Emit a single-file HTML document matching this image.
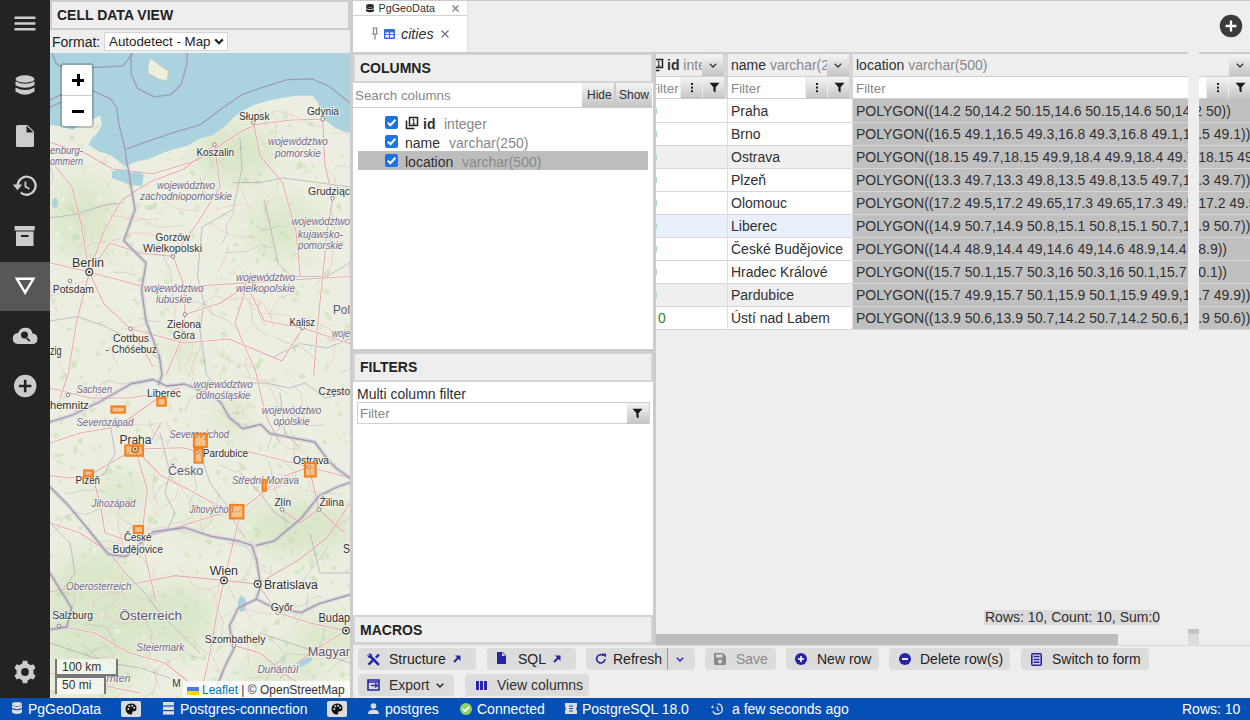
<!DOCTYPE html>
<html><head><meta charset="utf-8">
<style>
*{box-sizing:border-box;margin:0;padding:0}
html,body{width:1250px;height:720px;overflow:hidden;background:#cccccc;font-family:"Liberation Sans",sans-serif;font-size:14px;color:#303030}
.a{position:absolute}
.hdr{background:#eeeeee;font-weight:bold;font-size:14px;color:#222}
.btn{position:absolute;background:#dcdcdc;border-radius:4px;height:22px}
.gb{position:absolute;background:linear-gradient(#f4f4f4,#c4c4c4)}
.t{position:absolute;white-space:nowrap;line-height:16px}
.ic{position:absolute;fill:#2a2aa0}
.row{position:absolute;left:656px;width:594px;height:23px;border-bottom:1px solid #dddddd}
svg{position:absolute;overflow:visible}
</style></head><body>

<div class="a" style="left:0;top:0;width:50px;height:698px;background:#232323"></div>
<div class="a" style="left:0;top:262px;width:50px;height:49px;background:#575757"></div>
<svg style="left:0;top:0" width="50" height="698">
 <g fill="#cccccc">
  <rect x="14.5" y="16.5" width="21" height="2.6" rx="0.5"/>
  <rect x="14.5" y="22.2" width="21" height="2.6" rx="0.5"/>
  <rect x="14.5" y="28" width="21" height="2.6" rx="0.5"/>
  <!-- db -->
  <ellipse cx="25" cy="79" rx="9.5" ry="3.7"/>
  <path d="M15.5 81.2 Q25 86.5 34.5 81.2 L34.5 85.2 Q25 90.5 15.5 85.2 Z"/>
  <path d="M15.5 87.4 Q25 92.7 34.5 87.4 L34.5 91.6 Q25 98 15.5 91.6 Z"/>
  <!-- file -->
  <path d="M17.5 125 L27.5 125 L34 131.5 L34 145.5 Q34 147 32.5 147 L17.5 147 Q16 147 16 145.5 L16 126.5 Q16 125 17.5 125 Z M26.5 125.5 L26.5 132.5 L33.5 132.5 Z" fill-rule="evenodd"/>
  <!-- history -->
 </g>
 <path d="M17.6 185.5 A9 9 0 1 1 20.8 192.6" fill="none" stroke="#cccccc" stroke-width="2.3"/>
 <path d="M25.4 181.5 V186.6 L29.4 189" fill="none" stroke="#cccccc" stroke-width="1.8"/>
 <g fill="#cccccc">
  <path d="M12.8 184.6 L22.2 184.6 L17.5 190.2 Z"/>
  <!-- archive -->
  <rect x="14.6" y="226" width="20.1" height="4.5"/>
  <path d="M16 231.5 L33.5 231.5 L33.5 246 L16 246 Z M21 235 L21 237 L28.5 237 L28.5 235 Z" fill-rule="evenodd"/>
  <!-- cloud search -->
  <path d="M19 344 Q12.8 344 12.8 338.5 Q12.8 333.5 18 333 Q20 327.8 25.5 327.8 Q31.5 327.8 32.5 333.5 Q37.5 334 37.5 338.8 Q37.5 344 32 344 Z M24.5 331.5 A3.5 3.5 0 1 0 24.5 338.5 A3.5 3.5 0 1 0 24.5 331.5 Z M27 337 L30.5 340.5 L29.2 341.8 L25.7 338.3 Z" fill-rule="evenodd"/>
  <circle cx="24.5" cy="335" r="2.2" fill="#232323"/>
  <!-- plus circle -->
  <circle cx="25.2" cy="386" r="11.2"/>
  <!-- gear -->
  <path d="M22.8 660.8 L27.2 660.8 L27.8 663.6 Q29.4 664.2 30.6 665.2 L33.4 664.2 L35.6 668 L33.4 670 Q33.6 672 33.4 673.8 L35.6 675.8 L33.4 679.6 L30.6 678.6 Q29.4 679.6 27.8 680.2 L27.2 683.2 L22.8 683.2 L22.2 680.2 Q20.6 679.6 19.4 678.6 L16.6 679.6 L14.4 675.8 L16.6 673.8 Q16.4 672 16.6 670 L14.4 668 L16.6 664.2 L19.4 665.2 Q20.6 664.2 22.2 663.6 Z"/>
 </g>
 <path d="M19 386 L31.4 386 M25.2 379.8 L25.2 392.2" stroke="#232323" stroke-width="2.6"/>
 <circle cx="25" cy="672" r="3.9" fill="#232323"/>
 <path d="M16.8 278.8 L33.4 278.8 L25.1 292.6 Z" fill="none" stroke="#ffffff" stroke-width="2.4" stroke-linejoin="miter"/>
</svg>

<!-- cell data view panel -->
<div class="a" style="left:50px;top:0;width:300px;height:30px;background:#cccccc"></div>
<div class="a hdr" style="left:52px;top:2px;width:296px;height:26px"></div>
<div class="t hdr" style="left:57px;top:7px">CELL DATA VIEW</div>
<div class="a" style="left:50px;top:30px;width:300px;height:23px;background:#eeeeee"></div>
<div class="t" style="left:52px;top:34px;color:#222">Format:</div>
<div class="a" style="left:104px;top:32px;width:124px;height:19px;background:#fff;border:1px solid #d4d4d4;border-radius:0"></div>
<div class="t" style="left:109px;top:34px;color:#222;font-size:13.333px">Autodetect - Map</div>
<svg style="left:214px;top:38px" width="10" height="7" viewBox="0 0 10 7"><path d="M1.2 1.4 L5 5.2 L8.8 1.4" fill="none" stroke="#222" stroke-width="2.2"/></svg>
<div class="a" style="left:50px;top:53px;width:300px;height:645px;background:#ebeee0;overflow:hidden">
<svg style="left:0;top:0" width="300" height="645" viewBox="0 0 300 645">
<defs><filter id="bl" x="-50%" y="-50%" width="200%" height="200%"><feGaussianBlur stdDeviation="10"/></filter></defs>
<ellipse cx="185" cy="100" rx="40" ry="30" fill="#c9e0b3" opacity="0.50" filter="url(#bl)"/>
<ellipse cx="33" cy="165" rx="35" ry="38" fill="#c9e0b3" opacity="0.45" filter="url(#bl)"/>
<ellipse cx="232" cy="175" rx="36" ry="28" fill="#c9e0b3" opacity="0.45" filter="url(#bl)"/>
<ellipse cx="134" cy="300" rx="20" ry="14" fill="#c9e0b3" opacity="0.35" filter="url(#bl)"/>
<ellipse cx="45" cy="570" rx="50" ry="75" fill="#c9e0b3" opacity="0.50" filter="url(#bl)"/>
<ellipse cx="250" cy="475" rx="55" ry="28" fill="#c9e0b3" opacity="0.50" filter="url(#bl)"/>
<ellipse cx="125" cy="565" rx="40" ry="35" fill="#c9e0b3" opacity="0.50" filter="url(#bl)"/>
<ellipse cx="275" cy="585" rx="28" ry="25" fill="#c9e0b3" opacity="0.45" filter="url(#bl)"/>
<ellipse cx="180" cy="365" rx="15" ry="25" fill="#c9e0b3" opacity="0.35" filter="url(#bl)"/>
<ellipse cx="70" cy="440" rx="30" ry="20" fill="#c9e0b3" opacity="0.35" filter="url(#bl)"/>
<ellipse cx="150" cy="470" rx="20" ry="15" fill="#c9e0b3" opacity="0.30" filter="url(#bl)"/>
<ellipse cx="230" cy="620" rx="40" ry="25" fill="#c9e0b3" opacity="0.35" filter="url(#bl)"/>
<ellipse cx="97.1" cy="131.3" rx="3.0" ry="1.1" transform="rotate(96 97.1 131.3)" fill="#c3ddb0" opacity="0.6"/>
<ellipse cx="174.8" cy="590.4" rx="1.6" ry="1.2" transform="rotate(75 174.8 590.4)" fill="#d6e8c4" opacity="0.6"/>
<ellipse cx="27.2" cy="296.8" rx="3.5" ry="1.2" transform="rotate(40 27.2 296.8)" fill="#cfe3ba" opacity="0.6"/>
<ellipse cx="173.1" cy="280.0" rx="3.9" ry="1.1" transform="rotate(155 173.1 280.0)" fill="#c3ddb0" opacity="0.6"/>
<ellipse cx="125.7" cy="367.1" rx="2.7" ry="2.1" transform="rotate(123 125.7 367.1)" fill="#cfe3ba" opacity="0.6"/>
<ellipse cx="174.5" cy="426.5" rx="2.1" ry="2.1" transform="rotate(11 174.5 426.5)" fill="#cfe3ba" opacity="0.6"/>
<ellipse cx="185.7" cy="340.3" rx="2.6" ry="2.6" transform="rotate(84 185.7 340.3)" fill="#f4f1ea" opacity="0.6"/>
<ellipse cx="108.5" cy="190.3" rx="1.5" ry="2.6" transform="rotate(15 108.5 190.3)" fill="#c3ddb0" opacity="0.6"/>
<ellipse cx="157.6" cy="569.5" rx="3.2" ry="1.6" transform="rotate(176 157.6 569.5)" fill="#cfe3ba" opacity="0.6"/>
<ellipse cx="153.6" cy="139.8" rx="2.0" ry="2.9" transform="rotate(76 153.6 139.8)" fill="#cfe3ba" opacity="0.6"/>
<ellipse cx="229.4" cy="386.7" rx="3.6" ry="1.6" transform="rotate(125 229.4 386.7)" fill="#f4f1ea" opacity="0.6"/>
<ellipse cx="174.0" cy="316.0" rx="3.5" ry="2.9" transform="rotate(85 174.0 316.0)" fill="#cfe3ba" opacity="0.6"/>
<ellipse cx="18.2" cy="464.4" rx="2.9" ry="3.0" transform="rotate(148 18.2 464.4)" fill="#c3ddb0" opacity="0.6"/>
<ellipse cx="215.0" cy="576.7" rx="2.0" ry="2.9" transform="rotate(64 215.0 576.7)" fill="#cfe3ba" opacity="0.6"/>
<ellipse cx="148.1" cy="172.0" rx="1.9" ry="2.5" transform="rotate(72 148.1 172.0)" fill="#f4f1ea" opacity="0.6"/>
<ellipse cx="24.2" cy="311.8" rx="2.6" ry="2.8" transform="rotate(147 24.2 311.8)" fill="#c3ddb0" opacity="0.6"/>
<ellipse cx="211.9" cy="636.8" rx="3.0" ry="1.8" transform="rotate(42 211.9 636.8)" fill="#cfe3ba" opacity="0.6"/>
<ellipse cx="52.9" cy="180.3" rx="1.7" ry="2.0" transform="rotate(106 52.9 180.3)" fill="#c3ddb0" opacity="0.6"/>
<ellipse cx="84.6" cy="128.1" rx="2.6" ry="2.2" transform="rotate(57 84.6 128.1)" fill="#d6e8c4" opacity="0.6"/>
<ellipse cx="207.1" cy="351.9" rx="2.9" ry="2.4" transform="rotate(10 207.1 351.9)" fill="#f4f1ea" opacity="0.6"/>
<ellipse cx="119.4" cy="278.4" rx="2.4" ry="1.8" transform="rotate(34 119.4 278.4)" fill="#d6e8c4" opacity="0.6"/>
<ellipse cx="132.2" cy="106.5" rx="2.8" ry="1.2" transform="rotate(102 132.2 106.5)" fill="#cfe3ba" opacity="0.6"/>
<ellipse cx="284.7" cy="411.3" rx="1.2" ry="1.4" transform="rotate(68 284.7 411.3)" fill="#c3ddb0" opacity="0.6"/>
<ellipse cx="286.6" cy="404.4" rx="2.4" ry="1.2" transform="rotate(88 286.6 404.4)" fill="#f4f1ea" opacity="0.6"/>
<ellipse cx="144.1" cy="228.7" rx="1.4" ry="2.5" transform="rotate(133 144.1 228.7)" fill="#f4f1ea" opacity="0.6"/>
<ellipse cx="248.7" cy="137.7" rx="1.1" ry="2.9" transform="rotate(95 248.7 137.7)" fill="#d6e8c4" opacity="0.6"/>
<ellipse cx="207.0" cy="593.1" rx="3.3" ry="1.6" transform="rotate(116 207.0 593.1)" fill="#cfe3ba" opacity="0.6"/>
<ellipse cx="208.9" cy="198.0" rx="2.1" ry="1.3" transform="rotate(139 208.9 198.0)" fill="#c3ddb0" opacity="0.6"/>
<ellipse cx="190.9" cy="411.0" rx="3.4" ry="2.5" transform="rotate(35 190.9 411.0)" fill="#d6e8c4" opacity="0.6"/>
<ellipse cx="245.5" cy="487.6" rx="1.7" ry="2.0" transform="rotate(64 245.5 487.6)" fill="#cfe3ba" opacity="0.6"/>
<ellipse cx="296.9" cy="518.0" rx="2.4" ry="1.4" transform="rotate(109 296.9 518.0)" fill="#c3ddb0" opacity="0.6"/>
<ellipse cx="134.2" cy="606.9" rx="4.0" ry="2.9" transform="rotate(66 134.2 606.9)" fill="#d6e8c4" opacity="0.6"/>
<ellipse cx="30.6" cy="324.4" rx="2.0" ry="2.0" transform="rotate(177 30.6 324.4)" fill="#cfe3ba" opacity="0.6"/>
<ellipse cx="143.8" cy="435.1" rx="3.4" ry="1.2" transform="rotate(119 143.8 435.1)" fill="#f4f1ea" opacity="0.6"/>
<ellipse cx="234.7" cy="493.8" rx="2.4" ry="1.4" transform="rotate(142 234.7 493.8)" fill="#c3ddb0" opacity="0.6"/>
<ellipse cx="26.0" cy="612.4" rx="3.2" ry="1.9" transform="rotate(134 26.0 612.4)" fill="#cfe3ba" opacity="0.6"/>
<ellipse cx="217.4" cy="142.9" rx="1.4" ry="1.3" transform="rotate(163 217.4 142.9)" fill="#d6e8c4" opacity="0.6"/>
<ellipse cx="183.5" cy="400.5" rx="2.4" ry="2.9" transform="rotate(28 183.5 400.5)" fill="#d6e8c4" opacity="0.6"/>
<ellipse cx="6.4" cy="523.6" rx="3.2" ry="1.2" transform="rotate(135 6.4 523.6)" fill="#d6e8c4" opacity="0.6"/>
<ellipse cx="130.1" cy="567.4" rx="3.5" ry="1.4" transform="rotate(45 130.1 567.4)" fill="#c3ddb0" opacity="0.6"/>
<ellipse cx="150.3" cy="502.0" rx="2.0" ry="2.1" transform="rotate(150 150.3 502.0)" fill="#cfe3ba" opacity="0.6"/>
<ellipse cx="273.0" cy="254.0" rx="2.4" ry="2.2" transform="rotate(163 273.0 254.0)" fill="#f4f1ea" opacity="0.6"/>
<ellipse cx="248.1" cy="571.3" rx="1.4" ry="1.3" transform="rotate(92 248.1 571.3)" fill="#f4f1ea" opacity="0.6"/>
<ellipse cx="233.0" cy="408.2" rx="3.3" ry="1.3" transform="rotate(25 233.0 408.2)" fill="#cfe3ba" opacity="0.6"/>
<ellipse cx="166.9" cy="237.2" rx="2.6" ry="2.1" transform="rotate(141 166.9 237.2)" fill="#cfe3ba" opacity="0.6"/>
<ellipse cx="265.0" cy="74.4" rx="1.6" ry="1.1" transform="rotate(18 265.0 74.4)" fill="#f4f1ea" opacity="0.6"/>
<ellipse cx="168.5" cy="499.8" rx="3.7" ry="1.9" transform="rotate(110 168.5 499.8)" fill="#d6e8c4" opacity="0.6"/>
<ellipse cx="207.8" cy="313.7" rx="2.6" ry="2.0" transform="rotate(169 207.8 313.7)" fill="#c3ddb0" opacity="0.6"/>
<ellipse cx="276.8" cy="580.1" rx="1.6" ry="1.9" transform="rotate(75 276.8 580.1)" fill="#f4f1ea" opacity="0.6"/>
<ellipse cx="132.6" cy="83.9" rx="1.7" ry="1.1" transform="rotate(121 132.6 83.9)" fill="#cfe3ba" opacity="0.6"/>
<ellipse cx="269.1" cy="133.4" rx="3.1" ry="2.3" transform="rotate(26 269.1 133.4)" fill="#d6e8c4" opacity="0.6"/>
<ellipse cx="290.3" cy="172.9" rx="3.9" ry="1.8" transform="rotate(88 290.3 172.9)" fill="#d6e8c4" opacity="0.6"/>
<ellipse cx="48.4" cy="301.1" rx="2.5" ry="1.7" transform="rotate(35 48.4 301.1)" fill="#c3ddb0" opacity="0.6"/>
<ellipse cx="27.7" cy="261.4" rx="2.0" ry="1.9" transform="rotate(127 27.7 261.4)" fill="#f4f1ea" opacity="0.6"/>
<ellipse cx="99.4" cy="417.5" rx="2.5" ry="1.1" transform="rotate(177 99.4 417.5)" fill="#d6e8c4" opacity="0.6"/>
<ellipse cx="291.5" cy="103.4" rx="1.8" ry="1.1" transform="rotate(140 291.5 103.4)" fill="#c3ddb0" opacity="0.6"/>
<ellipse cx="226.7" cy="536.0" rx="3.5" ry="2.4" transform="rotate(170 226.7 536.0)" fill="#f4f1ea" opacity="0.6"/>
<ellipse cx="44.8" cy="596.1" rx="2.7" ry="2.4" transform="rotate(16 44.8 596.1)" fill="#cfe3ba" opacity="0.6"/>
<ellipse cx="239.9" cy="150.9" rx="3.7" ry="1.5" transform="rotate(3 239.9 150.9)" fill="#cfe3ba" opacity="0.6"/>
<ellipse cx="240.5" cy="90.7" rx="3.6" ry="1.1" transform="rotate(155 240.5 90.7)" fill="#f4f1ea" opacity="0.6"/>
<ellipse cx="3.5" cy="641.6" rx="2.3" ry="2.8" transform="rotate(112 3.5 641.6)" fill="#cfe3ba" opacity="0.6"/>
<ellipse cx="158.1" cy="184.3" rx="1.3" ry="1.3" transform="rotate(9 158.1 184.3)" fill="#d6e8c4" opacity="0.6"/>
<ellipse cx="279.7" cy="420.3" rx="2.6" ry="1.4" transform="rotate(80 279.7 420.3)" fill="#d6e8c4" opacity="0.6"/>
<ellipse cx="81.2" cy="526.2" rx="4.0" ry="1.1" transform="rotate(3 81.2 526.2)" fill="#d6e8c4" opacity="0.6"/>
<ellipse cx="154.3" cy="188.6" rx="2.3" ry="2.3" transform="rotate(117 154.3 188.6)" fill="#f4f1ea" opacity="0.6"/>
<ellipse cx="163.8" cy="577.7" rx="3.9" ry="1.6" transform="rotate(39 163.8 577.7)" fill="#d6e8c4" opacity="0.6"/>
<ellipse cx="102.8" cy="543.5" rx="3.1" ry="2.3" transform="rotate(73 102.8 543.5)" fill="#c3ddb0" opacity="0.6"/>
<ellipse cx="294.6" cy="546.4" rx="1.0" ry="2.3" transform="rotate(158 294.6 546.4)" fill="#f4f1ea" opacity="0.6"/>
<ellipse cx="49.0" cy="91.1" rx="3.5" ry="2.7" transform="rotate(121 49.0 91.1)" fill="#c3ddb0" opacity="0.6"/>
<ellipse cx="179.6" cy="459.1" rx="1.1" ry="1.4" transform="rotate(48 179.6 459.1)" fill="#cfe3ba" opacity="0.6"/>
<ellipse cx="79.0" cy="621.9" rx="3.9" ry="2.1" transform="rotate(44 79.0 621.9)" fill="#c3ddb0" opacity="0.6"/>
<ellipse cx="65.4" cy="150.7" rx="2.0" ry="1.2" transform="rotate(50 65.4 150.7)" fill="#d6e8c4" opacity="0.6"/>
<ellipse cx="74.5" cy="509.6" rx="1.3" ry="2.6" transform="rotate(26 74.5 509.6)" fill="#cfe3ba" opacity="0.6"/>
<ellipse cx="118.2" cy="221.3" rx="2.9" ry="1.2" transform="rotate(172 118.2 221.3)" fill="#d6e8c4" opacity="0.6"/>
<ellipse cx="197.3" cy="473.2" rx="3.6" ry="1.8" transform="rotate(59 197.3 473.2)" fill="#f4f1ea" opacity="0.6"/>
<ellipse cx="44.8" cy="478.1" rx="2.9" ry="1.1" transform="rotate(150 44.8 478.1)" fill="#f4f1ea" opacity="0.6"/>
<ellipse cx="220.2" cy="531.4" rx="1.4" ry="2.0" transform="rotate(91 220.2 531.4)" fill="#cfe3ba" opacity="0.6"/>
<ellipse cx="247.9" cy="393.4" rx="3.7" ry="2.4" transform="rotate(125 247.9 393.4)" fill="#d6e8c4" opacity="0.6"/>
<ellipse cx="25.5" cy="65.3" rx="2.9" ry="2.9" transform="rotate(68 25.5 65.3)" fill="#f4f1ea" opacity="0.6"/>
<ellipse cx="167.6" cy="419.8" rx="2.9" ry="2.4" transform="rotate(88 167.6 419.8)" fill="#cfe3ba" opacity="0.6"/>
<ellipse cx="137.1" cy="82.4" rx="3.8" ry="2.8" transform="rotate(17 137.1 82.4)" fill="#cfe3ba" opacity="0.6"/>
<ellipse cx="223.7" cy="326.7" rx="3.4" ry="2.7" transform="rotate(42 223.7 326.7)" fill="#d6e8c4" opacity="0.6"/>
<ellipse cx="69.2" cy="433.2" rx="2.4" ry="2.7" transform="rotate(14 69.2 433.2)" fill="#c3ddb0" opacity="0.6"/>
<ellipse cx="230.1" cy="413.3" rx="2.9" ry="1.2" transform="rotate(27 230.1 413.3)" fill="#c3ddb0" opacity="0.6"/>
<ellipse cx="195.5" cy="459.2" rx="2.9" ry="1.3" transform="rotate(87 195.5 459.2)" fill="#f4f1ea" opacity="0.6"/>
<ellipse cx="80.6" cy="446.6" rx="3.1" ry="2.4" transform="rotate(52 80.6 446.6)" fill="#c3ddb0" opacity="0.6"/>
<ellipse cx="139.4" cy="322.1" rx="1.4" ry="2.8" transform="rotate(36 139.4 322.1)" fill="#cfe3ba" opacity="0.6"/>
<ellipse cx="280.9" cy="50.6" rx="2.4" ry="2.6" transform="rotate(174 280.9 50.6)" fill="#f4f1ea" opacity="0.6"/>
<ellipse cx="298.2" cy="274.0" rx="3.7" ry="2.9" transform="rotate(13 298.2 274.0)" fill="#cfe3ba" opacity="0.6"/>
<ellipse cx="42.5" cy="357.1" rx="3.9" ry="1.3" transform="rotate(148 42.5 357.1)" fill="#c3ddb0" opacity="0.6"/>
<ellipse cx="266.1" cy="465.5" rx="1.7" ry="2.8" transform="rotate(88 266.1 465.5)" fill="#cfe3ba" opacity="0.6"/>
<ellipse cx="47.7" cy="614.7" rx="3.0" ry="1.8" transform="rotate(131 47.7 614.7)" fill="#f4f1ea" opacity="0.6"/>
<ellipse cx="103.2" cy="231.2" rx="3.5" ry="1.0" transform="rotate(135 103.2 231.2)" fill="#f4f1ea" opacity="0.6"/>
<ellipse cx="36.0" cy="600.5" rx="3.1" ry="2.8" transform="rotate(52 36.0 600.5)" fill="#c3ddb0" opacity="0.6"/>
<ellipse cx="19.5" cy="276.0" rx="3.6" ry="1.2" transform="rotate(167 19.5 276.0)" fill="#c3ddb0" opacity="0.6"/>
<ellipse cx="256.3" cy="209.8" rx="1.2" ry="2.3" transform="rotate(114 256.3 209.8)" fill="#d6e8c4" opacity="0.6"/>
<ellipse cx="74.8" cy="200.8" rx="2.5" ry="1.4" transform="rotate(67 74.8 200.8)" fill="#f4f1ea" opacity="0.6"/>
<ellipse cx="265.3" cy="531.2" rx="2.9" ry="2.8" transform="rotate(169 265.3 531.2)" fill="#d6e8c4" opacity="0.6"/>
<ellipse cx="215.9" cy="69.9" rx="3.2" ry="1.9" transform="rotate(135 215.9 69.9)" fill="#c3ddb0" opacity="0.6"/>
<ellipse cx="145.7" cy="591.7" rx="2.7" ry="1.3" transform="rotate(75 145.7 591.7)" fill="#c3ddb0" opacity="0.6"/>
<ellipse cx="89.3" cy="487.1" rx="3.9" ry="1.5" transform="rotate(118 89.3 487.1)" fill="#c3ddb0" opacity="0.6"/>
<ellipse cx="145.0" cy="444.7" rx="1.4" ry="2.3" transform="rotate(14 145.0 444.7)" fill="#f4f1ea" opacity="0.6"/>
<ellipse cx="165.1" cy="314.1" rx="2.0" ry="2.5" transform="rotate(77 165.1 314.1)" fill="#d6e8c4" opacity="0.6"/>
<ellipse cx="73.2" cy="145.7" rx="2.7" ry="1.6" transform="rotate(66 73.2 145.7)" fill="#d6e8c4" opacity="0.6"/>
<ellipse cx="266.2" cy="493.5" rx="2.2" ry="1.8" transform="rotate(94 266.2 493.5)" fill="#f4f1ea" opacity="0.6"/>
<ellipse cx="81.1" cy="495.0" rx="2.5" ry="2.1" transform="rotate(65 81.1 495.0)" fill="#d6e8c4" opacity="0.6"/>
<ellipse cx="27.8" cy="582.6" rx="2.2" ry="2.3" transform="rotate(78 27.8 582.6)" fill="#c3ddb0" opacity="0.6"/>
<ellipse cx="254.6" cy="568.1" rx="1.1" ry="1.1" transform="rotate(128 254.6 568.1)" fill="#f4f1ea" opacity="0.6"/>
<ellipse cx="290.5" cy="336.3" rx="1.2" ry="2.9" transform="rotate(167 290.5 336.3)" fill="#f4f1ea" opacity="0.6"/>
<ellipse cx="291.7" cy="190.3" rx="1.3" ry="1.3" transform="rotate(94 291.7 190.3)" fill="#cfe3ba" opacity="0.6"/>
<ellipse cx="282.4" cy="476.6" rx="2.9" ry="2.5" transform="rotate(82 282.4 476.6)" fill="#cfe3ba" opacity="0.6"/>
<ellipse cx="0.4" cy="116.0" rx="2.7" ry="1.1" transform="rotate(129 0.4 116.0)" fill="#d6e8c4" opacity="0.6"/>
<ellipse cx="187.9" cy="359.6" rx="2.3" ry="2.5" transform="rotate(18 187.9 359.6)" fill="#c3ddb0" opacity="0.6"/>
<ellipse cx="157.3" cy="392.6" rx="2.2" ry="1.4" transform="rotate(108 157.3 392.6)" fill="#cfe3ba" opacity="0.6"/>
<ellipse cx="161.2" cy="642.8" rx="1.8" ry="1.6" transform="rotate(151 161.2 642.8)" fill="#d6e8c4" opacity="0.6"/>
<ellipse cx="142.6" cy="182.0" rx="1.7" ry="2.9" transform="rotate(127 142.6 182.0)" fill="#c3ddb0" opacity="0.6"/>
<ellipse cx="16.6" cy="157.4" rx="3.7" ry="2.3" transform="rotate(15 16.6 157.4)" fill="#d6e8c4" opacity="0.6"/>
<ellipse cx="200.2" cy="599.7" rx="1.7" ry="1.1" transform="rotate(61 200.2 599.7)" fill="#f4f1ea" opacity="0.6"/>
<ellipse cx="108.7" cy="279.8" rx="1.0" ry="1.6" transform="rotate(152 108.7 279.8)" fill="#cfe3ba" opacity="0.6"/>
<ellipse cx="61.6" cy="626.8" rx="1.9" ry="2.6" transform="rotate(42 61.6 626.8)" fill="#d6e8c4" opacity="0.6"/>
<ellipse cx="79.5" cy="578.0" rx="1.3" ry="2.2" transform="rotate(110 79.5 578.0)" fill="#d6e8c4" opacity="0.6"/>
<ellipse cx="145.5" cy="590.8" rx="1.2" ry="2.2" transform="rotate(166 145.5 590.8)" fill="#cfe3ba" opacity="0.6"/>
<ellipse cx="63.9" cy="629.3" rx="1.4" ry="1.1" transform="rotate(11 63.9 629.3)" fill="#f4f1ea" opacity="0.6"/>
<ellipse cx="134.9" cy="470.8" rx="1.9" ry="1.2" transform="rotate(14 134.9 470.8)" fill="#d6e8c4" opacity="0.6"/>
<ellipse cx="98.8" cy="152.2" rx="3.8" ry="2.5" transform="rotate(6 98.8 152.2)" fill="#f4f1ea" opacity="0.6"/>
<ellipse cx="251.7" cy="635.9" rx="2.3" ry="1.2" transform="rotate(14 251.7 635.9)" fill="#cfe3ba" opacity="0.6"/>
<ellipse cx="105.4" cy="618.1" rx="1.4" ry="2.9" transform="rotate(37 105.4 618.1)" fill="#c3ddb0" opacity="0.6"/>
<ellipse cx="230.6" cy="226.8" rx="3.4" ry="1.2" transform="rotate(127 230.6 226.8)" fill="#d6e8c4" opacity="0.6"/>
<ellipse cx="111.8" cy="596.3" rx="1.6" ry="1.7" transform="rotate(161 111.8 596.3)" fill="#cfe3ba" opacity="0.6"/>
<ellipse cx="189.5" cy="190.0" rx="2.9" ry="1.8" transform="rotate(68 189.5 190.0)" fill="#f4f1ea" opacity="0.6"/>
<ellipse cx="18.8" cy="596.6" rx="1.8" ry="2.5" transform="rotate(162 18.8 596.6)" fill="#c3ddb0" opacity="0.6"/>
<ellipse cx="108.9" cy="242.7" rx="3.9" ry="1.1" transform="rotate(134 108.9 242.7)" fill="#c3ddb0" opacity="0.6"/>
<ellipse cx="277.3" cy="219.9" rx="3.2" ry="2.2" transform="rotate(145 277.3 219.9)" fill="#cfe3ba" opacity="0.6"/>
<ellipse cx="7.3" cy="181.5" rx="2.4" ry="2.9" transform="rotate(172 7.3 181.5)" fill="#f4f1ea" opacity="0.6"/>
<ellipse cx="236.9" cy="592.7" rx="3.4" ry="1.3" transform="rotate(89 236.9 592.7)" fill="#cfe3ba" opacity="0.6"/>
<ellipse cx="240.8" cy="486.8" rx="3.5" ry="2.5" transform="rotate(109 240.8 486.8)" fill="#c3ddb0" opacity="0.6"/>
<ellipse cx="258.4" cy="318.8" rx="3.4" ry="2.2" transform="rotate(92 258.4 318.8)" fill="#f4f1ea" opacity="0.6"/>
<ellipse cx="225.9" cy="189.6" rx="1.2" ry="1.1" transform="rotate(99 225.9 189.6)" fill="#c3ddb0" opacity="0.6"/>
<ellipse cx="48.2" cy="298.1" rx="1.3" ry="1.1" transform="rotate(112 48.2 298.1)" fill="#d6e8c4" opacity="0.6"/>
<ellipse cx="28.9" cy="341.6" rx="3.1" ry="1.9" transform="rotate(42 28.9 341.6)" fill="#f4f1ea" opacity="0.6"/>
<ellipse cx="138.3" cy="579.2" rx="1.7" ry="2.1" transform="rotate(139 138.3 579.2)" fill="#cfe3ba" opacity="0.6"/>
<ellipse cx="233.9" cy="217.8" rx="1.8" ry="1.5" transform="rotate(46 233.9 217.8)" fill="#c3ddb0" opacity="0.6"/>
<ellipse cx="59.8" cy="189.7" rx="1.7" ry="1.3" transform="rotate(159 59.8 189.7)" fill="#d6e8c4" opacity="0.6"/>
<ellipse cx="97.9" cy="279.6" rx="4.0" ry="2.0" transform="rotate(42 97.9 279.6)" fill="#cfe3ba" opacity="0.6"/>
<ellipse cx="196.0" cy="639.5" rx="1.3" ry="1.9" transform="rotate(147 196.0 639.5)" fill="#f4f1ea" opacity="0.6"/>
<ellipse cx="274.3" cy="64.4" rx="1.9" ry="1.2" transform="rotate(34 274.3 64.4)" fill="#d6e8c4" opacity="0.6"/>
<ellipse cx="279.1" cy="265.2" rx="3.6" ry="1.9" transform="rotate(47 279.1 265.2)" fill="#cfe3ba" opacity="0.6"/>
<ellipse cx="31.7" cy="400.7" rx="2.9" ry="1.4" transform="rotate(66 31.7 400.7)" fill="#d6e8c4" opacity="0.6"/>
<ellipse cx="13.2" cy="644.9" rx="1.1" ry="2.5" transform="rotate(165 13.2 644.9)" fill="#cfe3ba" opacity="0.6"/>
<ellipse cx="245.6" cy="287.4" rx="2.1" ry="2.2" transform="rotate(14 245.6 287.4)" fill="#cfe3ba" opacity="0.6"/>
<ellipse cx="238.6" cy="371.6" rx="1.2" ry="1.2" transform="rotate(71 238.6 371.6)" fill="#d6e8c4" opacity="0.6"/>
<ellipse cx="191.8" cy="95.1" rx="1.5" ry="2.4" transform="rotate(74 191.8 95.1)" fill="#c3ddb0" opacity="0.6"/>
<ellipse cx="200.3" cy="292.8" rx="1.2" ry="2.5" transform="rotate(159 200.3 292.8)" fill="#f4f1ea" opacity="0.6"/>
<ellipse cx="124.9" cy="562.9" rx="4.0" ry="1.7" transform="rotate(35 124.9 562.9)" fill="#f4f1ea" opacity="0.6"/>
<ellipse cx="61.1" cy="43.6" rx="3.7" ry="1.8" transform="rotate(148 61.1 43.6)" fill="#f4f1ea" opacity="0.6"/>
<ellipse cx="173.3" cy="260.7" rx="3.3" ry="1.3" transform="rotate(9 173.3 260.7)" fill="#d6e8c4" opacity="0.6"/>
<ellipse cx="192.2" cy="590.4" rx="1.3" ry="2.2" transform="rotate(67 192.2 590.4)" fill="#d6e8c4" opacity="0.6"/>
<ellipse cx="43.8" cy="211.4" rx="2.6" ry="2.9" transform="rotate(20 43.8 211.4)" fill="#f4f1ea" opacity="0.6"/>
<ellipse cx="226.1" cy="519.2" rx="3.4" ry="1.6" transform="rotate(151 226.1 519.2)" fill="#cfe3ba" opacity="0.6"/>
<ellipse cx="292.7" cy="332.1" rx="1.2" ry="2.9" transform="rotate(70 292.7 332.1)" fill="#d6e8c4" opacity="0.6"/>
<ellipse cx="192.1" cy="558.2" rx="2.9" ry="2.2" transform="rotate(35 192.1 558.2)" fill="#f4f1ea" opacity="0.6"/>
<ellipse cx="54.9" cy="172.0" rx="2.2" ry="2.0" transform="rotate(69 54.9 172.0)" fill="#cfe3ba" opacity="0.6"/>
<ellipse cx="44.8" cy="627.3" rx="3.4" ry="1.4" transform="rotate(159 44.8 627.3)" fill="#cfe3ba" opacity="0.6"/>
<ellipse cx="200.4" cy="236.1" rx="2.2" ry="1.9" transform="rotate(153 200.4 236.1)" fill="#c3ddb0" opacity="0.6"/>
<ellipse cx="194.7" cy="226.5" rx="1.7" ry="1.8" transform="rotate(66 194.7 226.5)" fill="#f4f1ea" opacity="0.6"/>
<ellipse cx="53.6" cy="42.1" rx="4.0" ry="1.9" transform="rotate(80 53.6 42.1)" fill="#f4f1ea" opacity="0.6"/>
<ellipse cx="251.0" cy="530.4" rx="2.2" ry="1.1" transform="rotate(65 251.0 530.4)" fill="#c3ddb0" opacity="0.6"/>
<ellipse cx="27.5" cy="307.4" rx="2.5" ry="1.1" transform="rotate(115 27.5 307.4)" fill="#cfe3ba" opacity="0.6"/>
<ellipse cx="276.6" cy="229.8" rx="3.2" ry="1.2" transform="rotate(135 276.6 229.8)" fill="#f4f1ea" opacity="0.6"/>
<ellipse cx="195.8" cy="514.5" rx="1.1" ry="1.1" transform="rotate(111 195.8 514.5)" fill="#cfe3ba" opacity="0.6"/>
<ellipse cx="58.1" cy="633.9" rx="2.5" ry="2.9" transform="rotate(165 58.1 633.9)" fill="#d6e8c4" opacity="0.6"/>
<ellipse cx="205.8" cy="476.3" rx="1.7" ry="2.7" transform="rotate(110 205.8 476.3)" fill="#c3ddb0" opacity="0.6"/>
<ellipse cx="47.6" cy="582.4" rx="1.8" ry="2.6" transform="rotate(26 47.6 582.4)" fill="#f4f1ea" opacity="0.6"/>
<ellipse cx="62.5" cy="199.0" rx="2.5" ry="1.6" transform="rotate(7 62.5 199.0)" fill="#d6e8c4" opacity="0.6"/>
<ellipse cx="121.0" cy="425.1" rx="1.8" ry="1.7" transform="rotate(68 121.0 425.1)" fill="#c3ddb0" opacity="0.6"/>
<ellipse cx="34.5" cy="361.1" rx="2.9" ry="1.7" transform="rotate(157 34.5 361.1)" fill="#cfe3ba" opacity="0.6"/>
<ellipse cx="75.6" cy="364.1" rx="3.6" ry="2.5" transform="rotate(67 75.6 364.1)" fill="#f4f1ea" opacity="0.6"/>
<ellipse cx="297.1" cy="389.3" rx="2.1" ry="2.5" transform="rotate(80 297.1 389.3)" fill="#d6e8c4" opacity="0.6"/>
<ellipse cx="184.6" cy="619.6" rx="1.9" ry="2.0" transform="rotate(56 184.6 619.6)" fill="#c3ddb0" opacity="0.6"/>
<ellipse cx="219.9" cy="492.0" rx="1.7" ry="1.6" transform="rotate(113 219.9 492.0)" fill="#f4f1ea" opacity="0.6"/>
<ellipse cx="153.8" cy="581.8" rx="1.4" ry="1.5" transform="rotate(118 153.8 581.8)" fill="#cfe3ba" opacity="0.6"/>
<ellipse cx="16.3" cy="383.1" rx="1.9" ry="2.0" transform="rotate(96 16.3 383.1)" fill="#f4f1ea" opacity="0.6"/>
<ellipse cx="175.1" cy="396.4" rx="1.6" ry="2.2" transform="rotate(85 175.1 396.4)" fill="#d6e8c4" opacity="0.6"/>
<ellipse cx="4.2" cy="524.9" rx="3.1" ry="1.9" transform="rotate(11 4.2 524.9)" fill="#d6e8c4" opacity="0.6"/>
<ellipse cx="261.4" cy="513.2" rx="2.2" ry="1.5" transform="rotate(2 261.4 513.2)" fill="#c3ddb0" opacity="0.6"/>
<ellipse cx="178.4" cy="390.0" rx="2.8" ry="2.0" transform="rotate(89 178.4 390.0)" fill="#d6e8c4" opacity="0.6"/>
<ellipse cx="271.1" cy="66.6" rx="2.6" ry="1.8" transform="rotate(43 271.1 66.6)" fill="#cfe3ba" opacity="0.6"/>
<ellipse cx="273.5" cy="103.5" rx="2.8" ry="2.3" transform="rotate(36 273.5 103.5)" fill="#f4f1ea" opacity="0.6"/>
<ellipse cx="59.9" cy="407.9" rx="2.5" ry="2.3" transform="rotate(146 59.9 407.9)" fill="#d6e8c4" opacity="0.6"/>
<ellipse cx="152.6" cy="78.6" rx="2.9" ry="3.0" transform="rotate(130 152.6 78.6)" fill="#f4f1ea" opacity="0.6"/>
<ellipse cx="214.6" cy="43.8" rx="3.5" ry="2.5" transform="rotate(84 214.6 43.8)" fill="#f4f1ea" opacity="0.6"/>
<ellipse cx="52.6" cy="642.9" rx="1.8" ry="2.3" transform="rotate(22 52.6 642.9)" fill="#c3ddb0" opacity="0.6"/>
<ellipse cx="213.5" cy="200.9" rx="2.7" ry="1.9" transform="rotate(142 213.5 200.9)" fill="#c3ddb0" opacity="0.6"/>
<ellipse cx="88.7" cy="601.8" rx="3.7" ry="1.2" transform="rotate(91 88.7 601.8)" fill="#d6e8c4" opacity="0.6"/>
<ellipse cx="78.1" cy="182.8" rx="3.2" ry="2.9" transform="rotate(134 78.1 182.8)" fill="#c3ddb0" opacity="0.6"/>
<ellipse cx="57.6" cy="275.2" rx="2.8" ry="1.8" transform="rotate(153 57.6 275.2)" fill="#f4f1ea" opacity="0.6"/>
<ellipse cx="141.6" cy="361.0" rx="1.0" ry="1.1" transform="rotate(172 141.6 361.0)" fill="#d6e8c4" opacity="0.6"/>
<ellipse cx="171.1" cy="226.2" rx="1.6" ry="2.2" transform="rotate(14 171.1 226.2)" fill="#d6e8c4" opacity="0.6"/>
<ellipse cx="43.4" cy="56.3" rx="1.3" ry="2.9" transform="rotate(62 43.4 56.3)" fill="#d6e8c4" opacity="0.6"/>
<ellipse cx="210.2" cy="58.7" rx="1.4" ry="2.3" transform="rotate(8 210.2 58.7)" fill="#cfe3ba" opacity="0.6"/>
<ellipse cx="221.0" cy="79.8" rx="2.8" ry="1.7" transform="rotate(147 221.0 79.8)" fill="#cfe3ba" opacity="0.6"/>
<ellipse cx="263.9" cy="497.2" rx="3.1" ry="1.8" transform="rotate(44 263.9 497.2)" fill="#d6e8c4" opacity="0.6"/>
<ellipse cx="33.6" cy="60.8" rx="3.5" ry="2.6" transform="rotate(114 33.6 60.8)" fill="#c3ddb0" opacity="0.6"/>
<ellipse cx="143.1" cy="120.3" rx="3.4" ry="2.3" transform="rotate(53 143.1 120.3)" fill="#c3ddb0" opacity="0.6"/>
<ellipse cx="127.1" cy="52.7" rx="1.8" ry="1.6" transform="rotate(129 127.1 52.7)" fill="#c3ddb0" opacity="0.6"/>
<ellipse cx="273.1" cy="505.4" rx="2.8" ry="2.0" transform="rotate(52 273.1 505.4)" fill="#cfe3ba" opacity="0.6"/>
<ellipse cx="236.7" cy="58.9" rx="2.6" ry="1.2" transform="rotate(84 236.7 58.9)" fill="#cfe3ba" opacity="0.6"/>
<ellipse cx="161.4" cy="171.0" rx="3.6" ry="1.2" transform="rotate(148 161.4 171.0)" fill="#d6e8c4" opacity="0.6"/>
<ellipse cx="130.8" cy="356.8" rx="1.9" ry="2.5" transform="rotate(10 130.8 356.8)" fill="#c3ddb0" opacity="0.6"/>
<ellipse cx="147.2" cy="337.3" rx="3.4" ry="1.4" transform="rotate(89 147.2 337.3)" fill="#c3ddb0" opacity="0.6"/>
<ellipse cx="287.2" cy="351.7" rx="2.7" ry="1.3" transform="rotate(147 287.2 351.7)" fill="#d6e8c4" opacity="0.6"/>
<ellipse cx="149.5" cy="106.5" rx="2.9" ry="1.2" transform="rotate(142 149.5 106.5)" fill="#cfe3ba" opacity="0.6"/>
<ellipse cx="188.4" cy="255.1" rx="2.2" ry="1.8" transform="rotate(160 188.4 255.1)" fill="#cfe3ba" opacity="0.6"/>
<ellipse cx="126.6" cy="430.7" rx="2.1" ry="1.6" transform="rotate(77 126.6 430.7)" fill="#d6e8c4" opacity="0.6"/>
<ellipse cx="113.8" cy="574.8" rx="1.7" ry="1.9" transform="rotate(96 113.8 574.8)" fill="#cfe3ba" opacity="0.6"/>
<ellipse cx="104.5" cy="237.6" rx="1.5" ry="2.7" transform="rotate(119 104.5 237.6)" fill="#c3ddb0" opacity="0.6"/>
<ellipse cx="50.9" cy="305.5" rx="3.3" ry="2.2" transform="rotate(23 50.9 305.5)" fill="#f4f1ea" opacity="0.6"/>
<ellipse cx="192.8" cy="461.4" rx="2.5" ry="1.5" transform="rotate(136 192.8 461.4)" fill="#d6e8c4" opacity="0.6"/>
<ellipse cx="217.0" cy="629.7" rx="3.2" ry="2.2" transform="rotate(63 217.0 629.7)" fill="#d6e8c4" opacity="0.6"/>
<ellipse cx="98.4" cy="154.5" rx="3.9" ry="2.5" transform="rotate(18 98.4 154.5)" fill="#cfe3ba" opacity="0.6"/>
<ellipse cx="58.6" cy="131.3" rx="1.4" ry="1.6" transform="rotate(54 58.6 131.3)" fill="#c3ddb0" opacity="0.6"/>
<ellipse cx="58.9" cy="426.0" rx="1.3" ry="1.4" transform="rotate(70 58.9 426.0)" fill="#cfe3ba" opacity="0.6"/>
<ellipse cx="3.8" cy="556.9" rx="2.3" ry="1.4" transform="rotate(177 3.8 556.9)" fill="#c3ddb0" opacity="0.6"/>
<ellipse cx="139.0" cy="125.8" rx="2.8" ry="1.8" transform="rotate(133 139.0 125.8)" fill="#f4f1ea" opacity="0.6"/>
<ellipse cx="210.3" cy="395.4" rx="2.9" ry="2.7" transform="rotate(120 210.3 395.4)" fill="#d6e8c4" opacity="0.6"/>
<ellipse cx="203.9" cy="428.1" rx="2.4" ry="1.6" transform="rotate(113 203.9 428.1)" fill="#cfe3ba" opacity="0.6"/>
<ellipse cx="268.4" cy="186.6" rx="2.2" ry="2.4" transform="rotate(28 268.4 186.6)" fill="#f4f1ea" opacity="0.6"/>
<ellipse cx="144.8" cy="51.9" rx="3.6" ry="2.0" transform="rotate(119 144.8 51.9)" fill="#d6e8c4" opacity="0.6"/>
<ellipse cx="268.3" cy="238.5" rx="1.0" ry="2.7" transform="rotate(163 268.3 238.5)" fill="#cfe3ba" opacity="0.6"/>
<ellipse cx="11.4" cy="368.7" rx="1.5" ry="2.6" transform="rotate(169 11.4 368.7)" fill="#c3ddb0" opacity="0.6"/>
<ellipse cx="30.3" cy="387.6" rx="2.6" ry="2.4" transform="rotate(92 30.3 387.6)" fill="#c3ddb0" opacity="0.6"/>
<ellipse cx="156.5" cy="288.3" rx="3.8" ry="1.4" transform="rotate(123 156.5 288.3)" fill="#f4f1ea" opacity="0.6"/>
<ellipse cx="154.1" cy="604.3" rx="3.2" ry="2.2" transform="rotate(115 154.1 604.3)" fill="#c3ddb0" opacity="0.6"/>
<ellipse cx="82.3" cy="281.8" rx="1.0" ry="1.8" transform="rotate(76 82.3 281.8)" fill="#c3ddb0" opacity="0.6"/>
<ellipse cx="174.1" cy="106.1" rx="1.9" ry="1.8" transform="rotate(172 174.1 106.1)" fill="#d6e8c4" opacity="0.6"/>
<ellipse cx="298.3" cy="621.3" rx="2.4" ry="1.3" transform="rotate(167 298.3 621.3)" fill="#cfe3ba" opacity="0.6"/>
<ellipse cx="242.9" cy="423.8" rx="2.4" ry="2.1" transform="rotate(41 242.9 423.8)" fill="#d6e8c4" opacity="0.6"/>
<ellipse cx="105.9" cy="426.5" rx="3.5" ry="2.6" transform="rotate(84 105.9 426.5)" fill="#c3ddb0" opacity="0.6"/>
<ellipse cx="228.0" cy="433.0" rx="3.3" ry="1.9" transform="rotate(141 228.0 433.0)" fill="#d6e8c4" opacity="0.6"/>
<ellipse cx="80.2" cy="267.6" rx="1.8" ry="1.9" transform="rotate(33 80.2 267.6)" fill="#cfe3ba" opacity="0.6"/>
<ellipse cx="241.6" cy="523.3" rx="2.1" ry="2.3" transform="rotate(58 241.6 523.3)" fill="#f4f1ea" opacity="0.6"/>
<ellipse cx="128.5" cy="425.6" rx="3.0" ry="1.7" transform="rotate(167 128.5 425.6)" fill="#f4f1ea" opacity="0.6"/>
<ellipse cx="17.1" cy="540.9" rx="3.7" ry="2.6" transform="rotate(25 17.1 540.9)" fill="#c3ddb0" opacity="0.6"/>
<ellipse cx="189.9" cy="49.1" rx="1.0" ry="2.9" transform="rotate(118 189.9 49.1)" fill="#c3ddb0" opacity="0.6"/>
<ellipse cx="182.5" cy="390.0" rx="3.6" ry="1.4" transform="rotate(81 182.5 390.0)" fill="#d6e8c4" opacity="0.6"/>
<ellipse cx="62.6" cy="283.5" rx="2.6" ry="2.2" transform="rotate(124 62.6 283.5)" fill="#cfe3ba" opacity="0.6"/>
<ellipse cx="200.5" cy="580.8" rx="3.4" ry="2.7" transform="rotate(36 200.5 580.8)" fill="#d6e8c4" opacity="0.6"/>
<ellipse cx="159.2" cy="488.9" rx="2.3" ry="2.8" transform="rotate(100 159.2 488.9)" fill="#c3ddb0" opacity="0.6"/>
<ellipse cx="125.7" cy="540.4" rx="2.4" ry="2.1" transform="rotate(87 125.7 540.4)" fill="#d6e8c4" opacity="0.6"/>
<ellipse cx="210.1" cy="189.2" rx="1.5" ry="2.2" transform="rotate(132 210.1 189.2)" fill="#d6e8c4" opacity="0.6"/>
<ellipse cx="252.2" cy="323.1" rx="2.7" ry="2.3" transform="rotate(151 252.2 323.1)" fill="#c3ddb0" opacity="0.6"/>
<ellipse cx="127.7" cy="645.0" rx="3.0" ry="1.4" transform="rotate(65 127.7 645.0)" fill="#cfe3ba" opacity="0.6"/>
<ellipse cx="6.2" cy="67.8" rx="3.2" ry="3.0" transform="rotate(146 6.2 67.8)" fill="#cfe3ba" opacity="0.6"/>
<ellipse cx="153.2" cy="333.2" rx="3.7" ry="1.1" transform="rotate(129 153.2 333.2)" fill="#d6e8c4" opacity="0.6"/>
<ellipse cx="101.6" cy="561.3" rx="2.1" ry="1.9" transform="rotate(95 101.6 561.3)" fill="#d6e8c4" opacity="0.6"/>
<ellipse cx="85.2" cy="246.9" rx="1.8" ry="1.1" transform="rotate(52 85.2 246.9)" fill="#c3ddb0" opacity="0.6"/>
<ellipse cx="248.3" cy="284.3" rx="2.5" ry="1.5" transform="rotate(91 248.3 284.3)" fill="#d6e8c4" opacity="0.6"/>
<ellipse cx="196.4" cy="519.1" rx="2.0" ry="1.6" transform="rotate(54 196.4 519.1)" fill="#cfe3ba" opacity="0.6"/>
<ellipse cx="235.3" cy="64.2" rx="3.2" ry="2.8" transform="rotate(98 235.3 64.2)" fill="#cfe3ba" opacity="0.6"/>
<ellipse cx="119.5" cy="105.6" rx="1.1" ry="2.6" transform="rotate(86 119.5 105.6)" fill="#cfe3ba" opacity="0.6"/>
<ellipse cx="236.7" cy="590.4" rx="2.8" ry="2.2" transform="rotate(113 236.7 590.4)" fill="#cfe3ba" opacity="0.6"/>
<ellipse cx="63.8" cy="443.5" rx="2.4" ry="2.5" transform="rotate(18 63.8 443.5)" fill="#d6e8c4" opacity="0.6"/>
<ellipse cx="260.8" cy="295.1" rx="1.3" ry="2.9" transform="rotate(2 260.8 295.1)" fill="#d6e8c4" opacity="0.6"/>
<ellipse cx="236.0" cy="380.1" rx="1.8" ry="1.6" transform="rotate(76 236.0 380.1)" fill="#c3ddb0" opacity="0.6"/>
<ellipse cx="6.1" cy="382.6" rx="2.7" ry="2.8" transform="rotate(90 6.1 382.6)" fill="#cfe3ba" opacity="0.6"/>
<ellipse cx="247.4" cy="508.1" rx="2.3" ry="2.4" transform="rotate(73 247.4 508.1)" fill="#cfe3ba" opacity="0.6"/>
<ellipse cx="4.2" cy="274.2" rx="2.8" ry="2.9" transform="rotate(177 4.2 274.2)" fill="#f4f1ea" opacity="0.6"/>
<ellipse cx="231.0" cy="372.0" rx="1.2" ry="1.9" transform="rotate(161 231.0 372.0)" fill="#cfe3ba" opacity="0.6"/>
<ellipse cx="128.1" cy="45.6" rx="3.0" ry="3.0" transform="rotate(155 128.1 45.6)" fill="#d6e8c4" opacity="0.6"/>
<ellipse cx="260.9" cy="118.0" rx="1.1" ry="2.4" transform="rotate(44 260.9 118.0)" fill="#d6e8c4" opacity="0.6"/>
<ellipse cx="276.8" cy="261.4" rx="3.2" ry="2.4" transform="rotate(26 276.8 261.4)" fill="#cfe3ba" opacity="0.6"/>
<ellipse cx="87.9" cy="377.3" rx="2.5" ry="2.3" transform="rotate(160 87.9 377.3)" fill="#cfe3ba" opacity="0.6"/>
<ellipse cx="215.2" cy="46.9" rx="1.0" ry="2.3" transform="rotate(147 215.2 46.9)" fill="#cfe3ba" opacity="0.6"/>
<ellipse cx="116.7" cy="229.1" rx="2.8" ry="2.9" transform="rotate(150 116.7 229.1)" fill="#cfe3ba" opacity="0.6"/>
<ellipse cx="94.9" cy="614.0" rx="3.2" ry="1.9" transform="rotate(30 94.9 614.0)" fill="#cfe3ba" opacity="0.6"/>
<ellipse cx="109.0" cy="430.2" rx="2.9" ry="1.8" transform="rotate(69 109.0 430.2)" fill="#f4f1ea" opacity="0.6"/>
<ellipse cx="283.5" cy="514.7" rx="2.7" ry="1.6" transform="rotate(11 283.5 514.7)" fill="#c3ddb0" opacity="0.6"/>
<ellipse cx="260.9" cy="479.1" rx="1.0" ry="1.3" transform="rotate(150 260.9 479.1)" fill="#f4f1ea" opacity="0.6"/>
<ellipse cx="292.9" cy="188.9" rx="2.2" ry="1.8" transform="rotate(139 292.9 188.9)" fill="#d6e8c4" opacity="0.6"/>
<ellipse cx="242.2" cy="211.4" rx="1.0" ry="1.5" transform="rotate(76 242.2 211.4)" fill="#cfe3ba" opacity="0.6"/>
<ellipse cx="86.6" cy="125.1" rx="3.7" ry="3.0" transform="rotate(26 86.6 125.1)" fill="#f4f1ea" opacity="0.6"/>
<ellipse cx="104.1" cy="91.5" rx="2.7" ry="2.6" transform="rotate(36 104.1 91.5)" fill="#d6e8c4" opacity="0.6"/>
<ellipse cx="92.8" cy="74.8" rx="2.2" ry="2.4" transform="rotate(167 92.8 74.8)" fill="#cfe3ba" opacity="0.6"/>
<ellipse cx="237.5" cy="318.1" rx="1.3" ry="2.6" transform="rotate(139 237.5 318.1)" fill="#d6e8c4" opacity="0.6"/>
<ellipse cx="119.5" cy="355.2" rx="1.8" ry="2.7" transform="rotate(58 119.5 355.2)" fill="#d6e8c4" opacity="0.6"/>
<ellipse cx="56.7" cy="156.3" rx="1.5" ry="2.4" transform="rotate(65 56.7 156.3)" fill="#c3ddb0" opacity="0.6"/>
<ellipse cx="120.7" cy="352.9" rx="1.4" ry="1.1" transform="rotate(179 120.7 352.9)" fill="#c3ddb0" opacity="0.6"/>
<ellipse cx="259.9" cy="264.9" rx="2.4" ry="1.2" transform="rotate(57 259.9 264.9)" fill="#cfe3ba" opacity="0.6"/>
<ellipse cx="103.5" cy="354.3" rx="1.1" ry="1.1" transform="rotate(178 103.5 354.3)" fill="#f4f1ea" opacity="0.6"/>
<ellipse cx="176.0" cy="169.2" rx="3.8" ry="1.6" transform="rotate(17 176.0 169.2)" fill="#f4f1ea" opacity="0.6"/>
<ellipse cx="230.2" cy="535.4" rx="3.9" ry="1.5" transform="rotate(7 230.2 535.4)" fill="#d6e8c4" opacity="0.6"/>
<ellipse cx="298.4" cy="268.8" rx="1.1" ry="1.1" transform="rotate(67 298.4 268.8)" fill="#f4f1ea" opacity="0.6"/>
<ellipse cx="146.1" cy="551.6" rx="3.7" ry="2.7" transform="rotate(115 146.1 551.6)" fill="#cfe3ba" opacity="0.6"/>
<ellipse cx="211.9" cy="94.4" rx="2.0" ry="1.5" transform="rotate(16 211.9 94.4)" fill="#f4f1ea" opacity="0.6"/>
<ellipse cx="54.8" cy="554.1" rx="2.1" ry="1.5" transform="rotate(130 54.8 554.1)" fill="#d6e8c4" opacity="0.6"/>
<ellipse cx="11.6" cy="194.8" rx="2.1" ry="2.8" transform="rotate(163 11.6 194.8)" fill="#cfe3ba" opacity="0.6"/>
<ellipse cx="77.4" cy="350.6" rx="3.2" ry="2.5" transform="rotate(87 77.4 350.6)" fill="#cfe3ba" opacity="0.6"/>
<ellipse cx="43.4" cy="496.7" rx="3.8" ry="2.4" transform="rotate(54 43.4 496.7)" fill="#f4f1ea" opacity="0.6"/>
<ellipse cx="227.4" cy="103.8" rx="2.0" ry="1.5" transform="rotate(22 227.4 103.8)" fill="#f4f1ea" opacity="0.6"/>
<ellipse cx="113.9" cy="307.0" rx="3.4" ry="2.8" transform="rotate(161 113.9 307.0)" fill="#f4f1ea" opacity="0.6"/>
<ellipse cx="215.2" cy="158.0" rx="1.1" ry="2.9" transform="rotate(40 215.2 158.0)" fill="#c3ddb0" opacity="0.6"/>
<ellipse cx="266.6" cy="124.6" rx="2.3" ry="1.2" transform="rotate(167 266.6 124.6)" fill="#cfe3ba" opacity="0.6"/>
<ellipse cx="188.5" cy="313.7" rx="2.0" ry="2.6" transform="rotate(86 188.5 313.7)" fill="#c3ddb0" opacity="0.6"/>
<ellipse cx="42.8" cy="174.1" rx="1.2" ry="2.4" transform="rotate(100 42.8 174.1)" fill="#d6e8c4" opacity="0.6"/>
<ellipse cx="131.7" cy="130.4" rx="2.3" ry="1.5" transform="rotate(5 131.7 130.4)" fill="#c3ddb0" opacity="0.6"/>
<ellipse cx="100.4" cy="141.5" rx="2.5" ry="1.6" transform="rotate(163 100.4 141.5)" fill="#cfe3ba" opacity="0.6"/>
<ellipse cx="46.0" cy="350.6" rx="2.9" ry="2.6" transform="rotate(167 46.0 350.6)" fill="#f4f1ea" opacity="0.6"/>
<ellipse cx="250.6" cy="112.1" rx="3.3" ry="2.9" transform="rotate(78 250.6 112.1)" fill="#c3ddb0" opacity="0.6"/>
<ellipse cx="299.4" cy="599.7" rx="1.3" ry="1.6" transform="rotate(161 299.4 599.7)" fill="#cfe3ba" opacity="0.6"/>
<ellipse cx="249.7" cy="632.0" rx="1.4" ry="2.3" transform="rotate(80 249.7 632.0)" fill="#c3ddb0" opacity="0.6"/>
<ellipse cx="153.2" cy="308.0" rx="3.4" ry="2.9" transform="rotate(52 153.2 308.0)" fill="#c3ddb0" opacity="0.6"/>
<ellipse cx="130.6" cy="591.7" rx="1.7" ry="2.1" transform="rotate(25 130.6 591.7)" fill="#d6e8c4" opacity="0.6"/>
<ellipse cx="156.5" cy="179.4" rx="1.5" ry="2.2" transform="rotate(149 156.5 179.4)" fill="#f4f1ea" opacity="0.6"/>
<ellipse cx="228.4" cy="146.1" rx="1.4" ry="2.3" transform="rotate(113 228.4 146.1)" fill="#d6e8c4" opacity="0.6"/>
<ellipse cx="174.9" cy="162.4" rx="1.2" ry="2.5" transform="rotate(73 174.9 162.4)" fill="#cfe3ba" opacity="0.6"/>
<ellipse cx="155.5" cy="250.3" rx="1.8" ry="2.3" transform="rotate(170 155.5 250.3)" fill="#cfe3ba" opacity="0.6"/>
<ellipse cx="4.6" cy="590.7" rx="2.4" ry="2.7" transform="rotate(48 4.6 590.7)" fill="#d6e8c4" opacity="0.6"/>
<ellipse cx="168.9" cy="636.4" rx="1.1" ry="2.4" transform="rotate(103 168.9 636.4)" fill="#cfe3ba" opacity="0.6"/>
<ellipse cx="106.8" cy="603.9" rx="3.9" ry="1.1" transform="rotate(64 106.8 603.9)" fill="#d6e8c4" opacity="0.6"/>
<ellipse cx="245.0" cy="563.6" rx="2.0" ry="2.4" transform="rotate(69 245.0 563.6)" fill="#cfe3ba" opacity="0.6"/>
<ellipse cx="87.5" cy="105.2" rx="3.2" ry="1.9" transform="rotate(5 87.5 105.2)" fill="#d6e8c4" opacity="0.6"/>
<ellipse cx="6.2" cy="625.3" rx="1.7" ry="1.4" transform="rotate(18 6.2 625.3)" fill="#c3ddb0" opacity="0.6"/>
<ellipse cx="166.6" cy="618.0" rx="1.1" ry="2.9" transform="rotate(133 166.6 618.0)" fill="#c3ddb0" opacity="0.6"/>
<ellipse cx="5.3" cy="402.6" rx="2.7" ry="2.0" transform="rotate(126 5.3 402.6)" fill="#cfe3ba" opacity="0.6"/>
<ellipse cx="105.2" cy="96.8" rx="1.5" ry="1.5" transform="rotate(84 105.2 96.8)" fill="#c3ddb0" opacity="0.6"/>
<ellipse cx="33.0" cy="113.5" rx="3.7" ry="2.1" transform="rotate(41 33.0 113.5)" fill="#d6e8c4" opacity="0.6"/>
<ellipse cx="44.2" cy="386.6" rx="3.2" ry="1.3" transform="rotate(149 44.2 386.6)" fill="#f4f1ea" opacity="0.6"/>
<ellipse cx="208.2" cy="401.2" rx="2.8" ry="1.1" transform="rotate(175 208.2 401.2)" fill="#cfe3ba" opacity="0.6"/>
<ellipse cx="233.1" cy="244.8" rx="1.7" ry="1.7" transform="rotate(78 233.1 244.8)" fill="#c3ddb0" opacity="0.6"/>
<ellipse cx="244.5" cy="552.8" rx="1.2" ry="2.0" transform="rotate(172 244.5 552.8)" fill="#c3ddb0" opacity="0.6"/>
<ellipse cx="74.8" cy="295.4" rx="2.9" ry="1.7" transform="rotate(96 74.8 295.4)" fill="#cfe3ba" opacity="0.6"/>
<ellipse cx="97.3" cy="161.5" rx="3.0" ry="1.5" transform="rotate(76 97.3 161.5)" fill="#f4f1ea" opacity="0.6"/>
<ellipse cx="233.0" cy="606.8" rx="2.9" ry="2.6" transform="rotate(159 233.0 606.8)" fill="#cfe3ba" opacity="0.6"/>
<ellipse cx="10.3" cy="428.2" rx="1.8" ry="2.4" transform="rotate(49 10.3 428.2)" fill="#cfe3ba" opacity="0.6"/>
<ellipse cx="186.4" cy="191.6" rx="2.6" ry="1.9" transform="rotate(171 186.4 191.6)" fill="#c3ddb0" opacity="0.6"/>
<ellipse cx="33.9" cy="250.3" rx="1.5" ry="1.1" transform="rotate(173 33.9 250.3)" fill="#c3ddb0" opacity="0.6"/>
<ellipse cx="25.3" cy="397.1" rx="3.8" ry="1.9" transform="rotate(92 25.3 397.1)" fill="#c3ddb0" opacity="0.6"/>
<ellipse cx="274.7" cy="389.3" rx="1.8" ry="2.5" transform="rotate(133 274.7 389.3)" fill="#c3ddb0" opacity="0.6"/>
<ellipse cx="251.9" cy="409.0" rx="2.7" ry="2.3" transform="rotate(36 251.9 409.0)" fill="#c3ddb0" opacity="0.6"/>
<ellipse cx="138.3" cy="371.6" rx="2.8" ry="1.9" transform="rotate(56 138.3 371.6)" fill="#d6e8c4" opacity="0.6"/>
<ellipse cx="100.1" cy="154.2" rx="2.6" ry="2.9" transform="rotate(71 100.1 154.2)" fill="#c3ddb0" opacity="0.6"/>
<ellipse cx="48.7" cy="616.0" rx="2.0" ry="1.7" transform="rotate(49 48.7 616.0)" fill="#d6e8c4" opacity="0.6"/>
<ellipse cx="88.7" cy="507.1" rx="1.5" ry="1.1" transform="rotate(157 88.7 507.1)" fill="#f4f1ea" opacity="0.6"/>
<ellipse cx="197.3" cy="352.8" rx="3.5" ry="1.7" transform="rotate(137 197.3 352.8)" fill="#d6e8c4" opacity="0.6"/>
<ellipse cx="296.8" cy="450.0" rx="3.8" ry="1.8" transform="rotate(120 296.8 450.0)" fill="#d6e8c4" opacity="0.6"/>
<ellipse cx="202.6" cy="412.9" rx="3.5" ry="2.6" transform="rotate(93 202.6 412.9)" fill="#f4f1ea" opacity="0.6"/>
<ellipse cx="80.6" cy="421.6" rx="2.9" ry="2.4" transform="rotate(74 80.6 421.6)" fill="#cfe3ba" opacity="0.6"/>
<ellipse cx="1.3" cy="503.2" rx="2.8" ry="2.0" transform="rotate(173 1.3 503.2)" fill="#d6e8c4" opacity="0.6"/>
<ellipse cx="125.4" cy="514.1" rx="3.6" ry="2.2" transform="rotate(68 125.4 514.1)" fill="#f4f1ea" opacity="0.6"/>
<ellipse cx="207.8" cy="214.3" rx="2.1" ry="1.7" transform="rotate(95 207.8 214.3)" fill="#f4f1ea" opacity="0.6"/>
<ellipse cx="194.5" cy="44.1" rx="3.2" ry="3.0" transform="rotate(69 194.5 44.1)" fill="#c3ddb0" opacity="0.6"/>
<ellipse cx="55.3" cy="223.9" rx="1.4" ry="2.2" transform="rotate(105 55.3 223.9)" fill="#cfe3ba" opacity="0.6"/>
<ellipse cx="246.5" cy="239.7" rx="3.9" ry="2.2" transform="rotate(44 246.5 239.7)" fill="#c3ddb0" opacity="0.6"/>
<ellipse cx="61.3" cy="298.0" rx="3.7" ry="1.0" transform="rotate(9 61.3 298.0)" fill="#f4f1ea" opacity="0.6"/>
<ellipse cx="89.9" cy="364.5" rx="1.9" ry="2.2" transform="rotate(79 89.9 364.5)" fill="#f4f1ea" opacity="0.6"/>
<ellipse cx="116.9" cy="256.4" rx="2.8" ry="1.7" transform="rotate(171 116.9 256.4)" fill="#cfe3ba" opacity="0.6"/>
<ellipse cx="157.6" cy="99.9" rx="2.1" ry="1.8" transform="rotate(101 157.6 99.9)" fill="#d6e8c4" opacity="0.6"/>
<ellipse cx="264.0" cy="623.5" rx="2.5" ry="1.9" transform="rotate(112 264.0 623.5)" fill="#c3ddb0" opacity="0.6"/>
<ellipse cx="207.5" cy="491.6" rx="1.3" ry="1.7" transform="rotate(66 207.5 491.6)" fill="#cfe3ba" opacity="0.6"/>
<ellipse cx="247.8" cy="350.1" rx="1.3" ry="2.8" transform="rotate(124 247.8 350.1)" fill="#f4f1ea" opacity="0.6"/>
<ellipse cx="189.3" cy="357.1" rx="3.4" ry="1.4" transform="rotate(161 189.3 357.1)" fill="#f4f1ea" opacity="0.6"/>
<ellipse cx="54.7" cy="421.2" rx="2.8" ry="1.7" transform="rotate(179 54.7 421.2)" fill="#cfe3ba" opacity="0.6"/>
<ellipse cx="207.5" cy="46.5" rx="1.0" ry="2.4" transform="rotate(100 207.5 46.5)" fill="#c3ddb0" opacity="0.6"/>
<ellipse cx="119.3" cy="99.6" rx="1.0" ry="1.1" transform="rotate(32 119.3 99.6)" fill="#c3ddb0" opacity="0.6"/>
<ellipse cx="261.3" cy="581.8" rx="2.5" ry="1.3" transform="rotate(36 261.3 581.8)" fill="#cfe3ba" opacity="0.6"/>
<ellipse cx="43.6" cy="353.6" rx="2.5" ry="1.1" transform="rotate(14 43.6 353.6)" fill="#f4f1ea" opacity="0.6"/>
<ellipse cx="246.9" cy="410.9" rx="3.4" ry="1.1" transform="rotate(2 246.9 410.9)" fill="#c3ddb0" opacity="0.6"/>
<ellipse cx="43.2" cy="184.1" rx="1.8" ry="1.1" transform="rotate(113 43.2 184.1)" fill="#cfe3ba" opacity="0.6"/>
<ellipse cx="104.7" cy="312.2" rx="2.2" ry="1.1" transform="rotate(160 104.7 312.2)" fill="#cfe3ba" opacity="0.6"/>
<ellipse cx="131.9" cy="415.2" rx="1.7" ry="1.1" transform="rotate(168 131.9 415.2)" fill="#d6e8c4" opacity="0.6"/>
<ellipse cx="94.4" cy="583.8" rx="3.4" ry="1.6" transform="rotate(108 94.4 583.8)" fill="#f4f1ea" opacity="0.6"/>
<ellipse cx="293.9" cy="80.9" rx="3.0" ry="2.3" transform="rotate(105 293.9 80.9)" fill="#f4f1ea" opacity="0.6"/>
<ellipse cx="92.7" cy="569.6" rx="2.5" ry="2.6" transform="rotate(44 92.7 569.6)" fill="#d6e8c4" opacity="0.6"/>
<ellipse cx="51.0" cy="269.3" rx="1.0" ry="2.8" transform="rotate(71 51.0 269.3)" fill="#c3ddb0" opacity="0.6"/>
<ellipse cx="34.5" cy="362.9" rx="2.2" ry="1.8" transform="rotate(12 34.5 362.9)" fill="#cfe3ba" opacity="0.6"/>
<ellipse cx="126.7" cy="592.4" rx="2.7" ry="1.8" transform="rotate(84 126.7 592.4)" fill="#c3ddb0" opacity="0.6"/>
<ellipse cx="71.2" cy="61.1" rx="3.0" ry="1.7" transform="rotate(28 71.2 61.1)" fill="#d6e8c4" opacity="0.6"/>
<ellipse cx="27.8" cy="203.1" rx="3.5" ry="1.3" transform="rotate(80 27.8 203.1)" fill="#d6e8c4" opacity="0.6"/>
<ellipse cx="47.8" cy="253.5" rx="3.2" ry="1.8" transform="rotate(173 47.8 253.5)" fill="#d6e8c4" opacity="0.6"/>
<ellipse cx="89.2" cy="328.0" rx="1.6" ry="2.7" transform="rotate(122 89.2 328.0)" fill="#c3ddb0" opacity="0.6"/>
<ellipse cx="178.8" cy="306.4" rx="4.0" ry="2.1" transform="rotate(73 178.8 306.4)" fill="#d6e8c4" opacity="0.6"/>
<ellipse cx="37.7" cy="494.2" rx="3.0" ry="1.2" transform="rotate(153 37.7 494.2)" fill="#f4f1ea" opacity="0.6"/>
<ellipse cx="8.6" cy="474.5" rx="1.4" ry="1.0" transform="rotate(128 8.6 474.5)" fill="#d6e8c4" opacity="0.6"/>
<ellipse cx="232.8" cy="180.1" rx="1.6" ry="2.8" transform="rotate(12 232.8 180.1)" fill="#c3ddb0" opacity="0.6"/>
<ellipse cx="241.6" cy="498.9" rx="1.6" ry="2.4" transform="rotate(16 241.6 498.9)" fill="#c3ddb0" opacity="0.6"/>
<ellipse cx="37.8" cy="473.6" rx="1.8" ry="1.8" transform="rotate(164 37.8 473.6)" fill="#d6e8c4" opacity="0.6"/>
<ellipse cx="281.0" cy="146.7" rx="2.1" ry="2.6" transform="rotate(124 281.0 146.7)" fill="#f4f1ea" opacity="0.6"/>
<ellipse cx="7.6" cy="465.8" rx="2.4" ry="3.0" transform="rotate(72 7.6 465.8)" fill="#cfe3ba" opacity="0.6"/>
<ellipse cx="54.5" cy="109.7" rx="3.7" ry="2.5" transform="rotate(128 54.5 109.7)" fill="#cfe3ba" opacity="0.6"/>
<ellipse cx="121.4" cy="408.2" rx="2.3" ry="2.5" transform="rotate(28 121.4 408.2)" fill="#cfe3ba" opacity="0.6"/>
<ellipse cx="165.7" cy="420.8" rx="3.8" ry="2.1" transform="rotate(41 165.7 420.8)" fill="#f4f1ea" opacity="0.6"/>
<ellipse cx="215.0" cy="194.1" rx="2.3" ry="2.4" transform="rotate(63 215.0 194.1)" fill="#cfe3ba" opacity="0.6"/>
<ellipse cx="33.6" cy="502.0" rx="3.0" ry="2.8" transform="rotate(158 33.6 502.0)" fill="#cfe3ba" opacity="0.6"/>
<ellipse cx="292.2" cy="452.0" rx="1.1" ry="1.6" transform="rotate(140 292.2 452.0)" fill="#c3ddb0" opacity="0.6"/>
<ellipse cx="224.9" cy="92.1" rx="3.1" ry="1.8" transform="rotate(135 224.9 92.1)" fill="#d6e8c4" opacity="0.6"/>
<ellipse cx="84.3" cy="94.4" rx="3.8" ry="1.8" transform="rotate(167 84.3 94.4)" fill="#f4f1ea" opacity="0.6"/>
<ellipse cx="152.6" cy="449.3" rx="1.6" ry="2.3" transform="rotate(152 152.6 449.3)" fill="#d6e8c4" opacity="0.6"/>
<ellipse cx="146.9" cy="154.5" rx="3.9" ry="2.7" transform="rotate(101 146.9 154.5)" fill="#d6e8c4" opacity="0.6"/>
<ellipse cx="163.9" cy="626.5" rx="2.9" ry="2.1" transform="rotate(45 163.9 626.5)" fill="#cfe3ba" opacity="0.6"/>
<ellipse cx="50.4" cy="250.1" rx="1.3" ry="2.3" transform="rotate(25 50.4 250.1)" fill="#f4f1ea" opacity="0.6"/>
<ellipse cx="201.1" cy="183.9" rx="1.7" ry="2.0" transform="rotate(80 201.1 183.9)" fill="#c3ddb0" opacity="0.6"/>
<ellipse cx="209.4" cy="120.7" rx="3.1" ry="2.2" transform="rotate(43 209.4 120.7)" fill="#cfe3ba" opacity="0.6"/>
<ellipse cx="164.5" cy="500.1" rx="1.5" ry="2.3" transform="rotate(108 164.5 500.1)" fill="#f4f1ea" opacity="0.6"/>
<ellipse cx="251.8" cy="285.7" rx="1.6" ry="2.4" transform="rotate(2 251.8 285.7)" fill="#f4f1ea" opacity="0.6"/>
<ellipse cx="61.9" cy="76.5" rx="1.8" ry="1.4" transform="rotate(126 61.9 76.5)" fill="#f4f1ea" opacity="0.6"/>
<ellipse cx="288.9" cy="137.6" rx="2.3" ry="2.1" transform="rotate(52 288.9 137.6)" fill="#cfe3ba" opacity="0.6"/>
<ellipse cx="13.7" cy="323.4" rx="3.9" ry="2.0" transform="rotate(135 13.7 323.4)" fill="#c3ddb0" opacity="0.6"/>
<ellipse cx="294.1" cy="381.0" rx="1.3" ry="2.0" transform="rotate(78 294.1 381.0)" fill="#d6e8c4" opacity="0.6"/>
<ellipse cx="235.2" cy="234.7" rx="2.1" ry="1.2" transform="rotate(51 235.2 234.7)" fill="#c3ddb0" opacity="0.6"/>
<ellipse cx="195.9" cy="87.3" rx="3.2" ry="1.1" transform="rotate(71 195.9 87.3)" fill="#d6e8c4" opacity="0.6"/>
<ellipse cx="88.9" cy="152.4" rx="2.9" ry="2.7" transform="rotate(167 88.9 152.4)" fill="#d6e8c4" opacity="0.6"/>
<ellipse cx="30.7" cy="474.9" rx="1.9" ry="2.2" transform="rotate(68 30.7 474.9)" fill="#c3ddb0" opacity="0.6"/>
<ellipse cx="96.0" cy="263.0" rx="2.7" ry="1.7" transform="rotate(150 96.0 263.0)" fill="#d6e8c4" opacity="0.6"/>
<ellipse cx="17.3" cy="104.9" rx="3.4" ry="2.8" transform="rotate(180 17.3 104.9)" fill="#f4f1ea" opacity="0.6"/>
<ellipse cx="271.6" cy="611.7" rx="2.5" ry="2.0" transform="rotate(28 271.6 611.7)" fill="#c3ddb0" opacity="0.6"/>
<ellipse cx="180.8" cy="419.0" rx="1.4" ry="1.5" transform="rotate(25 180.8 419.0)" fill="#f4f1ea" opacity="0.6"/>
<ellipse cx="26.9" cy="64.2" rx="2.3" ry="1.4" transform="rotate(130 26.9 64.2)" fill="#cfe3ba" opacity="0.6"/>
<ellipse cx="9.6" cy="409.5" rx="3.5" ry="2.0" transform="rotate(26 9.6 409.5)" fill="#cfe3ba" opacity="0.6"/>
<ellipse cx="198.5" cy="351.3" rx="2.3" ry="1.7" transform="rotate(79 198.5 351.3)" fill="#d6e8c4" opacity="0.6"/>
<ellipse cx="271.2" cy="139.5" rx="1.9" ry="1.9" transform="rotate(101 271.2 139.5)" fill="#c3ddb0" opacity="0.6"/>
<ellipse cx="170.3" cy="323.6" rx="2.6" ry="2.0" transform="rotate(77 170.3 323.6)" fill="#d6e8c4" opacity="0.6"/>
<ellipse cx="292.3" cy="621.9" rx="2.9" ry="2.6" transform="rotate(11 292.3 621.9)" fill="#c3ddb0" opacity="0.6"/>
<ellipse cx="182.7" cy="219.7" rx="2.7" ry="2.9" transform="rotate(87 182.7 219.7)" fill="#d6e8c4" opacity="0.6"/>
<ellipse cx="89.8" cy="247.8" rx="3.7" ry="1.1" transform="rotate(34 89.8 247.8)" fill="#f4f1ea" opacity="0.6"/>
<ellipse cx="207.4" cy="128.9" rx="2.7" ry="2.1" transform="rotate(170 207.4 128.9)" fill="#c3ddb0" opacity="0.6"/>
<ellipse cx="159.0" cy="381.7" rx="2.2" ry="1.2" transform="rotate(32 159.0 381.7)" fill="#d6e8c4" opacity="0.6"/>
<ellipse cx="164.4" cy="107.9" rx="3.6" ry="1.5" transform="rotate(17 164.4 107.9)" fill="#c3ddb0" opacity="0.6"/>
<ellipse cx="212.7" cy="177.3" rx="2.4" ry="2.1" transform="rotate(125 212.7 177.3)" fill="#cfe3ba" opacity="0.6"/>
<ellipse cx="255.5" cy="451.1" rx="3.4" ry="1.3" transform="rotate(91 255.5 451.1)" fill="#cfe3ba" opacity="0.6"/>
<ellipse cx="188.0" cy="621.0" rx="2.5" ry="1.9" transform="rotate(123 188.0 621.0)" fill="#d6e8c4" opacity="0.6"/>
<ellipse cx="290.4" cy="155.9" rx="2.4" ry="1.2" transform="rotate(67 290.4 155.9)" fill="#cfe3ba" opacity="0.6"/>
<ellipse cx="121.3" cy="68.6" rx="1.1" ry="2.4" transform="rotate(172 121.3 68.6)" fill="#f4f1ea" opacity="0.6"/>
<ellipse cx="90.0" cy="468.0" rx="2.3" ry="2.8" transform="rotate(112 90.0 468.0)" fill="#d6e8c4" opacity="0.6"/>
<ellipse cx="168.9" cy="595.1" rx="3.6" ry="1.3" transform="rotate(134 168.9 595.1)" fill="#c3ddb0" opacity="0.6"/>
<ellipse cx="241.2" cy="485.3" rx="1.0" ry="1.5" transform="rotate(43 241.2 485.3)" fill="#c3ddb0" opacity="0.6"/>
<ellipse cx="216.5" cy="66.3" rx="2.8" ry="1.2" transform="rotate(99 216.5 66.3)" fill="#cfe3ba" opacity="0.6"/>
<ellipse cx="10.2" cy="590.7" rx="1.7" ry="1.7" transform="rotate(125 10.2 590.7)" fill="#cfe3ba" opacity="0.6"/>
<ellipse cx="251.4" cy="391.7" rx="1.3" ry="1.0" transform="rotate(20 251.4 391.7)" fill="#c3ddb0" opacity="0.6"/>
<ellipse cx="55.6" cy="375.3" rx="1.9" ry="2.4" transform="rotate(69 55.6 375.3)" fill="#d6e8c4" opacity="0.6"/>
<ellipse cx="176.5" cy="191.4" rx="4.0" ry="2.5" transform="rotate(48 176.5 191.4)" fill="#f4f1ea" opacity="0.6"/>
<ellipse cx="4.1" cy="247.1" rx="1.5" ry="2.0" transform="rotate(157 4.1 247.1)" fill="#cfe3ba" opacity="0.6"/>
<ellipse cx="22.4" cy="415.4" rx="2.9" ry="2.2" transform="rotate(152 22.4 415.4)" fill="#d6e8c4" opacity="0.6"/>
<ellipse cx="207.9" cy="311.4" rx="1.7" ry="2.9" transform="rotate(93 207.9 311.4)" fill="#c3ddb0" opacity="0.6"/>
<ellipse cx="98.8" cy="170.9" rx="3.7" ry="2.2" transform="rotate(8 98.8 170.9)" fill="#d6e8c4" opacity="0.6"/>
<ellipse cx="245.8" cy="480.0" rx="2.0" ry="1.9" transform="rotate(169 245.8 480.0)" fill="#c3ddb0" opacity="0.6"/>
<ellipse cx="1.8" cy="390.4" rx="2.0" ry="1.0" transform="rotate(83 1.8 390.4)" fill="#cfe3ba" opacity="0.6"/>
<ellipse cx="189.3" cy="479.8" rx="1.4" ry="1.8" transform="rotate(11 189.3 479.8)" fill="#c3ddb0" opacity="0.6"/>
<ellipse cx="107.1" cy="387.0" rx="2.8" ry="1.3" transform="rotate(126 107.1 387.0)" fill="#cfe3ba" opacity="0.6"/>
<ellipse cx="261.7" cy="508.5" rx="2.9" ry="2.3" transform="rotate(65 261.7 508.5)" fill="#c3ddb0" opacity="0.6"/>
<ellipse cx="237.9" cy="184.0" rx="3.4" ry="1.3" transform="rotate(13 237.9 184.0)" fill="#c3ddb0" opacity="0.6"/>
<ellipse cx="221.9" cy="347.9" rx="2.9" ry="1.7" transform="rotate(99 221.9 347.9)" fill="#f4f1ea" opacity="0.6"/>
<ellipse cx="100.3" cy="466.1" rx="3.0" ry="2.8" transform="rotate(141 100.3 466.1)" fill="#c3ddb0" opacity="0.6"/>
<ellipse cx="268.3" cy="529.6" rx="4.0" ry="1.3" transform="rotate(37 268.3 529.6)" fill="#f4f1ea" opacity="0.6"/>
<ellipse cx="121.5" cy="279.6" rx="3.3" ry="2.9" transform="rotate(106 121.5 279.6)" fill="#d6e8c4" opacity="0.6"/>
<ellipse cx="90.4" cy="226.6" rx="3.2" ry="2.1" transform="rotate(169 90.4 226.6)" fill="#c3ddb0" opacity="0.6"/>
<ellipse cx="22.1" cy="155.1" rx="3.8" ry="2.2" transform="rotate(55 22.1 155.1)" fill="#c3ddb0" opacity="0.6"/>
<ellipse cx="296.2" cy="256.0" rx="3.3" ry="1.9" transform="rotate(156 296.2 256.0)" fill="#cfe3ba" opacity="0.6"/>
<ellipse cx="251.6" cy="233.2" rx="1.5" ry="2.8" transform="rotate(98 251.6 233.2)" fill="#d6e8c4" opacity="0.6"/>
<ellipse cx="187.9" cy="183.3" rx="1.1" ry="1.1" transform="rotate(81 187.9 183.3)" fill="#c3ddb0" opacity="0.6"/>
<ellipse cx="259.2" cy="432.1" rx="1.6" ry="2.5" transform="rotate(173 259.2 432.1)" fill="#cfe3ba" opacity="0.6"/>
<ellipse cx="23.8" cy="529.7" rx="3.6" ry="1.7" transform="rotate(25 23.8 529.7)" fill="#d6e8c4" opacity="0.6"/>
<ellipse cx="81.2" cy="428.7" rx="1.0" ry="1.6" transform="rotate(5 81.2 428.7)" fill="#c3ddb0" opacity="0.6"/>
<ellipse cx="98.0" cy="493.3" rx="2.9" ry="1.8" transform="rotate(122 98.0 493.3)" fill="#c3ddb0" opacity="0.6"/>
<ellipse cx="52.4" cy="562.3" rx="3.4" ry="1.2" transform="rotate(110 52.4 562.3)" fill="#f4f1ea" opacity="0.6"/>
<ellipse cx="296.3" cy="281.7" rx="3.8" ry="2.7" transform="rotate(5 296.3 281.7)" fill="#c3ddb0" opacity="0.6"/>
<ellipse cx="169.2" cy="637.5" rx="1.2" ry="2.2" transform="rotate(130 169.2 637.5)" fill="#c3ddb0" opacity="0.6"/>
<ellipse cx="47.0" cy="51.3" rx="1.6" ry="2.1" transform="rotate(151 47.0 51.3)" fill="#c3ddb0" opacity="0.6"/>
<ellipse cx="244.2" cy="296.1" rx="2.6" ry="2.2" transform="rotate(100 244.2 296.1)" fill="#c3ddb0" opacity="0.6"/>
<ellipse cx="69.0" cy="414.3" rx="3.4" ry="2.0" transform="rotate(6 69.0 414.3)" fill="#c3ddb0" opacity="0.6"/>
<ellipse cx="195.5" cy="372.4" rx="3.1" ry="2.1" transform="rotate(65 195.5 372.4)" fill="#c3ddb0" opacity="0.6"/>
<ellipse cx="39.6" cy="45.5" rx="2.4" ry="2.3" transform="rotate(139 39.6 45.5)" fill="#c3ddb0" opacity="0.6"/>
<ellipse cx="45.2" cy="420.5" rx="2.2" ry="3.0" transform="rotate(169 45.2 420.5)" fill="#d6e8c4" opacity="0.6"/>
<ellipse cx="36.7" cy="368.7" rx="1.6" ry="2.6" transform="rotate(47 36.7 368.7)" fill="#c3ddb0" opacity="0.6"/>
<ellipse cx="221.3" cy="586.2" rx="3.6" ry="2.7" transform="rotate(140 221.3 586.2)" fill="#cfe3ba" opacity="0.6"/>
<ellipse cx="105.2" cy="469.3" rx="2.3" ry="2.7" transform="rotate(38 105.2 469.3)" fill="#c3ddb0" opacity="0.6"/>
<ellipse cx="270.3" cy="275.4" rx="1.6" ry="2.6" transform="rotate(5 270.3 275.4)" fill="#cfe3ba" opacity="0.6"/>
<ellipse cx="19.6" cy="430.5" rx="2.2" ry="2.7" transform="rotate(11 19.6 430.5)" fill="#f4f1ea" opacity="0.6"/>
<ellipse cx="123.0" cy="596.1" rx="3.8" ry="2.3" transform="rotate(40 123.0 596.1)" fill="#c3ddb0" opacity="0.6"/>
<ellipse cx="6.2" cy="469.1" rx="1.7" ry="1.7" transform="rotate(59 6.2 469.1)" fill="#f4f1ea" opacity="0.6"/>
<ellipse cx="192.8" cy="220.6" rx="4.0" ry="1.4" transform="rotate(103 192.8 220.6)" fill="#d6e8c4" opacity="0.6"/>
<ellipse cx="143.2" cy="605.0" rx="3.3" ry="2.9" transform="rotate(25 143.2 605.0)" fill="#c3ddb0" opacity="0.6"/>
<ellipse cx="84.8" cy="240.6" rx="2.5" ry="2.8" transform="rotate(29 84.8 240.6)" fill="#f4f1ea" opacity="0.6"/>
<ellipse cx="63.6" cy="71.5" rx="3.3" ry="2.7" transform="rotate(132 63.6 71.5)" fill="#cfe3ba" opacity="0.6"/>
<ellipse cx="233.9" cy="562.3" rx="1.5" ry="2.7" transform="rotate(179 233.9 562.3)" fill="#c3ddb0" opacity="0.6"/>
<ellipse cx="205.5" cy="527.0" rx="1.5" ry="2.8" transform="rotate(24 205.5 527.0)" fill="#c3ddb0" opacity="0.6"/>
<ellipse cx="45.2" cy="485.3" rx="1.3" ry="1.3" transform="rotate(123 45.2 485.3)" fill="#cfe3ba" opacity="0.6"/>
<ellipse cx="124.3" cy="428.5" rx="3.0" ry="1.8" transform="rotate(60 124.3 428.5)" fill="#cfe3ba" opacity="0.6"/>
<ellipse cx="175.6" cy="161.8" rx="2.9" ry="1.0" transform="rotate(24 175.6 161.8)" fill="#d6e8c4" opacity="0.6"/>
<ellipse cx="172.5" cy="462.5" rx="3.2" ry="1.1" transform="rotate(161 172.5 462.5)" fill="#cfe3ba" opacity="0.6"/>
<ellipse cx="263.6" cy="112.9" rx="2.5" ry="1.3" transform="rotate(77 263.6 112.9)" fill="#d6e8c4" opacity="0.6"/>
<ellipse cx="67.2" cy="367.0" rx="2.9" ry="2.1" transform="rotate(179 67.2 367.0)" fill="#c3ddb0" opacity="0.6"/>
<ellipse cx="251.9" cy="619.1" rx="1.2" ry="2.9" transform="rotate(154 251.9 619.1)" fill="#d6e8c4" opacity="0.6"/>
<ellipse cx="219.4" cy="205.1" rx="1.5" ry="1.5" transform="rotate(12 219.4 205.1)" fill="#cfe3ba" opacity="0.6"/>
<ellipse cx="58.9" cy="69.0" rx="3.4" ry="2.9" transform="rotate(48 58.9 69.0)" fill="#c3ddb0" opacity="0.6"/>
<ellipse cx="206.4" cy="435.1" rx="2.6" ry="2.1" transform="rotate(124 206.4 435.1)" fill="#c3ddb0" opacity="0.6"/>
<ellipse cx="119.8" cy="232.6" rx="2.3" ry="2.9" transform="rotate(70 119.8 232.6)" fill="#f4f1ea" opacity="0.6"/>
<ellipse cx="264.5" cy="526.3" rx="3.7" ry="2.3" transform="rotate(43 264.5 526.3)" fill="#c3ddb0" opacity="0.6"/>
<ellipse cx="208.1" cy="481.6" rx="4.0" ry="2.7" transform="rotate(119 208.1 481.6)" fill="#cfe3ba" opacity="0.6"/>
<ellipse cx="252.9" cy="514.3" rx="3.7" ry="1.1" transform="rotate(125 252.9 514.3)" fill="#c3ddb0" opacity="0.6"/>
<ellipse cx="205.5" cy="307.7" rx="3.0" ry="1.9" transform="rotate(104 205.5 307.7)" fill="#f4f1ea" opacity="0.6"/>
<ellipse cx="223.9" cy="556.4" rx="2.5" ry="2.2" transform="rotate(179 223.9 556.4)" fill="#d6e8c4" opacity="0.6"/>
<ellipse cx="247.5" cy="518.8" rx="3.6" ry="1.7" transform="rotate(12 247.5 518.8)" fill="#c3ddb0" opacity="0.6"/>
<ellipse cx="183.8" cy="449.7" rx="2.0" ry="2.3" transform="rotate(98 183.8 449.7)" fill="#d6e8c4" opacity="0.6"/>
<ellipse cx="277.2" cy="503.1" rx="1.8" ry="2.7" transform="rotate(154 277.2 503.1)" fill="#c3ddb0" opacity="0.6"/>
<ellipse cx="156.6" cy="328.4" rx="1.7" ry="1.3" transform="rotate(167 156.6 328.4)" fill="#c3ddb0" opacity="0.6"/>
<ellipse cx="157.2" cy="359.1" rx="3.4" ry="1.5" transform="rotate(31 157.2 359.1)" fill="#f4f1ea" opacity="0.6"/>
<ellipse cx="53.3" cy="613.2" rx="3.6" ry="2.3" transform="rotate(164 53.3 613.2)" fill="#c3ddb0" opacity="0.6"/>
<ellipse cx="114.4" cy="543.4" rx="3.5" ry="1.2" transform="rotate(28 114.4 543.4)" fill="#c3ddb0" opacity="0.6"/>
<ellipse cx="112.5" cy="260.7" rx="3.0" ry="2.0" transform="rotate(54 112.5 260.7)" fill="#cfe3ba" opacity="0.6"/>
<ellipse cx="82.5" cy="215.8" rx="2.3" ry="1.2" transform="rotate(114 82.5 215.8)" fill="#d6e8c4" opacity="0.6"/>
<ellipse cx="227.6" cy="130.7" rx="3.0" ry="1.7" transform="rotate(94 227.6 130.7)" fill="#d6e8c4" opacity="0.6"/>
<ellipse cx="186.8" cy="356.6" rx="3.4" ry="1.5" transform="rotate(100 186.8 356.6)" fill="#cfe3ba" opacity="0.6"/>
<ellipse cx="171.2" cy="74.9" rx="1.5" ry="2.4" transform="rotate(49 171.2 74.9)" fill="#c3ddb0" opacity="0.6"/>
<ellipse cx="76.7" cy="200.6" rx="2.3" ry="2.1" transform="rotate(89 76.7 200.6)" fill="#cfe3ba" opacity="0.6"/>
<ellipse cx="60.5" cy="296.0" rx="3.4" ry="2.2" transform="rotate(67 60.5 296.0)" fill="#cfe3ba" opacity="0.6"/>
<ellipse cx="215.2" cy="267.3" rx="1.1" ry="2.5" transform="rotate(175 215.2 267.3)" fill="#f4f1ea" opacity="0.6"/>
<ellipse cx="194.5" cy="530.5" rx="2.1" ry="1.8" transform="rotate(104 194.5 530.5)" fill="#d6e8c4" opacity="0.6"/>
<ellipse cx="293.3" cy="555.3" rx="2.7" ry="1.1" transform="rotate(37 293.3 555.3)" fill="#cfe3ba" opacity="0.6"/>
<ellipse cx="24.0" cy="309.5" rx="2.2" ry="1.8" transform="rotate(168 24.0 309.5)" fill="#cfe3ba" opacity="0.6"/>
<ellipse cx="32.3" cy="380.9" rx="3.8" ry="2.4" transform="rotate(79 32.3 380.9)" fill="#f4f1ea" opacity="0.6"/>
<ellipse cx="52.9" cy="79.4" rx="2.2" ry="1.3" transform="rotate(136 52.9 79.4)" fill="#cfe3ba" opacity="0.6"/>
<ellipse cx="201.1" cy="488.0" rx="2.2" ry="1.1" transform="rotate(122 201.1 488.0)" fill="#c3ddb0" opacity="0.6"/>
<ellipse cx="230.8" cy="505.8" rx="1.4" ry="1.4" transform="rotate(14 230.8 505.8)" fill="#cfe3ba" opacity="0.6"/>
<ellipse cx="30.5" cy="93.4" rx="3.3" ry="2.1" transform="rotate(10 30.5 93.4)" fill="#d6e8c4" opacity="0.6"/>
<ellipse cx="213.3" cy="332.1" rx="1.2" ry="2.4" transform="rotate(75 213.3 332.1)" fill="#d6e8c4" opacity="0.6"/>
<ellipse cx="299.4" cy="534.2" rx="3.6" ry="1.3" transform="rotate(60 299.4 534.2)" fill="#cfe3ba" opacity="0.6"/>
<ellipse cx="55.8" cy="366.0" rx="2.6" ry="1.2" transform="rotate(69 55.8 366.0)" fill="#c3ddb0" opacity="0.6"/>
<ellipse cx="166.7" cy="349.1" rx="2.3" ry="1.1" transform="rotate(55 166.7 349.1)" fill="#f4f1ea" opacity="0.6"/>
<ellipse cx="240.6" cy="558.3" rx="1.8" ry="1.4" transform="rotate(9 240.6 558.3)" fill="#c3ddb0" opacity="0.6"/>
<ellipse cx="279.7" cy="437.1" rx="3.1" ry="1.3" transform="rotate(167 279.7 437.1)" fill="#c3ddb0" opacity="0.6"/>
<ellipse cx="60.1" cy="596.2" rx="2.7" ry="1.1" transform="rotate(57 60.1 596.2)" fill="#cfe3ba" opacity="0.6"/>
<ellipse cx="122.7" cy="381.8" rx="2.0" ry="1.5" transform="rotate(143 122.7 381.8)" fill="#c3ddb0" opacity="0.6"/>
<ellipse cx="60.2" cy="166.7" rx="3.9" ry="2.2" transform="rotate(73 60.2 166.7)" fill="#f4f1ea" opacity="0.6"/>
<ellipse cx="61.2" cy="162.9" rx="1.5" ry="2.7" transform="rotate(22 61.2 162.9)" fill="#d6e8c4" opacity="0.6"/>
<ellipse cx="258.8" cy="83.5" rx="2.8" ry="1.4" transform="rotate(166 258.8 83.5)" fill="#d6e8c4" opacity="0.6"/>
<ellipse cx="149.5" cy="447.7" rx="3.0" ry="1.6" transform="rotate(38 149.5 447.7)" fill="#d6e8c4" opacity="0.6"/>
<ellipse cx="43.7" cy="595.3" rx="1.6" ry="1.2" transform="rotate(17 43.7 595.3)" fill="#cfe3ba" opacity="0.6"/>
<ellipse cx="285.3" cy="290.9" rx="3.0" ry="1.5" transform="rotate(163 285.3 290.9)" fill="#f4f1ea" opacity="0.6"/>
<ellipse cx="46.5" cy="74.3" rx="3.1" ry="1.1" transform="rotate(151 46.5 74.3)" fill="#c3ddb0" opacity="0.6"/>
<ellipse cx="227.5" cy="569.2" rx="3.4" ry="2.4" transform="rotate(129 227.5 569.2)" fill="#c3ddb0" opacity="0.6"/>
<ellipse cx="273.6" cy="236.3" rx="3.5" ry="1.3" transform="rotate(144 273.6 236.3)" fill="#d6e8c4" opacity="0.6"/>
<ellipse cx="117.5" cy="59.9" rx="2.1" ry="2.3" transform="rotate(40 117.5 59.9)" fill="#cfe3ba" opacity="0.6"/>
<ellipse cx="59.4" cy="130.1" rx="1.6" ry="1.7" transform="rotate(72 59.4 130.1)" fill="#cfe3ba" opacity="0.6"/>
<ellipse cx="248.5" cy="113.9" rx="3.8" ry="3.0" transform="rotate(169 248.5 113.9)" fill="#cfe3ba" opacity="0.6"/>
<ellipse cx="87.2" cy="250.5" rx="3.3" ry="2.0" transform="rotate(167 87.2 250.5)" fill="#cfe3ba" opacity="0.6"/>
<ellipse cx="60.2" cy="209.4" rx="1.9" ry="2.2" transform="rotate(136 60.2 209.4)" fill="#d6e8c4" opacity="0.6"/>
<ellipse cx="41.9" cy="204.1" rx="3.7" ry="2.7" transform="rotate(41 41.9 204.1)" fill="#c3ddb0" opacity="0.6"/>
<ellipse cx="9.7" cy="402.3" rx="3.9" ry="1.7" transform="rotate(170 9.7 402.3)" fill="#c3ddb0" opacity="0.6"/>
<ellipse cx="15.0" cy="241.5" rx="2.3" ry="1.5" transform="rotate(134 15.0 241.5)" fill="#d6e8c4" opacity="0.6"/>
<ellipse cx="32.9" cy="543.4" rx="3.4" ry="2.4" transform="rotate(82 32.9 543.4)" fill="#cfe3ba" opacity="0.6"/>
<ellipse cx="236.4" cy="400.3" rx="2.4" ry="1.1" transform="rotate(92 236.4 400.3)" fill="#cfe3ba" opacity="0.6"/>
<ellipse cx="123.9" cy="461.4" rx="2.2" ry="2.7" transform="rotate(14 123.9 461.4)" fill="#d6e8c4" opacity="0.6"/>
<ellipse cx="107.8" cy="441.0" rx="1.3" ry="1.0" transform="rotate(116 107.8 441.0)" fill="#f4f1ea" opacity="0.6"/>
<ellipse cx="91.0" cy="198.1" rx="1.3" ry="1.5" transform="rotate(28 91.0 198.1)" fill="#c3ddb0" opacity="0.6"/>
<ellipse cx="160.8" cy="111.1" rx="2.4" ry="1.3" transform="rotate(96 160.8 111.1)" fill="#c3ddb0" opacity="0.6"/>
<ellipse cx="110.1" cy="159.6" rx="2.2" ry="1.4" transform="rotate(23 110.1 159.6)" fill="#d6e8c4" opacity="0.6"/>
<ellipse cx="218.0" cy="363.6" rx="1.7" ry="1.2" transform="rotate(19 218.0 363.6)" fill="#cfe3ba" opacity="0.6"/>
<ellipse cx="146.5" cy="518.6" rx="2.7" ry="2.4" transform="rotate(41 146.5 518.6)" fill="#d6e8c4" opacity="0.6"/>
<ellipse cx="46.1" cy="199.8" rx="1.1" ry="1.8" transform="rotate(93 46.1 199.8)" fill="#c3ddb0" opacity="0.6"/>
<ellipse cx="170.9" cy="113.1" rx="3.0" ry="1.4" transform="rotate(44 170.9 113.1)" fill="#cfe3ba" opacity="0.6"/>
<ellipse cx="246.4" cy="84.2" rx="2.0" ry="1.2" transform="rotate(39 246.4 84.2)" fill="#d6e8c4" opacity="0.6"/>
<ellipse cx="244.4" cy="247.0" rx="3.4" ry="1.9" transform="rotate(166 244.4 247.0)" fill="#cfe3ba" opacity="0.6"/>
<ellipse cx="95.2" cy="603.5" rx="3.4" ry="1.1" transform="rotate(142 95.2 603.5)" fill="#d6e8c4" opacity="0.6"/>
<ellipse cx="220.1" cy="450.7" rx="1.5" ry="1.7" transform="rotate(25 220.1 450.7)" fill="#d6e8c4" opacity="0.6"/>
<ellipse cx="277.5" cy="455.1" rx="3.1" ry="1.1" transform="rotate(1 277.5 455.1)" fill="#f4f1ea" opacity="0.6"/>
<ellipse cx="11.3" cy="358.0" rx="2.0" ry="1.1" transform="rotate(109 11.3 358.0)" fill="#cfe3ba" opacity="0.6"/>
<ellipse cx="59.7" cy="418.2" rx="3.5" ry="2.6" transform="rotate(17 59.7 418.2)" fill="#c3ddb0" opacity="0.6"/>
<ellipse cx="174.8" cy="526.0" rx="2.5" ry="2.5" transform="rotate(89 174.8 526.0)" fill="#c3ddb0" opacity="0.6"/>
<ellipse cx="248.5" cy="607.0" rx="3.7" ry="2.5" transform="rotate(150 248.5 607.0)" fill="#d6e8c4" opacity="0.6"/>
<ellipse cx="130.6" cy="539.2" rx="3.4" ry="2.7" transform="rotate(54 130.6 539.2)" fill="#cfe3ba" opacity="0.6"/>
<ellipse cx="20.4" cy="513.8" rx="3.4" ry="2.5" transform="rotate(153 20.4 513.8)" fill="#d6e8c4" opacity="0.6"/>
<ellipse cx="59.4" cy="317.0" rx="1.7" ry="2.0" transform="rotate(163 59.4 317.0)" fill="#cfe3ba" opacity="0.6"/>
<ellipse cx="117.6" cy="514.2" rx="3.4" ry="2.4" transform="rotate(170 117.6 514.2)" fill="#f4f1ea" opacity="0.6"/>
<ellipse cx="121.9" cy="92.7" rx="3.0" ry="2.7" transform="rotate(61 121.9 92.7)" fill="#f4f1ea" opacity="0.6"/>
<ellipse cx="237.9" cy="42.7" rx="2.5" ry="1.0" transform="rotate(20 237.9 42.7)" fill="#f4f1ea" opacity="0.6"/>
<ellipse cx="125.6" cy="405.9" rx="2.4" ry="1.7" transform="rotate(38 125.6 405.9)" fill="#c3ddb0" opacity="0.6"/>
<ellipse cx="118.2" cy="321.9" rx="1.1" ry="1.7" transform="rotate(179 118.2 321.9)" fill="#d6e8c4" opacity="0.6"/>
<ellipse cx="210.4" cy="307.4" rx="3.0" ry="2.6" transform="rotate(22 210.4 307.4)" fill="#cfe3ba" opacity="0.6"/>
<ellipse cx="112.7" cy="582.4" rx="2.2" ry="1.7" transform="rotate(27 112.7 582.4)" fill="#d6e8c4" opacity="0.6"/>
<ellipse cx="67.3" cy="578.4" rx="2.8" ry="2.8" transform="rotate(71 67.3 578.4)" fill="#f4f1ea" opacity="0.6"/>
<ellipse cx="95.5" cy="570.1" rx="3.4" ry="2.2" transform="rotate(154 95.5 570.1)" fill="#d6e8c4" opacity="0.6"/>
<ellipse cx="117.3" cy="45.5" rx="3.6" ry="1.2" transform="rotate(44 117.3 45.5)" fill="#c3ddb0" opacity="0.6"/>
<ellipse cx="221.0" cy="449.1" rx="4.0" ry="2.5" transform="rotate(136 221.0 449.1)" fill="#f4f1ea" opacity="0.6"/>
<ellipse cx="40.5" cy="495.8" rx="1.8" ry="1.8" transform="rotate(93 40.5 495.8)" fill="#c3ddb0" opacity="0.6"/>
<ellipse cx="133.2" cy="619.5" rx="2.1" ry="2.3" transform="rotate(114 133.2 619.5)" fill="#f4f1ea" opacity="0.6"/>
<ellipse cx="281.3" cy="529.2" rx="1.2" ry="2.3" transform="rotate(89 281.3 529.2)" fill="#cfe3ba" opacity="0.6"/>
<ellipse cx="17.1" cy="545.1" rx="3.1" ry="2.1" transform="rotate(81 17.1 545.1)" fill="#d6e8c4" opacity="0.6"/>
<ellipse cx="218.7" cy="493.6" rx="1.1" ry="1.7" transform="rotate(25 218.7 493.6)" fill="#c3ddb0" opacity="0.6"/>
<ellipse cx="43.4" cy="395.5" rx="2.7" ry="1.1" transform="rotate(71 43.4 395.5)" fill="#c3ddb0" opacity="0.6"/>
<ellipse cx="188.2" cy="186.3" rx="3.3" ry="1.1" transform="rotate(99 188.2 186.3)" fill="#f4f1ea" opacity="0.6"/>
<ellipse cx="194.6" cy="527.0" rx="3.0" ry="1.8" transform="rotate(173 194.6 527.0)" fill="#c3ddb0" opacity="0.6"/>
<ellipse cx="207.3" cy="207.9" rx="1.5" ry="2.2" transform="rotate(149 207.3 207.9)" fill="#c3ddb0" opacity="0.6"/>
<ellipse cx="268.1" cy="161.5" rx="3.4" ry="1.1" transform="rotate(55 268.1 161.5)" fill="#d6e8c4" opacity="0.6"/>
<ellipse cx="204.4" cy="589.1" rx="2.8" ry="2.9" transform="rotate(140 204.4 589.1)" fill="#c3ddb0" opacity="0.6"/>
<ellipse cx="288.6" cy="153.2" rx="1.9" ry="2.9" transform="rotate(36 288.6 153.2)" fill="#c3ddb0" opacity="0.6"/>
<ellipse cx="278.4" cy="283.9" rx="3.0" ry="1.7" transform="rotate(58 278.4 283.9)" fill="#f4f1ea" opacity="0.6"/>
<ellipse cx="80.1" cy="163.4" rx="3.7" ry="1.9" transform="rotate(151 80.1 163.4)" fill="#d6e8c4" opacity="0.6"/>
<ellipse cx="233.6" cy="230.4" rx="1.5" ry="2.5" transform="rotate(85 233.6 230.4)" fill="#f4f1ea" opacity="0.6"/>
<ellipse cx="225.8" cy="206.6" rx="2.1" ry="2.8" transform="rotate(95 225.8 206.6)" fill="#c3ddb0" opacity="0.6"/>
<ellipse cx="255.4" cy="113.3" rx="2.3" ry="1.0" transform="rotate(96 255.4 113.3)" fill="#c3ddb0" opacity="0.6"/>
<ellipse cx="106.1" cy="608.7" rx="1.8" ry="1.5" transform="rotate(13 106.1 608.7)" fill="#cfe3ba" opacity="0.6"/>
<ellipse cx="226.1" cy="450.2" rx="2.2" ry="2.6" transform="rotate(20 226.1 450.2)" fill="#c3ddb0" opacity="0.6"/>
<ellipse cx="49.8" cy="146.7" rx="3.2" ry="2.5" transform="rotate(21 49.8 146.7)" fill="#f4f1ea" opacity="0.6"/>
<ellipse cx="118.3" cy="608.9" rx="3.2" ry="1.7" transform="rotate(71 118.3 608.9)" fill="#c3ddb0" opacity="0.6"/>
<ellipse cx="104.9" cy="152.4" rx="3.6" ry="2.1" transform="rotate(94 104.9 152.4)" fill="#c3ddb0" opacity="0.6"/>
<ellipse cx="40.1" cy="244.9" rx="1.2" ry="1.8" transform="rotate(90 40.1 244.9)" fill="#d6e8c4" opacity="0.6"/>
<ellipse cx="173.3" cy="284.2" rx="2.7" ry="1.5" transform="rotate(152 173.3 284.2)" fill="#d6e8c4" opacity="0.6"/>
<ellipse cx="45.3" cy="446.3" rx="3.3" ry="2.0" transform="rotate(162 45.3 446.3)" fill="#cfe3ba" opacity="0.6"/>
<ellipse cx="222.9" cy="536.7" rx="2.9" ry="2.8" transform="rotate(24 222.9 536.7)" fill="#f4f1ea" opacity="0.6"/>
<ellipse cx="183.7" cy="206.4" rx="1.2" ry="2.2" transform="rotate(148 183.7 206.4)" fill="#c3ddb0" opacity="0.6"/>
<ellipse cx="182.3" cy="586.9" rx="1.9" ry="1.7" transform="rotate(102 182.3 586.9)" fill="#cfe3ba" opacity="0.6"/>
<ellipse cx="107.9" cy="463.2" rx="1.2" ry="2.7" transform="rotate(59 107.9 463.2)" fill="#cfe3ba" opacity="0.6"/>
<ellipse cx="137.3" cy="502.2" rx="2.3" ry="2.0" transform="rotate(176 137.3 502.2)" fill="#cfe3ba" opacity="0.6"/>
<ellipse cx="11.9" cy="540.6" rx="1.3" ry="1.4" transform="rotate(113 11.9 540.6)" fill="#c3ddb0" opacity="0.6"/>
<ellipse cx="289.4" cy="361.1" rx="1.7" ry="2.1" transform="rotate(148 289.4 361.1)" fill="#c3ddb0" opacity="0.6"/>
<ellipse cx="251.8" cy="529.3" rx="2.6" ry="1.1" transform="rotate(140 251.8 529.3)" fill="#cfe3ba" opacity="0.6"/>
<ellipse cx="243.2" cy="202.2" rx="2.1" ry="2.9" transform="rotate(49 243.2 202.2)" fill="#cfe3ba" opacity="0.6"/>
<ellipse cx="175.5" cy="282.1" rx="2.5" ry="2.2" transform="rotate(41 175.5 282.1)" fill="#cfe3ba" opacity="0.6"/>
<ellipse cx="241.3" cy="621.6" rx="2.0" ry="3.0" transform="rotate(13 241.3 621.6)" fill="#f4f1ea" opacity="0.6"/>
<ellipse cx="172.7" cy="301.0" rx="3.9" ry="2.8" transform="rotate(111 172.7 301.0)" fill="#d6e8c4" opacity="0.6"/>
<ellipse cx="102.5" cy="154.9" rx="2.2" ry="1.6" transform="rotate(35 102.5 154.9)" fill="#cfe3ba" opacity="0.6"/>
<ellipse cx="131.6" cy="159.6" rx="3.1" ry="1.4" transform="rotate(48 131.6 159.6)" fill="#c3ddb0" opacity="0.6"/>
<ellipse cx="224.3" cy="613.7" rx="3.8" ry="2.4" transform="rotate(130 224.3 613.7)" fill="#cfe3ba" opacity="0.6"/>
<ellipse cx="106.2" cy="292.8" rx="3.5" ry="2.3" transform="rotate(135 106.2 292.8)" fill="#c3ddb0" opacity="0.6"/>
<ellipse cx="167.3" cy="419.7" rx="2.7" ry="1.6" transform="rotate(64 167.3 419.7)" fill="#cfe3ba" opacity="0.6"/>
<ellipse cx="13.3" cy="146.0" rx="2.1" ry="2.8" transform="rotate(145 13.3 146.0)" fill="#f4f1ea" opacity="0.6"/>
<ellipse cx="231.8" cy="247.5" rx="3.6" ry="1.7" transform="rotate(159 231.8 247.5)" fill="#f4f1ea" opacity="0.6"/>
<ellipse cx="297.2" cy="591.6" rx="3.4" ry="2.0" transform="rotate(148 297.2 591.6)" fill="#d6e8c4" opacity="0.6"/>
<ellipse cx="255.0" cy="359.6" rx="1.8" ry="1.8" transform="rotate(64 255.0 359.6)" fill="#cfe3ba" opacity="0.6"/>
<ellipse cx="281.3" cy="156.8" rx="1.8" ry="2.6" transform="rotate(93 281.3 156.8)" fill="#f4f1ea" opacity="0.6"/>
<ellipse cx="48.3" cy="582.3" rx="2.3" ry="1.3" transform="rotate(20 48.3 582.3)" fill="#f4f1ea" opacity="0.6"/>
<ellipse cx="8.3" cy="532.0" rx="3.9" ry="1.2" transform="rotate(140 8.3 532.0)" fill="#d6e8c4" opacity="0.6"/>
<ellipse cx="266.7" cy="363.2" rx="1.2" ry="1.6" transform="rotate(112 266.7 363.2)" fill="#f4f1ea" opacity="0.6"/>
<ellipse cx="145.4" cy="426.9" rx="1.6" ry="1.5" transform="rotate(163 145.4 426.9)" fill="#f4f1ea" opacity="0.6"/>
<ellipse cx="264.2" cy="99.3" rx="3.6" ry="2.9" transform="rotate(79 264.2 99.3)" fill="#f4f1ea" opacity="0.6"/>
<ellipse cx="228.5" cy="384.9" rx="3.2" ry="2.7" transform="rotate(30 228.5 384.9)" fill="#d6e8c4" opacity="0.6"/>
<ellipse cx="215.0" cy="324.1" rx="3.6" ry="2.2" transform="rotate(21 215.0 324.1)" fill="#f4f1ea" opacity="0.6"/>
<ellipse cx="179.7" cy="78.0" rx="1.7" ry="3.0" transform="rotate(41 179.7 78.0)" fill="#f4f1ea" opacity="0.6"/>
<ellipse cx="169.8" cy="490.9" rx="1.7" ry="2.5" transform="rotate(117 169.8 490.9)" fill="#d6e8c4" opacity="0.6"/>
<ellipse cx="28.1" cy="630.6" rx="3.4" ry="1.1" transform="rotate(9 28.1 630.6)" fill="#d6e8c4" opacity="0.6"/>
<ellipse cx="282.4" cy="620.5" rx="3.3" ry="1.1" transform="rotate(100 282.4 620.5)" fill="#f4f1ea" opacity="0.6"/>
<ellipse cx="78.9" cy="132.8" rx="1.1" ry="2.5" transform="rotate(19 78.9 132.8)" fill="#cfe3ba" opacity="0.6"/>
<ellipse cx="56.1" cy="528.3" rx="1.5" ry="2.0" transform="rotate(19 56.1 528.3)" fill="#f4f1ea" opacity="0.6"/>
<ellipse cx="274.9" cy="41.4" rx="3.6" ry="2.1" transform="rotate(148 274.9 41.4)" fill="#cfe3ba" opacity="0.6"/>
<ellipse cx="211.8" cy="440.2" rx="2.8" ry="1.9" transform="rotate(121 211.8 440.2)" fill="#d6e8c4" opacity="0.6"/>
<ellipse cx="7.2" cy="541.9" rx="3.4" ry="1.9" transform="rotate(22 7.2 541.9)" fill="#d6e8c4" opacity="0.6"/>
<ellipse cx="201.5" cy="634.9" rx="2.8" ry="1.2" transform="rotate(94 201.5 634.9)" fill="#cfe3ba" opacity="0.6"/>
<ellipse cx="26.4" cy="184.6" rx="3.6" ry="3.0" transform="rotate(16 26.4 184.6)" fill="#c3ddb0" opacity="0.6"/>
<ellipse cx="90.8" cy="501.3" rx="1.4" ry="2.2" transform="rotate(176 90.8 501.3)" fill="#d6e8c4" opacity="0.6"/>
<ellipse cx="2.1" cy="85.4" rx="1.3" ry="2.4" transform="rotate(108 2.1 85.4)" fill="#f4f1ea" opacity="0.6"/>
<ellipse cx="136.7" cy="286.5" rx="2.8" ry="2.3" transform="rotate(165 136.7 286.5)" fill="#cfe3ba" opacity="0.6"/>
<ellipse cx="273.9" cy="546.5" rx="3.2" ry="1.1" transform="rotate(123 273.9 546.5)" fill="#f4f1ea" opacity="0.6"/>
<ellipse cx="240.3" cy="73.2" rx="2.9" ry="1.6" transform="rotate(46 240.3 73.2)" fill="#d6e8c4" opacity="0.6"/>
<ellipse cx="75.8" cy="221.8" rx="2.0" ry="1.6" transform="rotate(17 75.8 221.8)" fill="#f4f1ea" opacity="0.6"/>
<ellipse cx="48.9" cy="612.7" rx="3.0" ry="1.9" transform="rotate(112 48.9 612.7)" fill="#c3ddb0" opacity="0.6"/>
<ellipse cx="82.3" cy="191.1" rx="2.2" ry="1.0" transform="rotate(42 82.3 191.1)" fill="#c3ddb0" opacity="0.6"/>
<ellipse cx="276.3" cy="238.9" rx="3.3" ry="2.5" transform="rotate(160 276.3 238.9)" fill="#cfe3ba" opacity="0.6"/>
<ellipse cx="159.6" cy="103.4" rx="3.5" ry="1.6" transform="rotate(113 159.6 103.4)" fill="#c3ddb0" opacity="0.6"/>
<ellipse cx="19.3" cy="113.7" rx="2.4" ry="1.4" transform="rotate(10 19.3 113.7)" fill="#d6e8c4" opacity="0.6"/>
<ellipse cx="281.4" cy="286.5" rx="3.7" ry="2.4" transform="rotate(174 281.4 286.5)" fill="#cfe3ba" opacity="0.6"/>
<ellipse cx="194.3" cy="171.9" rx="3.3" ry="2.8" transform="rotate(129 194.3 171.9)" fill="#f4f1ea" opacity="0.6"/>
<ellipse cx="214.7" cy="638.8" rx="1.5" ry="1.9" transform="rotate(124 214.7 638.8)" fill="#c3ddb0" opacity="0.6"/>
<ellipse cx="225.9" cy="190.3" rx="1.8" ry="1.1" transform="rotate(124 225.9 190.3)" fill="#d6e8c4" opacity="0.6"/>
<ellipse cx="192.3" cy="414.1" rx="3.0" ry="2.5" transform="rotate(26 192.3 414.1)" fill="#cfe3ba" opacity="0.6"/>
<ellipse cx="179.4" cy="460.4" rx="1.9" ry="1.1" transform="rotate(12 179.4 460.4)" fill="#cfe3ba" opacity="0.6"/>
<ellipse cx="22.0" cy="85.1" rx="2.7" ry="2.4" transform="rotate(117 22.0 85.1)" fill="#c3ddb0" opacity="0.6"/>
<ellipse cx="276.2" cy="312.3" rx="3.7" ry="1.5" transform="rotate(71 276.2 312.3)" fill="#d6e8c4" opacity="0.6"/>
<ellipse cx="133.5" cy="480.6" rx="1.3" ry="2.9" transform="rotate(62 133.5 480.6)" fill="#d6e8c4" opacity="0.6"/>
<ellipse cx="9.2" cy="541.4" rx="1.7" ry="2.7" transform="rotate(145 9.2 541.4)" fill="#c3ddb0" opacity="0.6"/>
<ellipse cx="83.3" cy="45.9" rx="1.6" ry="2.8" transform="rotate(28 83.3 45.9)" fill="#c3ddb0" opacity="0.6"/>
<ellipse cx="198.4" cy="149.3" rx="1.4" ry="1.2" transform="rotate(177 198.4 149.3)" fill="#f4f1ea" opacity="0.6"/>
<ellipse cx="76.2" cy="93.8" rx="2.8" ry="1.1" transform="rotate(53 76.2 93.8)" fill="#c3ddb0" opacity="0.6"/>
<ellipse cx="255.8" cy="118.7" rx="3.9" ry="1.7" transform="rotate(130 255.8 118.7)" fill="#d6e8c4" opacity="0.6"/>
<ellipse cx="110.8" cy="486.0" rx="2.1" ry="1.3" transform="rotate(119 110.8 486.0)" fill="#d6e8c4" opacity="0.6"/>
<ellipse cx="272.8" cy="140.3" rx="3.3" ry="2.9" transform="rotate(5 272.8 140.3)" fill="#d6e8c4" opacity="0.6"/>
<ellipse cx="266.0" cy="501.4" rx="3.6" ry="1.5" transform="rotate(161 266.0 501.4)" fill="#c3ddb0" opacity="0.6"/>
<ellipse cx="260.9" cy="70.6" rx="3.0" ry="2.7" transform="rotate(42 260.9 70.6)" fill="#cfe3ba" opacity="0.6"/>
<ellipse cx="141.8" cy="334.9" rx="1.3" ry="2.1" transform="rotate(89 141.8 334.9)" fill="#f4f1ea" opacity="0.6"/>
<ellipse cx="35.3" cy="330.1" rx="1.5" ry="1.5" transform="rotate(79 35.3 330.1)" fill="#cfe3ba" opacity="0.6"/>
<ellipse cx="57.2" cy="201.0" rx="2.3" ry="1.5" transform="rotate(61 57.2 201.0)" fill="#cfe3ba" opacity="0.6"/>
<ellipse cx="21.5" cy="174.6" rx="3.2" ry="2.1" transform="rotate(157 21.5 174.6)" fill="#f4f1ea" opacity="0.6"/>
<ellipse cx="33.0" cy="610.9" rx="2.6" ry="1.5" transform="rotate(31 33.0 610.9)" fill="#c3ddb0" opacity="0.6"/>
<ellipse cx="63.7" cy="90.3" rx="1.8" ry="2.8" transform="rotate(83 63.7 90.3)" fill="#d6e8c4" opacity="0.6"/>
<ellipse cx="22.3" cy="314.1" rx="2.0" ry="1.4" transform="rotate(119 22.3 314.1)" fill="#c3ddb0" opacity="0.6"/>
<ellipse cx="20.4" cy="465.6" rx="2.4" ry="1.5" transform="rotate(92 20.4 465.6)" fill="#cfe3ba" opacity="0.6"/>
<ellipse cx="193.1" cy="455.6" rx="1.1" ry="2.3" transform="rotate(139 193.1 455.6)" fill="#d6e8c4" opacity="0.6"/>
<ellipse cx="195.3" cy="127.7" rx="3.4" ry="2.9" transform="rotate(133 195.3 127.7)" fill="#c3ddb0" opacity="0.6"/>
<ellipse cx="196.9" cy="433.7" rx="3.1" ry="1.0" transform="rotate(83 196.9 433.7)" fill="#cfe3ba" opacity="0.6"/>
<ellipse cx="134.8" cy="554.3" rx="1.9" ry="3.0" transform="rotate(151 134.8 554.3)" fill="#c3ddb0" opacity="0.6"/>
<ellipse cx="224.7" cy="392.9" rx="3.8" ry="1.8" transform="rotate(122 224.7 392.9)" fill="#cfe3ba" opacity="0.6"/>
<ellipse cx="108.0" cy="332.9" rx="1.2" ry="1.7" transform="rotate(154 108.0 332.9)" fill="#f4f1ea" opacity="0.6"/>
<ellipse cx="201.8" cy="168.4" rx="3.7" ry="1.4" transform="rotate(85 201.8 168.4)" fill="#c3ddb0" opacity="0.6"/>
<ellipse cx="299.9" cy="316.2" rx="1.7" ry="2.9" transform="rotate(58 299.9 316.2)" fill="#f4f1ea" opacity="0.6"/>
<ellipse cx="53.3" cy="289.9" rx="3.1" ry="2.1" transform="rotate(139 53.3 289.9)" fill="#d6e8c4" opacity="0.6"/>
<ellipse cx="248.4" cy="40.1" rx="2.8" ry="1.5" transform="rotate(82 248.4 40.1)" fill="#f4f1ea" opacity="0.6"/>
<ellipse cx="41.3" cy="185.5" rx="1.4" ry="2.9" transform="rotate(27 41.3 185.5)" fill="#d6e8c4" opacity="0.6"/>
<ellipse cx="299.5" cy="121.8" rx="2.0" ry="2.5" transform="rotate(30 299.5 121.8)" fill="#f4f1ea" opacity="0.6"/>
<ellipse cx="50.3" cy="394.3" rx="2.4" ry="1.8" transform="rotate(160 50.3 394.3)" fill="#d6e8c4" opacity="0.6"/>
<ellipse cx="258.1" cy="618.9" rx="1.8" ry="2.9" transform="rotate(73 258.1 618.9)" fill="#cfe3ba" opacity="0.6"/>
<ellipse cx="130.7" cy="535.9" rx="3.9" ry="2.8" transform="rotate(13 130.7 535.9)" fill="#d6e8c4" opacity="0.6"/>
<polyline points="268.5,307.9 257.7,299.2 252.0,294.5 238.7,290.6 224.5,284.2" fill="none" stroke="#aaa3b0" stroke-width="0.7" stroke-opacity="0.55" stroke-linejoin="round" stroke-linecap="round"/>
<polyline points="277.6,627.8 279.5,636.6 285.9,651.6" fill="none" stroke="#eab3b6" stroke-width="0.8" stroke-opacity="0.6" stroke-linejoin="round" stroke-linecap="round"/>
<polyline points="296.1,439.7 289.5,441.5 276.1,439.9 262.0,438.9 256.8,435.7" fill="none" stroke="#eab3b6" stroke-width="0.8" stroke-opacity="0.6" stroke-linejoin="round" stroke-linecap="round"/>
<polyline points="142.1,460.0 139.1,450.6 146.6,434.5 142.8,417.3" fill="none" stroke="#aaa3b0" stroke-width="0.7" stroke-opacity="0.55" stroke-linejoin="round" stroke-linecap="round"/>
<polyline points="163.6,296.6 175.3,305.2 186.1,310.3 203.6,314.4" fill="none" stroke="#eab3b6" stroke-width="0.8" stroke-opacity="0.6" stroke-linejoin="round" stroke-linecap="round"/>
<polyline points="194.7,578.6 198.0,591.6 198.1,603.2 199.0,613.1" fill="none" stroke="#eab3b6" stroke-width="0.8" stroke-opacity="0.6" stroke-linejoin="round" stroke-linecap="round"/>
<polyline points="163.7,263.6 158.4,253.1 145.1,248.5 134.9,250.7 121.7,243.1" fill="none" stroke="#aaa3b0" stroke-width="0.7" stroke-opacity="0.55" stroke-linejoin="round" stroke-linecap="round"/>
<polyline points="257.4,438.8 244.3,429.2 239.2,423.1 227.9,421.1" fill="none" stroke="#eab3b6" stroke-width="0.8" stroke-opacity="0.6" stroke-linejoin="round" stroke-linecap="round"/>
<polyline points="203.1,512.4 213.0,517.1 218.4,520.3" fill="none" stroke="#eab3b6" stroke-width="0.8" stroke-opacity="0.6" stroke-linejoin="round" stroke-linecap="round"/>
<polyline points="245.5,553.9 254.0,551.7 265.7,543.1 271.9,544.0" fill="none" stroke="#aaa3b0" stroke-width="0.7" stroke-opacity="0.55" stroke-linejoin="round" stroke-linecap="round"/>
<polyline points="26.6,611.4 33.2,609.8 41.7,605.4 58.1,604.0" fill="none" stroke="#eab3b6" stroke-width="0.8" stroke-opacity="0.6" stroke-linejoin="round" stroke-linecap="round"/>
<polyline points="96.6,607.1 103.8,618.4 106.1,627.3 102.9,641.7 103.4,653.6" fill="none" stroke="#eab3b6" stroke-width="0.8" stroke-opacity="0.6" stroke-linejoin="round" stroke-linecap="round"/>
<polyline points="50.3,608.1 38.9,596.8 31.3,591.0" fill="none" stroke="#aaa3b0" stroke-width="0.7" stroke-opacity="0.55" stroke-linejoin="round" stroke-linecap="round"/>
<polyline points="-4.7,243.7 8.1,241.2 19.3,231.9 34.5,228.8 40.2,224.6 52.1,220.0" fill="none" stroke="#eab3b6" stroke-width="0.8" stroke-opacity="0.6" stroke-linejoin="round" stroke-linecap="round"/>
<polyline points="34.2,173.7 28.6,163.7 27.3,151.7" fill="none" stroke="#eab3b6" stroke-width="0.8" stroke-opacity="0.6" stroke-linejoin="round" stroke-linecap="round"/>
<polyline points="157.0,255.8 163.5,261.5 176.2,266.6 186.5,275.1" fill="none" stroke="#aaa3b0" stroke-width="0.7" stroke-opacity="0.55" stroke-linejoin="round" stroke-linecap="round"/>
<polyline points="278.6,180.7 280.0,187.3 282.6,197.0 281.8,211.2 275.9,225.7" fill="none" stroke="#eab3b6" stroke-width="0.8" stroke-opacity="0.6" stroke-linejoin="round" stroke-linecap="round"/>
<polyline points="116.9,368.5 118.9,374.8 121.0,382.3 114.5,397.5 111.6,405.3" fill="none" stroke="#eab3b6" stroke-width="0.8" stroke-opacity="0.6" stroke-linejoin="round" stroke-linecap="round"/>
<polyline points="28.3,359.0 17.6,354.1 10.8,353.3 -1.7,348.2 -8.3,346.4" fill="none" stroke="#aaa3b0" stroke-width="0.7" stroke-opacity="0.55" stroke-linejoin="round" stroke-linecap="round"/>
<polyline points="247.1,363.0 236.9,358.9 227.5,350.8 221.6,337.3 217.3,332.3 215.4,325.5" fill="none" stroke="#eab3b6" stroke-width="0.8" stroke-opacity="0.6" stroke-linejoin="round" stroke-linecap="round"/>
<polyline points="285.2,138.5 284.9,124.3 275.3,114.3 272.5,100.6" fill="none" stroke="#eab3b6" stroke-width="0.8" stroke-opacity="0.6" stroke-linejoin="round" stroke-linecap="round"/>
<polyline points="99.1,366.7 103.7,380.8 118.5,389.0" fill="none" stroke="#aaa3b0" stroke-width="0.7" stroke-opacity="0.55" stroke-linejoin="round" stroke-linecap="round"/>
<polyline points="204.5,372.7 195.2,364.6 192.7,357.0 181.3,346.8 173.1,341.1" fill="none" stroke="#eab3b6" stroke-width="0.8" stroke-opacity="0.6" stroke-linejoin="round" stroke-linecap="round"/>
<polyline points="29.4,203.3 41.1,190.4 55.6,188.5" fill="none" stroke="#eab3b6" stroke-width="0.8" stroke-opacity="0.6" stroke-linejoin="round" stroke-linecap="round"/>
<polyline points="113.7,193.6 113.7,204.3 120.7,218.1 122.0,235.0 123.4,251.4" fill="none" stroke="#aaa3b0" stroke-width="0.7" stroke-opacity="0.55" stroke-linejoin="round" stroke-linecap="round"/>
<polyline points="154.2,533.3 165.4,542.3 167.1,555.5 173.3,568.9 171.5,583.0 169.0,589.2" fill="none" stroke="#eab3b6" stroke-width="0.8" stroke-opacity="0.6" stroke-linejoin="round" stroke-linecap="round"/>
<polyline points="-10.0,196.7 -21.5,208.9 -31.4,209.8 -45.5,202.6 -55.9,201.6" fill="none" stroke="#eab3b6" stroke-width="0.8" stroke-opacity="0.6" stroke-linejoin="round" stroke-linecap="round"/>
<polyline points="109.9,268.2 103.7,268.6 89.0,265.2" fill="none" stroke="#aaa3b0" stroke-width="0.7" stroke-opacity="0.55" stroke-linejoin="round" stroke-linecap="round"/>
<polyline points="236.3,394.5 250.7,397.8 263.3,407.2" fill="none" stroke="#eab3b6" stroke-width="0.8" stroke-opacity="0.6" stroke-linejoin="round" stroke-linecap="round"/>
<polyline points="71.0,447.0 68.1,459.1 68.6,475.0 73.0,490.5 68.4,506.4" fill="none" stroke="#eab3b6" stroke-width="0.8" stroke-opacity="0.6" stroke-linejoin="round" stroke-linecap="round"/>
<polyline points="34.5,613.6 41.2,598.9 57.4,592.6" fill="none" stroke="#aaa3b0" stroke-width="0.7" stroke-opacity="0.55" stroke-linejoin="round" stroke-linecap="round"/>
<polyline points="140.5,332.5 144.1,322.8 141.6,315.8 146.2,299.6" fill="none" stroke="#eab3b6" stroke-width="0.8" stroke-opacity="0.6" stroke-linejoin="round" stroke-linecap="round"/>
<polyline points="-1.8,278.3 -5.6,270.8 -11.0,261.5 -11.7,244.0 -16.3,231.2 -13.0,220.1" fill="none" stroke="#eab3b6" stroke-width="0.8" stroke-opacity="0.6" stroke-linejoin="round" stroke-linecap="round"/>
<polyline points="277.9,492.9 274.4,499.3 264.8,512.0 257.5,521.3 249.0,535.5" fill="none" stroke="#aaa3b0" stroke-width="0.7" stroke-opacity="0.55" stroke-linejoin="round" stroke-linecap="round"/>
<polyline points="203.0,182.7 189.3,185.2 176.5,179.8 166.5,174.2 161.3,170.5" fill="none" stroke="#eab3b6" stroke-width="0.8" stroke-opacity="0.6" stroke-linejoin="round" stroke-linecap="round"/>
<polyline points="31.9,649.2 30.4,664.6 31.6,673.2 27.6,688.3 30.7,704.6" fill="none" stroke="#eab3b6" stroke-width="0.8" stroke-opacity="0.6" stroke-linejoin="round" stroke-linecap="round"/>
<polyline points="307.6,315.7 299.2,316.3 289.9,320.0" fill="none" stroke="#aaa3b0" stroke-width="0.7" stroke-opacity="0.55" stroke-linejoin="round" stroke-linecap="round"/>
<polyline points="224.3,170.2 217.8,166.1 212.8,148.8" fill="none" stroke="#eab3b6" stroke-width="0.8" stroke-opacity="0.6" stroke-linejoin="round" stroke-linecap="round"/>
<polyline points="169.6,529.2 167.8,539.4 161.4,545.0" fill="none" stroke="#eab3b6" stroke-width="0.8" stroke-opacity="0.6" stroke-linejoin="round" stroke-linecap="round"/>
<polyline points="-2.5,356.4 11.5,346.4 18.1,342.5 33.0,337.6" fill="none" stroke="#aaa3b0" stroke-width="0.7" stroke-opacity="0.55" stroke-linejoin="round" stroke-linecap="round"/>
<polyline points="125.6,415.2 128.7,423.3 129.8,429.8 125.6,444.9 119.2,449.7" fill="none" stroke="#eab3b6" stroke-width="0.8" stroke-opacity="0.6" stroke-linejoin="round" stroke-linecap="round"/>
<polyline points="240.5,377.8 244.7,384.7 243.7,402.4 240.8,409.1" fill="none" stroke="#eab3b6" stroke-width="0.8" stroke-opacity="0.6" stroke-linejoin="round" stroke-linecap="round"/>
<polyline points="138.0,410.6 135.0,416.5 124.5,420.8 121.2,426.8 109.4,434.6 104.7,445.1" fill="none" stroke="#aaa3b0" stroke-width="0.7" stroke-opacity="0.55" stroke-linejoin="round" stroke-linecap="round"/>
<polyline points="194.4,648.6 185.9,650.6 176.3,647.1 166.8,644.7" fill="none" stroke="#eab3b6" stroke-width="0.8" stroke-opacity="0.6" stroke-linejoin="round" stroke-linecap="round"/>
<polyline points="193.2,322.9 202.3,325.6 218.2,328.2 229.1,335.6 237.0,340.4" fill="none" stroke="#eab3b6" stroke-width="0.8" stroke-opacity="0.6" stroke-linejoin="round" stroke-linecap="round"/>
<polyline points="155.9,338.4 146.4,342.1 140.6,345.7 135.2,359.5" fill="none" stroke="#aaa3b0" stroke-width="0.7" stroke-opacity="0.55" stroke-linejoin="round" stroke-linecap="round"/>
<polyline points="97.4,475.9 105.2,461.9 108.8,456.5 118.9,450.6" fill="none" stroke="#eab3b6" stroke-width="0.8" stroke-opacity="0.6" stroke-linejoin="round" stroke-linecap="round"/>
<polyline points="152.8,480.2 150.8,472.6 150.6,457.7 140.3,447.8 132.2,436.2 125.3,429.1" fill="none" stroke="#eab3b6" stroke-width="0.8" stroke-opacity="0.6" stroke-linejoin="round" stroke-linecap="round"/>
<polyline points="172.9,189.6 177.0,179.6 176.2,172.3 184.1,158.8" fill="none" stroke="#aaa3b0" stroke-width="0.7" stroke-opacity="0.55" stroke-linejoin="round" stroke-linecap="round"/>
<polyline points="-1.4,250.7 -12.3,256.5 -16.1,268.4 -23.1,275.5 -30.4,276.2 -42.2,282.4" fill="none" stroke="#eab3b6" stroke-width="0.8" stroke-opacity="0.6" stroke-linejoin="round" stroke-linecap="round"/>
<polyline points="170.9,565.7 184.0,557.0 189.7,554.7 198.9,557.0 215.7,561.0 222.6,561.3" fill="none" stroke="#eab3b6" stroke-width="0.8" stroke-opacity="0.6" stroke-linejoin="round" stroke-linecap="round"/>
<polyline points="57.1,494.7 63.1,497.6 77.9,498.6 93.3,505.5 98.6,517.0" fill="none" stroke="#aaa3b0" stroke-width="0.7" stroke-opacity="0.55" stroke-linejoin="round" stroke-linecap="round"/>
<polyline points="285.0,112.9 291.5,113.3 306.2,114.2 319.8,113.3 327.6,115.5 336.7,112.4" fill="none" stroke="#eab3b6" stroke-width="0.8" stroke-opacity="0.6" stroke-linejoin="round" stroke-linecap="round"/>
<polyline points="16.9,154.7 28.3,162.1 36.2,161.7 47.5,154.8 64.5,149.9" fill="none" stroke="#eab3b6" stroke-width="0.8" stroke-opacity="0.6" stroke-linejoin="round" stroke-linecap="round"/>
<polyline points="105.4,637.6 95.8,643.6 90.5,647.1 74.5,652.2 63.4,664.7 50.8,669.6" fill="none" stroke="#aaa3b0" stroke-width="0.7" stroke-opacity="0.55" stroke-linejoin="round" stroke-linecap="round"/>
<polyline points="199.7,322.9 195.3,311.1 196.9,305.1" fill="none" stroke="#eab3b6" stroke-width="0.8" stroke-opacity="0.6" stroke-linejoin="round" stroke-linecap="round"/>
<polyline points="130.5,73.6 125.4,67.7 110.1,65.7 98.3,63.8 91.2,60.3 82.0,52.7" fill="none" stroke="#eab3b6" stroke-width="0.8" stroke-opacity="0.6" stroke-linejoin="round" stroke-linecap="round"/>
<polyline points="285.3,474.0 297.4,467.0 310.9,461.0 325.8,451.7 342.7,454.6" fill="none" stroke="#aaa3b0" stroke-width="0.7" stroke-opacity="0.55" stroke-linejoin="round" stroke-linecap="round"/>
<polyline points="186.9,246.6 178.3,246.5 165.5,242.9 154.2,249.3 144.6,259.1" fill="none" stroke="#eab3b6" stroke-width="0.8" stroke-opacity="0.6" stroke-linejoin="round" stroke-linecap="round"/>
<polyline points="169.2,532.6 153.6,537.5 143.0,532.0 139.5,526.5 135.1,521.0 128.2,514.5" fill="none" stroke="#eab3b6" stroke-width="0.8" stroke-opacity="0.6" stroke-linejoin="round" stroke-linecap="round"/>
<polyline points="152.4,476.0 160.1,470.6 165.6,455.1 169.3,440.9" fill="none" stroke="#aaa3b0" stroke-width="0.7" stroke-opacity="0.55" stroke-linejoin="round" stroke-linecap="round"/>
<polyline points="72.1,490.9 56.4,487.9 49.7,488.8" fill="none" stroke="#eab3b6" stroke-width="0.8" stroke-opacity="0.6" stroke-linejoin="round" stroke-linecap="round"/>
<polyline points="72.6,521.4 70.5,535.6 66.9,544.2 61.3,552.2 49.9,561.0 43.4,560.6" fill="none" stroke="#eab3b6" stroke-width="0.8" stroke-opacity="0.6" stroke-linejoin="round" stroke-linecap="round"/>
<polyline points="257.6,538.7 256.8,554.9 251.6,562.3 244.9,571.5" fill="none" stroke="#aaa3b0" stroke-width="0.7" stroke-opacity="0.55" stroke-linejoin="round" stroke-linecap="round"/>
<polyline points="-1.8,108.3 -4.4,95.3 -1.7,88.9" fill="none" stroke="#eab3b6" stroke-width="0.8" stroke-opacity="0.6" stroke-linejoin="round" stroke-linecap="round"/>
<polyline points="83.1,555.5 73.9,543.6 67.3,529.0 61.5,523.4" fill="none" stroke="#eab3b6" stroke-width="0.8" stroke-opacity="0.6" stroke-linejoin="round" stroke-linecap="round"/>
<polyline points="280.0,191.6 284.6,175.3 281.7,158.7 281.9,141.0" fill="none" stroke="#aaa3b0" stroke-width="0.7" stroke-opacity="0.55" stroke-linejoin="round" stroke-linecap="round"/>
<polyline points="236.8,432.2 226.1,435.0 216.8,437.9 211.2,446.8 202.6,455.0 196.3,460.4" fill="none" stroke="#eab3b6" stroke-width="0.8" stroke-opacity="0.6" stroke-linejoin="round" stroke-linecap="round"/>
<polyline points="72.8,367.2 79.4,371.7 91.1,371.9 100.3,372.0 112.7,369.5" fill="none" stroke="#eab3b6" stroke-width="0.8" stroke-opacity="0.6" stroke-linejoin="round" stroke-linecap="round"/>
<polyline points="233.8,407.7 245.9,420.4 245.9,428.1" fill="none" stroke="#aaa3b0" stroke-width="0.7" stroke-opacity="0.55" stroke-linejoin="round" stroke-linecap="round"/>
<polyline points="176.3,630.4 173.0,635.8 172.4,643.3 176.0,656.4" fill="none" stroke="#eab3b6" stroke-width="0.8" stroke-opacity="0.6" stroke-linejoin="round" stroke-linecap="round"/>
<polyline points="170.2,619.5 162.9,603.9 148.9,593.4 144.0,586.9 136.4,583.6" fill="none" stroke="#eab3b6" stroke-width="0.8" stroke-opacity="0.6" stroke-linejoin="round" stroke-linecap="round"/>
<polyline points="83.8,478.8 80.6,470.9 69.9,465.0" fill="none" stroke="#aaa3b0" stroke-width="0.7" stroke-opacity="0.55" stroke-linejoin="round" stroke-linecap="round"/>
<polyline points="202.0,504.4 198.4,521.1 186.5,528.7" fill="none" stroke="#eab3b6" stroke-width="0.8" stroke-opacity="0.6" stroke-linejoin="round" stroke-linecap="round"/>
<polyline points="218.2,61.0 227.0,57.8 240.8,61.8 250.5,64.9 260.4,72.3 273.2,74.0" fill="none" stroke="#eab3b6" stroke-width="0.8" stroke-opacity="0.6" stroke-linejoin="round" stroke-linecap="round"/>
<polyline points="306.2,594.6 301.6,602.6 290.5,607.7 277.2,619.3" fill="none" stroke="#aaa3b0" stroke-width="0.7" stroke-opacity="0.55" stroke-linejoin="round" stroke-linecap="round"/>
<polyline points="119.6,471.5 134.3,468.5 140.8,464.3 150.7,454.5 168.6,453.4 178.6,462.4" fill="none" stroke="#eab3b6" stroke-width="0.8" stroke-opacity="0.6" stroke-linejoin="round" stroke-linecap="round"/>
<polyline points="199.1,155.1 192.9,139.5 187.5,133.9 180.0,132.0" fill="none" stroke="#eab3b6" stroke-width="0.8" stroke-opacity="0.6" stroke-linejoin="round" stroke-linecap="round"/>
<polyline points="178.3,532.5 183.3,542.3 185.7,548.0" fill="none" stroke="#aaa3b0" stroke-width="0.7" stroke-opacity="0.55" stroke-linejoin="round" stroke-linecap="round"/>
<polyline points="8.6,309.4 16.2,323.3 21.8,327.7" fill="none" stroke="#eab3b6" stroke-width="0.8" stroke-opacity="0.6" stroke-linejoin="round" stroke-linecap="round"/>
<polyline points="142.8,288.6 141.5,302.6 134.8,311.9" fill="none" stroke="#eab3b6" stroke-width="0.8" stroke-opacity="0.6" stroke-linejoin="round" stroke-linecap="round"/>
<polyline points="151.0,605.0 142.0,603.4 129.6,594.8 123.1,592.5" fill="none" stroke="#aaa3b0" stroke-width="0.7" stroke-opacity="0.55" stroke-linejoin="round" stroke-linecap="round"/>
<polyline points="231.4,103.8 229.7,96.1 224.6,87.6 226.2,73.3 226.2,65.3 221.3,59.7" fill="none" stroke="#eab3b6" stroke-width="0.8" stroke-opacity="0.6" stroke-linejoin="round" stroke-linecap="round"/>
<polyline points="261.2,442.3 266.4,446.2 278.6,445.2" fill="none" stroke="#eab3b6" stroke-width="0.8" stroke-opacity="0.6" stroke-linejoin="round" stroke-linecap="round"/>
<polyline points="229.4,172.8 218.8,176.5 211.7,177.0 206.6,173.7" fill="none" stroke="#aaa3b0" stroke-width="0.7" stroke-opacity="0.55" stroke-linejoin="round" stroke-linecap="round"/>
<polyline points="61.3,295.0 63.8,304.2 67.9,312.1" fill="none" stroke="#eab3b6" stroke-width="0.8" stroke-opacity="0.6" stroke-linejoin="round" stroke-linecap="round"/>
<polyline points="201.7,254.8 211.2,260.5 218.1,260.5 235.9,261.5 241.3,266.3 250.1,274.2" fill="none" stroke="#eab3b6" stroke-width="0.8" stroke-opacity="0.6" stroke-linejoin="round" stroke-linecap="round"/>
<polyline points="52.1,455.2 36.0,461.3 24.4,459.6 13.7,464.6 6.4,476.8 -3.4,485.3" fill="none" stroke="#aaa3b0" stroke-width="0.7" stroke-opacity="0.55" stroke-linejoin="round" stroke-linecap="round"/>
<polyline points="302.4,86.7 295.1,80.1 282.1,79.9" fill="none" stroke="#eab3b6" stroke-width="0.8" stroke-opacity="0.6" stroke-linejoin="round" stroke-linecap="round"/>
<polyline points="221.4,265.3 213.8,251.3 204.1,245.5 196.5,245.4 185.4,244.3" fill="none" stroke="#eab3b6" stroke-width="0.8" stroke-opacity="0.6" stroke-linejoin="round" stroke-linecap="round"/>
<polyline points="65.3,595.3 63.6,588.1 57.9,575.2 51.8,573.0 35.4,570.9" fill="none" stroke="#aaa3b0" stroke-width="0.7" stroke-opacity="0.55" stroke-linejoin="round" stroke-linecap="round"/>
<polyline points="308.8,247.8 322.4,250.2 330.4,260.2 341.6,265.0 350.9,268.7 362.9,270.9" fill="none" stroke="#eab3b6" stroke-width="0.8" stroke-opacity="0.6" stroke-linejoin="round" stroke-linecap="round"/>
<polyline points="178.2,191.3 176.2,202.2 172.7,209.6 168.3,217.8" fill="none" stroke="#eab3b6" stroke-width="0.8" stroke-opacity="0.6" stroke-linejoin="round" stroke-linecap="round"/>
<polyline points="236.4,475.2 232.9,458.4 230.9,448.1 225.4,438.8 222.4,423.2 219.1,408.8" fill="none" stroke="#aaa3b0" stroke-width="0.7" stroke-opacity="0.55" stroke-linejoin="round" stroke-linecap="round"/>
<polyline points="58.1,326.7 54.1,332.5 49.0,345.3 35.0,356.4 24.4,366.7" fill="none" stroke="#eab3b6" stroke-width="0.8" stroke-opacity="0.6" stroke-linejoin="round" stroke-linecap="round"/>
<polyline points="71.9,276.2 82.7,274.6 95.5,271.3" fill="none" stroke="#eab3b6" stroke-width="0.8" stroke-opacity="0.6" stroke-linejoin="round" stroke-linecap="round"/>
<polyline points="274.8,572.3 273.7,583.9 267.3,597.3 267.8,604.6" fill="none" stroke="#aaa3b0" stroke-width="0.7" stroke-opacity="0.55" stroke-linejoin="round" stroke-linecap="round"/>
<polyline points="53.1,588.8 63.1,601.6 63.9,612.8 65.9,622.4" fill="none" stroke="#eab3b6" stroke-width="0.8" stroke-opacity="0.6" stroke-linejoin="round" stroke-linecap="round"/>
<polyline points="301.7,168.2 315.3,172.2 321.7,171.4 327.0,167.4 332.6,162.0" fill="none" stroke="#eab3b6" stroke-width="0.8" stroke-opacity="0.6" stroke-linejoin="round" stroke-linecap="round"/>
<polyline points="240.9,360.4 249.8,366.6 256.4,372.8 267.1,372.6 273.1,371.4" fill="none" stroke="#aaa3b0" stroke-width="0.7" stroke-opacity="0.55" stroke-linejoin="round" stroke-linecap="round"/>
<polyline points="109.0,509.1 103.5,515.3 104.2,529.4" fill="none" stroke="#eab3b6" stroke-width="0.8" stroke-opacity="0.6" stroke-linejoin="round" stroke-linecap="round"/>
<polyline points="185.5,233.3 194.3,243.0 200.0,251.0 209.7,253.0" fill="none" stroke="#eab3b6" stroke-width="0.8" stroke-opacity="0.6" stroke-linejoin="round" stroke-linecap="round"/>
<polyline points="196.2,415.2 185.6,419.1 170.2,412.0" fill="none" stroke="#aaa3b0" stroke-width="0.7" stroke-opacity="0.55" stroke-linejoin="round" stroke-linecap="round"/>
<polyline points="-5.1,194.7 -6.7,210.9 -2.7,223.3 0.5,228.9 1.0,244.6 7.0,258.7" fill="none" stroke="#eab3b6" stroke-width="0.8" stroke-opacity="0.6" stroke-linejoin="round" stroke-linecap="round"/>
<polyline points="143.3,642.3 156.0,646.0 168.8,642.9 185.6,637.9 197.3,625.0 212.4,624.0" fill="none" stroke="#eab3b6" stroke-width="0.8" stroke-opacity="0.6" stroke-linejoin="round" stroke-linecap="round"/>
<polyline points="229.3,613.9 235.1,607.6 234.7,600.5 227.9,592.6 219.1,584.3" fill="none" stroke="#aaa3b0" stroke-width="0.7" stroke-opacity="0.55" stroke-linejoin="round" stroke-linecap="round"/>
<polyline points="82.6,474.2 72.0,480.5 68.2,489.2 64.2,496.9" fill="none" stroke="#eab3b6" stroke-width="0.8" stroke-opacity="0.6" stroke-linejoin="round" stroke-linecap="round"/>
<polyline points="114.0,560.3 107.3,558.2 101.9,549.3 89.1,543.9 80.2,539.5" fill="none" stroke="#eab3b6" stroke-width="0.8" stroke-opacity="0.6" stroke-linejoin="round" stroke-linecap="round"/>
<polyline points="95.1,558.6 98.6,575.0 102.2,579.8 101.0,588.1 99.0,598.2 100.5,606.1" fill="none" stroke="#aaa3b0" stroke-width="0.7" stroke-opacity="0.55" stroke-linejoin="round" stroke-linecap="round"/>
<polyline points="215.4,157.1 217.9,148.8 230.1,141.5" fill="none" stroke="#eab3b6" stroke-width="0.8" stroke-opacity="0.6" stroke-linejoin="round" stroke-linecap="round"/>
<polyline points="206.2,353.2 199.5,354.0 192.8,358.8 180.9,360.4" fill="none" stroke="#eab3b6" stroke-width="0.8" stroke-opacity="0.6" stroke-linejoin="round" stroke-linecap="round"/>
<polyline points="214.7,514.5 204.9,506.9 197.0,494.4 188.3,491.0 180.0,490.4" fill="none" stroke="#aaa3b0" stroke-width="0.7" stroke-opacity="0.55" stroke-linejoin="round" stroke-linecap="round"/>
<polyline points="301.5,524.6 316.4,523.1 323.3,520.2 335.1,522.3" fill="none" stroke="#eab3b6" stroke-width="0.8" stroke-opacity="0.6" stroke-linejoin="round" stroke-linecap="round"/>
<polyline points="165.9,156.8 178.8,152.9 193.0,150.7" fill="none" stroke="#eab3b6" stroke-width="0.8" stroke-opacity="0.6" stroke-linejoin="round" stroke-linecap="round"/>
<polyline points="153.9,147.1 151.3,131.4 150.5,125.2" fill="none" stroke="#aaa3b0" stroke-width="0.7" stroke-opacity="0.55" stroke-linejoin="round" stroke-linecap="round"/>
<polyline points="274.9,319.6 283.5,305.7 284.8,289.0 283.7,282.8 280.8,276.6 268.6,270.8" fill="none" stroke="#eab3b6" stroke-width="0.8" stroke-opacity="0.6" stroke-linejoin="round" stroke-linecap="round"/>
<polyline points="28.7,154.2 29.4,169.0 35.0,175.4 34.6,188.6 25.7,197.6" fill="none" stroke="#eab3b6" stroke-width="0.8" stroke-opacity="0.6" stroke-linejoin="round" stroke-linecap="round"/>
<polyline points="-8.2,94.8 -1.2,110.3 3.3,122.9 1.5,130.4 -4.6,140.2" fill="none" stroke="#aaa3b0" stroke-width="0.7" stroke-opacity="0.55" stroke-linejoin="round" stroke-linecap="round"/>
<polyline points="241.5,329.0 251.0,340.6 252.4,349.4 250.7,360.1" fill="none" stroke="#eab3b6" stroke-width="0.8" stroke-opacity="0.6" stroke-linejoin="round" stroke-linecap="round"/>
<polyline points="61.7,188.2 71.3,184.7 83.8,179.7 99.3,180.4 109.4,184.5" fill="none" stroke="#eab3b6" stroke-width="0.8" stroke-opacity="0.6" stroke-linejoin="round" stroke-linecap="round"/>
<polyline points="41.2,352.8 48.0,339.2 50.8,331.5 58.4,327.6 71.8,331.0 84.5,329.0" fill="none" stroke="#aaa3b0" stroke-width="0.7" stroke-opacity="0.55" stroke-linejoin="round" stroke-linecap="round"/>
<polyline points="278.3,215.6 272.4,224.3 266.8,230.8" fill="none" stroke="#eab3b6" stroke-width="0.8" stroke-opacity="0.6" stroke-linejoin="round" stroke-linecap="round"/>
<polyline points="130.0,61.1 135.3,55.6 144.9,47.3 159.3,46.1 170.9,38.1" fill="none" stroke="#eab3b6" stroke-width="0.8" stroke-opacity="0.6" stroke-linejoin="round" stroke-linecap="round"/>
<polyline points="20.6,632.8 8.3,639.7 0.2,637.9 -9.7,642.4 -16.9,645.5 -27.7,657.8" fill="none" stroke="#aaa3b0" stroke-width="0.7" stroke-opacity="0.55" stroke-linejoin="round" stroke-linecap="round"/>
<polyline points="114.2,147.9 124.9,155.3 138.5,156.9 145.7,157.6" fill="none" stroke="#eab3b6" stroke-width="0.8" stroke-opacity="0.6" stroke-linejoin="round" stroke-linecap="round"/>
<polyline points="303.7,574.1 295.4,576.6 285.9,575.0" fill="none" stroke="#eab3b6" stroke-width="0.8" stroke-opacity="0.6" stroke-linejoin="round" stroke-linecap="round"/>
<polyline points="222.6,194.7 211.2,191.8 198.8,197.7 191.1,198.8 176.3,199.6" fill="none" stroke="#aaa3b0" stroke-width="0.7" stroke-opacity="0.55" stroke-linejoin="round" stroke-linecap="round"/>
<polyline points="22.4,555.0 24.6,546.8 22.7,530.9" fill="none" stroke="#eab3b6" stroke-width="0.8" stroke-opacity="0.6" stroke-linejoin="round" stroke-linecap="round"/>
<polyline points="74.1,167.6 82.2,163.8 93.0,165.6 106.8,174.4 121.7,173.7 133.5,172.3" fill="none" stroke="#eab3b6" stroke-width="0.8" stroke-opacity="0.6" stroke-linejoin="round" stroke-linecap="round"/>
<polyline points="-2.6,193.0 -12.1,198.5 -22.6,196.8 -29.4,197.8 -39.6,191.1" fill="none" stroke="#aaa3b0" stroke-width="0.7" stroke-opacity="0.55" stroke-linejoin="round" stroke-linecap="round"/>
<polyline points="131.0,317.9 127.1,302.4 133.3,287.8 133.0,281.3 124.4,266.1 126.7,248.3" fill="none" stroke="#eab3b6" stroke-width="0.8" stroke-opacity="0.6" stroke-linejoin="round" stroke-linecap="round"/>
<polyline points="152.8,129.9 154.9,124.1 162.1,112.6 172.5,107.3 177.2,99.0 188.4,89.3" fill="none" stroke="#eab3b6" stroke-width="0.8" stroke-opacity="0.6" stroke-linejoin="round" stroke-linecap="round"/>
<polyline points="55.5,439.1 44.4,436.7 31.3,437.5 24.1,439.9 14.7,440.4" fill="none" stroke="#aaa3b0" stroke-width="0.7" stroke-opacity="0.55" stroke-linejoin="round" stroke-linecap="round"/>
<polyline points="243.0,240.4 229.0,245.1 220.0,259.8 223.0,274.2" fill="none" stroke="#eab3b6" stroke-width="0.8" stroke-opacity="0.6" stroke-linejoin="round" stroke-linecap="round"/>
<polyline points="108.0,166.0 100.6,166.2 88.8,167.3 81.6,168.5 72.4,163.4 60.6,163.1" fill="none" stroke="#eab3b6" stroke-width="0.8" stroke-opacity="0.6" stroke-linejoin="round" stroke-linecap="round"/>
<polyline points="217.8,283.4 207.5,275.5 201.8,268.4 201.8,260.5 199.5,247.4" fill="none" stroke="#aaa3b0" stroke-width="0.7" stroke-opacity="0.55" stroke-linejoin="round" stroke-linecap="round"/>
<polyline points="105.6,415.9 102.2,432.4 104.9,444.8 107.1,450.8" fill="none" stroke="#eab3b6" stroke-width="0.8" stroke-opacity="0.6" stroke-linejoin="round" stroke-linecap="round"/>
<polyline points="132.2,600.2 128.0,605.5 120.9,607.2 108.4,614.7 105.7,624.8 109.6,635.9" fill="none" stroke="#eab3b6" stroke-width="0.8" stroke-opacity="0.6" stroke-linejoin="round" stroke-linecap="round"/>
<polyline points="-4.9,149.2 -9.0,161.1 -12.3,167.1" fill="none" stroke="#aaa3b0" stroke-width="0.7" stroke-opacity="0.55" stroke-linejoin="round" stroke-linecap="round"/>
<polyline points="82.7,631.6 68.9,642.6 54.0,652.1 41.8,658.8" fill="none" stroke="#eab3b6" stroke-width="0.8" stroke-opacity="0.6" stroke-linejoin="round" stroke-linecap="round"/>
<polyline points="87.7,94.5 102.0,94.5 116.5,96.6 128.2,94.1 136.7,86.8 143.1,75.4" fill="none" stroke="#eab3b6" stroke-width="0.8" stroke-opacity="0.6" stroke-linejoin="round" stroke-linecap="round"/>
<polyline points="85.7,222.1 73.9,219.2 63.4,219.3" fill="none" stroke="#aaa3b0" stroke-width="0.7" stroke-opacity="0.55" stroke-linejoin="round" stroke-linecap="round"/>
<polyline points="91.3,551.2 90.7,562.1 84.8,569.3 68.2,571.2 54.6,560.5" fill="none" stroke="#eab3b6" stroke-width="0.8" stroke-opacity="0.6" stroke-linejoin="round" stroke-linecap="round"/>
<polyline points="72.3,540.5 59.8,539.0 45.9,546.2 43.0,554.9" fill="none" stroke="#eab3b6" stroke-width="0.8" stroke-opacity="0.6" stroke-linejoin="round" stroke-linecap="round"/>
<polyline points="215.1,272.6 211.0,265.7 208.1,256.5 209.6,248.4" fill="none" stroke="#aaa3b0" stroke-width="0.7" stroke-opacity="0.55" stroke-linejoin="round" stroke-linecap="round"/>
<polyline points="195.4,371.9 185.0,369.5 177.8,365.4 168.8,356.3" fill="none" stroke="#eab3b6" stroke-width="0.8" stroke-opacity="0.6" stroke-linejoin="round" stroke-linecap="round"/>
<polyline points="302.4,228.6 298.0,221.6 300.9,204.2 311.2,189.6 319.7,175.9 321.7,161.1" fill="none" stroke="#eab3b6" stroke-width="0.8" stroke-opacity="0.6" stroke-linejoin="round" stroke-linecap="round"/>
<polyline points="218.8,613.8 229.3,609.0 239.5,600.6 256.1,602.0 267.6,596.9" fill="none" stroke="#aaa3b0" stroke-width="0.7" stroke-opacity="0.55" stroke-linejoin="round" stroke-linecap="round"/>
<polyline points="46.6,112.3 58.9,101.5 65.0,96.7 79.7,86.8" fill="none" stroke="#eab3b6" stroke-width="0.8" stroke-opacity="0.6" stroke-linejoin="round" stroke-linecap="round"/>
<polyline points="249.9,632.5 251.3,643.1 260.2,650.0" fill="none" stroke="#eab3b6" stroke-width="0.8" stroke-opacity="0.6" stroke-linejoin="round" stroke-linecap="round"/>
<polyline points="111.6,67.5 118.1,64.6 128.5,67.8 141.5,66.2 152.3,64.3 159.4,64.9" fill="none" stroke="#aaa3b0" stroke-width="0.7" stroke-opacity="0.55" stroke-linejoin="round" stroke-linecap="round"/>
<polyline points="133.5,185.6 137.6,191.9 137.8,198.1" fill="none" stroke="#eab3b6" stroke-width="0.8" stroke-opacity="0.6" stroke-linejoin="round" stroke-linecap="round"/>
<polyline points="217.5,537.7 218.7,529.9 220.7,520.9 221.2,512.7" fill="none" stroke="#eab3b6" stroke-width="0.8" stroke-opacity="0.6" stroke-linejoin="round" stroke-linecap="round"/>
<polyline points="216.7,398.1 222.3,382.1 231.9,373.5 241.0,359.0 243.5,352.2" fill="none" stroke="#aaa3b0" stroke-width="0.7" stroke-opacity="0.55" stroke-linejoin="round" stroke-linecap="round"/>
<polyline points="96.7,476.8 113.6,473.8 124.6,476.8 139.4,479.9 146.7,479.3" fill="none" stroke="#eab3b6" stroke-width="0.8" stroke-opacity="0.6" stroke-linejoin="round" stroke-linecap="round"/>
<polyline points="188.3,537.3 192.2,544.9 193.9,552.9 200.6,566.0" fill="none" stroke="#eab3b6" stroke-width="0.8" stroke-opacity="0.6" stroke-linejoin="round" stroke-linecap="round"/>
<polyline points="144.3,87.5 144.4,80.5 144.1,74.3" fill="none" stroke="#aaa3b0" stroke-width="0.7" stroke-opacity="0.55" stroke-linejoin="round" stroke-linecap="round"/>
<polyline points="143.8,303.1 149.6,298.1 151.0,287.2 149.4,273.8 147.6,267.3 149.7,261.6" fill="none" stroke="#eab3b6" stroke-width="0.8" stroke-opacity="0.6" stroke-linejoin="round" stroke-linecap="round"/>
<polyline points="1.9,524.9 -2.8,528.8 -4.3,535.3 -5.9,551.3" fill="none" stroke="#eab3b6" stroke-width="0.8" stroke-opacity="0.6" stroke-linejoin="round" stroke-linecap="round"/>
<polyline points="213.3,630.0 217.1,625.2 221.4,617.1 225.6,611.8 232.8,604.1 240.0,596.1" fill="none" stroke="#aaa3b0" stroke-width="0.7" stroke-opacity="0.55" stroke-linejoin="round" stroke-linecap="round"/>
<polyline points="190.0,85.0 192.0,116.0 183.0,156.5 152.0,174.0 147.5,223.5 154.0,250.0 150.0,277.0 156.5,322.0 168.0,335.0" fill="none" stroke="#a7a2ae" stroke-width="0.8" stroke-opacity="0.8" stroke-linejoin="round" stroke-linecap="round"/>
<polyline points="183.0,129.6 210.0,129.6 232.5,125.0 268.0,129.6 299.5,134.0" fill="none" stroke="#a7a2ae" stroke-width="0.8" stroke-opacity="0.8" stroke-linejoin="round" stroke-linecap="round"/>
<polyline points="214.6,147.5 228.0,210.0 241.4,223.5 277.0,223.5 299.5,210.0" fill="none" stroke="#a7a2ae" stroke-width="0.8" stroke-opacity="0.8" stroke-linejoin="round" stroke-linecap="round"/>
<polyline points="0.0,165.0 26.8,161.0 53.6,152.0 73.8,150.0" fill="none" stroke="#a7a2ae" stroke-width="0.8" stroke-opacity="0.8" stroke-linejoin="round" stroke-linecap="round"/>
<polyline points="223.5,304.0 250.0,290.6 277.0,295.0 299.5,286.0" fill="none" stroke="#a7a2ae" stroke-width="0.8" stroke-opacity="0.8" stroke-linejoin="round" stroke-linecap="round"/>
<polyline points="0.0,268.0 26.8,263.7 53.6,272.7 89.4,290.6 111.8,308.4" fill="none" stroke="#a7a2ae" stroke-width="0.8" stroke-opacity="0.8" stroke-linejoin="round" stroke-linecap="round"/>
<polyline points="168.0,335.0 190.0,330.0 215.0,330.0 240.0,335.0 255.0,330.0 275.0,345.0 300.0,340.0" fill="none" stroke="#a7a2ae" stroke-width="0.8" stroke-opacity="0.8" stroke-linejoin="round" stroke-linecap="round"/>
<polyline points="230.0,340.0 235.0,380.0 250.0,395.0" fill="none" stroke="#a7a2ae" stroke-width="0.8" stroke-opacity="0.8" stroke-linejoin="round" stroke-linecap="round"/>
<polyline points="60.0,370.0 65.0,400.0 55.0,420.0 40.0,430.0" fill="none" stroke="#a7a2ae" stroke-width="0.8" stroke-opacity="0.8" stroke-linejoin="round" stroke-linecap="round"/>
<polyline points="110.0,380.0 115.0,400.0 120.0,420.0 115.0,440.0 125.0,460.0 118.0,475.0" fill="none" stroke="#a7a2ae" stroke-width="0.8" stroke-opacity="0.8" stroke-linejoin="round" stroke-linecap="round"/>
<polyline points="150.0,400.0 160.0,430.0 175.0,450.0 185.0,470.0 195.0,485.0" fill="none" stroke="#a7a2ae" stroke-width="0.8" stroke-opacity="0.8" stroke-linejoin="round" stroke-linecap="round"/>
<polyline points="190.0,420.0 210.0,440.0 225.0,460.0 240.0,470.0" fill="none" stroke="#a7a2ae" stroke-width="0.8" stroke-opacity="0.8" stroke-linejoin="round" stroke-linecap="round"/>
<polyline points="60.0,500.0 75.0,520.0 95.0,540.0 110.0,560.0 130.0,580.0 150.0,600.0" fill="none" stroke="#a7a2ae" stroke-width="0.8" stroke-opacity="0.8" stroke-linejoin="round" stroke-linecap="round"/>
<polyline points="0.0,590.0 30.0,600.0 60.0,610.0 90.0,615.0 120.0,625.0" fill="none" stroke="#a7a2ae" stroke-width="0.8" stroke-opacity="0.8" stroke-linejoin="round" stroke-linecap="round"/>
<polyline points="210.0,580.0 240.0,590.0 270.0,600.0 300.0,610.0" fill="none" stroke="#a7a2ae" stroke-width="0.8" stroke-opacity="0.8" stroke-linejoin="round" stroke-linecap="round"/>
<polyline points="0.0,470.0 20.0,490.0 25.0,520.0 10.0,540.0" fill="none" stroke="#a7a2ae" stroke-width="0.8" stroke-opacity="0.8" stroke-linejoin="round" stroke-linecap="round"/>
<polyline points="260.0,480.0 270.0,520.0 300.0,520.0" fill="none" stroke="#a7a2ae" stroke-width="0.8" stroke-opacity="0.8" stroke-linejoin="round" stroke-linecap="round"/>
<polyline points="0.0,89.4 35.8,100.6 62.6,116.0 102.8,120.7 147.5,107.3 187.7,80.5 205.6,71.5 241.4,67.0 272.7,66.2" fill="none" stroke="#ffffff" stroke-width="2.4" stroke-opacity="0.5" stroke-linejoin="round" stroke-linecap="round"/>
<polyline points="0.0,89.4 35.8,100.6 62.6,116.0 102.8,120.7 147.5,107.3 187.7,80.5 205.6,71.5 241.4,67.0 272.7,66.2" fill="none" stroke="#e8a3a8" stroke-width="1.1" stroke-opacity="0.95" stroke-linejoin="round" stroke-linecap="round"/>
<polyline points="39.3,219.0 53.6,178.8 71.5,147.5 98.3,129.6" fill="none" stroke="#ffffff" stroke-width="2.4" stroke-opacity="0.5" stroke-linejoin="round" stroke-linecap="round"/>
<polyline points="39.3,219.0 53.6,178.8 71.5,147.5 98.3,129.6" fill="none" stroke="#e8a3a8" stroke-width="1.1" stroke-opacity="0.95" stroke-linejoin="round" stroke-linecap="round"/>
<polyline points="98.3,129.6 134.0,116.0 164.5,91.6" fill="none" stroke="#ffffff" stroke-width="2.4" stroke-opacity="0.5" stroke-linejoin="round" stroke-linecap="round"/>
<polyline points="98.3,129.6 134.0,116.0 164.5,91.6" fill="none" stroke="#e8a3a8" stroke-width="1.1" stroke-opacity="0.95" stroke-linejoin="round" stroke-linecap="round"/>
<polyline points="39.3,219.0 89.4,232.5 156.5,232.5 223.5,228.0 299.5,223.5" fill="none" stroke="#ffffff" stroke-width="2.4" stroke-opacity="0.5" stroke-linejoin="round" stroke-linecap="round"/>
<polyline points="39.3,219.0 89.4,232.5 156.5,232.5 223.5,228.0 299.5,223.5" fill="none" stroke="#e8a3a8" stroke-width="1.1" stroke-opacity="0.95" stroke-linejoin="round" stroke-linecap="round"/>
<polyline points="272.7,66.2 275.0,111.8 282.5,145.3 277.0,178.8 272.7,223.5 268.0,268.0 263.7,322.0" fill="none" stroke="#ffffff" stroke-width="2.4" stroke-opacity="0.5" stroke-linejoin="round" stroke-linecap="round"/>
<polyline points="272.7,66.2 275.0,111.8 282.5,145.3 277.0,178.8 272.7,223.5 268.0,268.0 263.7,322.0" fill="none" stroke="#e8a3a8" stroke-width="1.1" stroke-opacity="0.95" stroke-linejoin="round" stroke-linecap="round"/>
<polyline points="164.5,91.6 170.0,134.0 147.5,170.0 123.0,203.4" fill="none" stroke="#ffffff" stroke-width="2.4" stroke-opacity="0.5" stroke-linejoin="round" stroke-linecap="round"/>
<polyline points="164.5,91.6 170.0,134.0 147.5,170.0 123.0,203.4" fill="none" stroke="#e8a3a8" stroke-width="1.1" stroke-opacity="0.95" stroke-linejoin="round" stroke-linecap="round"/>
<polyline points="123.0,203.4 134.0,232.5 135.0,261.5 129.6,290.6 116.0,322.0" fill="none" stroke="#ffffff" stroke-width="2.4" stroke-opacity="0.5" stroke-linejoin="round" stroke-linecap="round"/>
<polyline points="123.0,203.4 134.0,232.5 135.0,261.5 129.6,290.6 116.0,322.0" fill="none" stroke="#e8a3a8" stroke-width="1.1" stroke-opacity="0.95" stroke-linejoin="round" stroke-linecap="round"/>
<polyline points="39.3,219.0 53.6,250.3 80.5,275.8 102.8,313.0" fill="none" stroke="#ffffff" stroke-width="2.4" stroke-opacity="0.5" stroke-linejoin="round" stroke-linecap="round"/>
<polyline points="39.3,219.0 53.6,250.3 80.5,275.8 102.8,313.0" fill="none" stroke="#e8a3a8" stroke-width="1.1" stroke-opacity="0.95" stroke-linejoin="round" stroke-linecap="round"/>
<polyline points="39.3,219.0 26.8,268.0 17.9,322.0 10.0,345.0" fill="none" stroke="#ffffff" stroke-width="2.4" stroke-opacity="0.5" stroke-linejoin="round" stroke-linecap="round"/>
<polyline points="39.3,219.0 26.8,268.0 17.9,322.0 10.0,345.0" fill="none" stroke="#e8a3a8" stroke-width="1.1" stroke-opacity="0.95" stroke-linejoin="round" stroke-linecap="round"/>
<polyline points="39.3,219.0 0.0,210.0" fill="none" stroke="#ffffff" stroke-width="2.4" stroke-opacity="0.5" stroke-linejoin="round" stroke-linecap="round"/>
<polyline points="39.3,219.0 0.0,210.0" fill="none" stroke="#e8a3a8" stroke-width="1.1" stroke-opacity="0.95" stroke-linejoin="round" stroke-linecap="round"/>
<polyline points="39.3,219.0 31.0,170.0 22.0,134.0 0.0,107.0" fill="none" stroke="#ffffff" stroke-width="2.4" stroke-opacity="0.5" stroke-linejoin="round" stroke-linecap="round"/>
<polyline points="39.3,219.0 31.0,170.0 22.0,134.0 0.0,107.0" fill="none" stroke="#e8a3a8" stroke-width="1.1" stroke-opacity="0.95" stroke-linejoin="round" stroke-linecap="round"/>
<polyline points="196.7,232.5 214.6,268.0 252.6,275.0 299.5,290.6" fill="none" stroke="#ffffff" stroke-width="2.4" stroke-opacity="0.5" stroke-linejoin="round" stroke-linecap="round"/>
<polyline points="196.7,232.5 214.6,268.0 252.6,275.0 299.5,290.6" fill="none" stroke="#e8a3a8" stroke-width="1.1" stroke-opacity="0.95" stroke-linejoin="round" stroke-linecap="round"/>
<polyline points="203.4,69.3 210.0,102.8 232.5,129.6 246.0,178.8 250.3,223.5" fill="none" stroke="#ffffff" stroke-width="2.4" stroke-opacity="0.5" stroke-linejoin="round" stroke-linecap="round"/>
<polyline points="203.4,69.3 210.0,102.8 232.5,129.6 246.0,178.8 250.3,223.5" fill="none" stroke="#e8a3a8" stroke-width="1.1" stroke-opacity="0.95" stroke-linejoin="round" stroke-linecap="round"/>
<polyline points="135.0,261.5 170.0,250.3 196.7,232.5" fill="none" stroke="#ffffff" stroke-width="2.4" stroke-opacity="0.5" stroke-linejoin="round" stroke-linecap="round"/>
<polyline points="135.0,261.5 170.0,250.3 196.7,232.5" fill="none" stroke="#e8a3a8" stroke-width="1.1" stroke-opacity="0.95" stroke-linejoin="round" stroke-linecap="round"/>
<polyline points="80.5,275.8 134.0,290.0 179.0,286.0 232.0,308.0 252.6,275.0" fill="none" stroke="#ffffff" stroke-width="2.4" stroke-opacity="0.5" stroke-linejoin="round" stroke-linecap="round"/>
<polyline points="80.5,275.8 134.0,290.0 179.0,286.0 232.0,308.0 252.6,275.0" fill="none" stroke="#e8a3a8" stroke-width="1.1" stroke-opacity="0.95" stroke-linejoin="round" stroke-linecap="round"/>
<polyline points="123.0,203.4 90.0,200.0 60.0,190.0 39.3,219.0" fill="none" stroke="#ffffff" stroke-width="2.4" stroke-opacity="0.5" stroke-linejoin="round" stroke-linecap="round"/>
<polyline points="123.0,203.4 90.0,200.0 60.0,190.0 39.3,219.0" fill="none" stroke="#e8a3a8" stroke-width="1.1" stroke-opacity="0.95" stroke-linejoin="round" stroke-linecap="round"/>
<polyline points="196.7,232.5 185.0,270.0 194.4,292.6 205.6,317.6 211.0,342.6 216.7,364.8 230.0,390.0" fill="none" stroke="#ffffff" stroke-width="2.4" stroke-opacity="0.5" stroke-linejoin="round" stroke-linecap="round"/>
<polyline points="196.7,232.5 185.0,270.0 194.4,292.6 205.6,317.6 211.0,342.6 216.7,364.8 230.0,390.0" fill="none" stroke="#e8a3a8" stroke-width="1.1" stroke-opacity="0.95" stroke-linejoin="round" stroke-linecap="round"/>
<polyline points="0.0,335.0 40.0,345.0 80.0,345.0 110.0,340.0 130.0,335.0" fill="none" stroke="#ffffff" stroke-width="2.4" stroke-opacity="0.5" stroke-linejoin="round" stroke-linecap="round"/>
<polyline points="0.0,335.0 40.0,345.0 80.0,345.0 110.0,340.0 130.0,335.0" fill="none" stroke="#e8a3a8" stroke-width="1.1" stroke-opacity="0.95" stroke-linejoin="round" stroke-linecap="round"/>
<polyline points="0.0,390.0 30.0,380.0 60.0,375.0 80.0,365.0 108.0,345.0" fill="none" stroke="#ffffff" stroke-width="2.4" stroke-opacity="0.5" stroke-linejoin="round" stroke-linecap="round"/>
<polyline points="0.0,390.0 30.0,380.0 60.0,375.0 80.0,365.0 108.0,345.0" fill="none" stroke="#e8a3a8" stroke-width="1.1" stroke-opacity="0.95" stroke-linejoin="round" stroke-linecap="round"/>
<polyline points="111.0,370.0 100.0,390.0 85.2,396.0" fill="none" stroke="#ffffff" stroke-width="2.4" stroke-opacity="0.5" stroke-linejoin="round" stroke-linecap="round"/>
<polyline points="111.0,370.0 100.0,390.0 85.2,396.0" fill="none" stroke="#e8a3a8" stroke-width="1.1" stroke-opacity="0.95" stroke-linejoin="round" stroke-linecap="round"/>
<polyline points="85.2,396.0 60.0,410.0 41.7,421.0 20.0,425.0 0.0,422.6" fill="none" stroke="#ffffff" stroke-width="2.4" stroke-opacity="0.5" stroke-linejoin="round" stroke-linecap="round"/>
<polyline points="85.2,396.0 60.0,410.0 41.7,421.0 20.0,425.0 0.0,422.6" fill="none" stroke="#e8a3a8" stroke-width="1.1" stroke-opacity="0.95" stroke-linejoin="round" stroke-linecap="round"/>
<polyline points="85.2,396.0 97.2,436.4 91.7,483.7 97.2,511.4 105.6,547.6" fill="none" stroke="#ffffff" stroke-width="2.4" stroke-opacity="0.5" stroke-linejoin="round" stroke-linecap="round"/>
<polyline points="85.2,396.0 97.2,436.4 91.7,483.7 97.2,511.4 105.6,547.6" fill="none" stroke="#e8a3a8" stroke-width="1.1" stroke-opacity="0.95" stroke-linejoin="round" stroke-linecap="round"/>
<polyline points="85.2,396.0 133.3,394.8 147.0,399.0 194.4,397.6 259.0,414.0 300.0,425.0" fill="none" stroke="#ffffff" stroke-width="2.4" stroke-opacity="0.5" stroke-linejoin="round" stroke-linecap="round"/>
<polyline points="85.2,396.0 133.3,394.8 147.0,399.0 194.4,397.6 259.0,414.0 300.0,425.0" fill="none" stroke="#e8a3a8" stroke-width="1.1" stroke-opacity="0.95" stroke-linejoin="round" stroke-linecap="round"/>
<polyline points="85.2,396.0 111.0,422.6 145.0,440.0 177.8,458.7 188.9,458.7" fill="none" stroke="#ffffff" stroke-width="2.4" stroke-opacity="0.5" stroke-linejoin="round" stroke-linecap="round"/>
<polyline points="85.2,396.0 111.0,422.6 145.0,440.0 177.8,458.7 188.9,458.7" fill="none" stroke="#e8a3a8" stroke-width="1.1" stroke-opacity="0.95" stroke-linejoin="round" stroke-linecap="round"/>
<polyline points="188.9,467.0 177.8,511.4 174.0,527.4" fill="none" stroke="#ffffff" stroke-width="2.4" stroke-opacity="0.5" stroke-linejoin="round" stroke-linecap="round"/>
<polyline points="188.9,467.0 177.8,511.4 174.0,527.4" fill="none" stroke="#e8a3a8" stroke-width="1.1" stroke-opacity="0.95" stroke-linejoin="round" stroke-linecap="round"/>
<polyline points="188.9,458.7 216.7,436.4 236.0,422.6 259.0,414.0" fill="none" stroke="#ffffff" stroke-width="2.4" stroke-opacity="0.5" stroke-linejoin="round" stroke-linecap="round"/>
<polyline points="188.9,458.7 216.7,436.4 236.0,422.6 259.0,414.0" fill="none" stroke="#e8a3a8" stroke-width="1.1" stroke-opacity="0.95" stroke-linejoin="round" stroke-linecap="round"/>
<polyline points="259.0,414.0 269.0,456.5 283.3,470.0 295.0,480.0" fill="none" stroke="#ffffff" stroke-width="2.4" stroke-opacity="0.5" stroke-linejoin="round" stroke-linecap="round"/>
<polyline points="259.0,414.0 269.0,456.5 283.3,470.0 295.0,480.0" fill="none" stroke="#e8a3a8" stroke-width="1.1" stroke-opacity="0.95" stroke-linejoin="round" stroke-linecap="round"/>
<polyline points="174.0,527.4 125.0,522.6 83.3,531.0 27.8,533.7 0.0,539.0" fill="none" stroke="#ffffff" stroke-width="2.4" stroke-opacity="0.5" stroke-linejoin="round" stroke-linecap="round"/>
<polyline points="174.0,527.4 125.0,522.6 83.3,531.0 27.8,533.7 0.0,539.0" fill="none" stroke="#e8a3a8" stroke-width="1.1" stroke-opacity="0.95" stroke-linejoin="round" stroke-linecap="round"/>
<polyline points="174.0,527.4 207.6,531.0 227.8,559.7 260.0,570.0 296.0,577.6" fill="none" stroke="#ffffff" stroke-width="2.4" stroke-opacity="0.5" stroke-linejoin="round" stroke-linecap="round"/>
<polyline points="174.0,527.4 207.6,531.0 227.8,559.7 260.0,570.0 296.0,577.6" fill="none" stroke="#e8a3a8" stroke-width="1.1" stroke-opacity="0.95" stroke-linejoin="round" stroke-linecap="round"/>
<polyline points="207.6,531.0 250.0,506.0 277.8,483.7 300.0,450.0" fill="none" stroke="#ffffff" stroke-width="2.4" stroke-opacity="0.5" stroke-linejoin="round" stroke-linecap="round"/>
<polyline points="207.6,531.0 250.0,506.0 277.8,483.7 300.0,450.0" fill="none" stroke="#e8a3a8" stroke-width="1.1" stroke-opacity="0.95" stroke-linejoin="round" stroke-linecap="round"/>
<polyline points="174.0,527.4 166.7,561.4 160.0,600.0 150.0,645.0" fill="none" stroke="#ffffff" stroke-width="2.4" stroke-opacity="0.5" stroke-linejoin="round" stroke-linecap="round"/>
<polyline points="174.0,527.4 166.7,561.4 160.0,600.0 150.0,645.0" fill="none" stroke="#e8a3a8" stroke-width="1.1" stroke-opacity="0.95" stroke-linejoin="round" stroke-linecap="round"/>
<polyline points="9.0,573.0 45.0,580.0 80.0,600.0 115.0,610.0 140.0,630.0" fill="none" stroke="#ffffff" stroke-width="2.4" stroke-opacity="0.5" stroke-linejoin="round" stroke-linecap="round"/>
<polyline points="9.0,573.0 45.0,580.0 80.0,600.0 115.0,610.0 140.0,630.0" fill="none" stroke="#e8a3a8" stroke-width="1.1" stroke-opacity="0.95" stroke-linejoin="round" stroke-linecap="round"/>
<polyline points="183.9,592.4 210.0,600.0 240.0,625.0 270.0,640.0" fill="none" stroke="#ffffff" stroke-width="2.4" stroke-opacity="0.5" stroke-linejoin="round" stroke-linecap="round"/>
<polyline points="183.9,592.4 210.0,600.0 240.0,625.0 270.0,640.0" fill="none" stroke="#e8a3a8" stroke-width="1.1" stroke-opacity="0.95" stroke-linejoin="round" stroke-linecap="round"/>
<polyline points="296.0,577.6 260.0,600.0 230.0,625.0" fill="none" stroke="#ffffff" stroke-width="2.4" stroke-opacity="0.5" stroke-linejoin="round" stroke-linecap="round"/>
<polyline points="296.0,577.6 260.0,600.0 230.0,625.0" fill="none" stroke="#e8a3a8" stroke-width="1.1" stroke-opacity="0.95" stroke-linejoin="round" stroke-linecap="round"/>
<polyline points="41.7,421.0 50.0,450.0 55.0,480.0 80.0,488.0" fill="none" stroke="#ffffff" stroke-width="2.4" stroke-opacity="0.5" stroke-linejoin="round" stroke-linecap="round"/>
<polyline points="41.7,421.0 50.0,450.0 55.0,480.0 80.0,488.0" fill="none" stroke="#e8a3a8" stroke-width="1.1" stroke-opacity="0.95" stroke-linejoin="round" stroke-linecap="round"/>
<polyline points="80.0,488.0 110.0,480.0 140.0,470.0 177.8,458.7" fill="none" stroke="#ffffff" stroke-width="2.4" stroke-opacity="0.5" stroke-linejoin="round" stroke-linecap="round"/>
<polyline points="80.0,488.0 110.0,480.0 140.0,470.0 177.8,458.7" fill="none" stroke="#e8a3a8" stroke-width="1.1" stroke-opacity="0.95" stroke-linejoin="round" stroke-linecap="round"/>
<polyline points="0.0,470.0 30.0,480.0 60.0,500.0 75.0,520.0" fill="none" stroke="#ffffff" stroke-width="2.4" stroke-opacity="0.5" stroke-linejoin="round" stroke-linecap="round"/>
<polyline points="0.0,470.0 30.0,480.0 60.0,500.0 75.0,520.0" fill="none" stroke="#e8a3a8" stroke-width="1.1" stroke-opacity="0.95" stroke-linejoin="round" stroke-linecap="round"/>
<polyline points="232.0,456.5 250.0,470.0 269.0,456.5" fill="none" stroke="#ffffff" stroke-width="2.4" stroke-opacity="0.5" stroke-linejoin="round" stroke-linecap="round"/>
<polyline points="232.0,456.5 250.0,470.0 269.0,456.5" fill="none" stroke="#e8a3a8" stroke-width="1.1" stroke-opacity="0.95" stroke-linejoin="round" stroke-linecap="round"/>
<polyline points="0.0,620.0 40.0,630.0 90.0,640.0" fill="none" stroke="#ffffff" stroke-width="2.4" stroke-opacity="0.5" stroke-linejoin="round" stroke-linecap="round"/>
<polyline points="0.0,620.0 40.0,630.0 90.0,640.0" fill="none" stroke="#e8a3a8" stroke-width="1.1" stroke-opacity="0.95" stroke-linejoin="round" stroke-linecap="round"/>
<polygon points="0.0,0.0 0.0,71.9 10.4,72.9 22.9,77.0 31.2,70.8 41.7,66.7 50.0,62.5 52.0,70.8 48.0,79.0 41.7,85.4 38.5,91.7 47.9,97.9 60.4,102.0 68.8,108.3 75.0,113.5 87.5,108.3 97.9,106.2 112.5,100.0 125.0,95.8 137.5,92.7 150.0,85.4 162.5,82.3 175.0,72.9 183.3,64.6 191.7,58.3 204.0,52.0 216.7,47.9 233.3,44.8 245.8,42.7 262.5,42.7 267.7,49.0 270.8,60.4 275.0,66.7 285.4,75.0 295.8,79.2 300.0,80.2 300.0,0.0" fill="#aad3df"/>
<polygon points="62.0,118.0 75.0,116.0 82.0,120.0 88.0,118.0 94.0,122.0 92.0,133.0 80.0,132.0 70.0,128.0 62.0,125.0" fill="#aad3df"/>
<ellipse cx="192" cy="551" rx="4" ry="8" fill="#aad3df"/>
<ellipse cx="255" cy="609" rx="8" ry="3" transform="rotate(-30 255 609)" fill="#aad3df"/>
<ellipse cx="5" cy="150" rx="3" ry="5" fill="#aad3df"/>
<polygon points="101.0,5.5 113.0,15.0 118.5,18.0 117.0,28.0 109.0,26.0 98.0,20.0 98.0,12.0" fill="#eef0de" stroke="#c9c3a8" stroke-width="0.6"/>
<polyline points="2.0,0.0 6.2,10.4 12.5,14.6 42.7,14.6 72.9,13.0 82.3,1.0" fill="none" stroke="#a095b0" stroke-width="1.3" stroke-opacity="0.9" stroke-linejoin="round" stroke-linecap="round"/>
<polyline points="81.2,-2.0 81.2,20.8 87.5,35.4 104.0,43.8 120.8,41.7 131.2,31.2 136.5,12.5 137.5,-2.0" fill="none" stroke="#a095b0" stroke-width="1.3" stroke-opacity="0.9" stroke-linejoin="round" stroke-linecap="round"/>
<polyline points="0.0,46.9 11.5,41.7 42.7,37.5 60.4,45.8 66.7,54.2 68.8,70.8 71.9,83.3 75.0,95.8 76.0,104.0" fill="none" stroke="#a095b0" stroke-width="1.3" stroke-opacity="0.9" stroke-linejoin="round" stroke-linecap="round"/>
<polyline points="0.0,54.2 11.5,49.0" fill="none" stroke="#a095b0" stroke-width="1.3" stroke-opacity="0.9" stroke-linejoin="round" stroke-linecap="round"/>
<polyline points="77.0,95.8 93.8,89.6 125.0,79.2 150.0,71.9 170.8,56.2 191.7,41.7 212.5,34.4 237.5,26.7 262.5,26.0 279.0,33.3 300.0,50.0" fill="none" stroke="#a095b0" stroke-width="1.3" stroke-opacity="0.9" stroke-linejoin="round" stroke-linecap="round"/>
<polyline points="76.0,104.0 78.2,116.0 85.0,156.5 73.8,187.7 96.0,210.0 91.6,237.0 96.0,268.0 109.5,304.0 112.0,322.0 108.3,331.4" fill="none" stroke="#c9c0d4" stroke-width="4" stroke-opacity="0.5" stroke-linejoin="round" stroke-linecap="round"/>
<polyline points="76.0,104.0 78.2,116.0 85.0,156.5 73.8,187.7 96.0,210.0 91.6,237.0 96.0,268.0 109.5,304.0 112.0,322.0 108.3,331.4" fill="none" stroke="#9d93ab" stroke-width="1.3" stroke-opacity="0.9" stroke-linejoin="round" stroke-linecap="round"/>
<polyline points="0.0,369.0 22.4,362.0 49.3,349.0 80.7,331.0 103.0,326.5 116.6,333.0 134.5,331.0 157.0,340.0 170.4,349.0 179.4,364.6 192.8,375.8 210.8,371.3 219.7,380.3 242.0,384.8 264.6,389.0 278.0,407.0 287.0,416.0 300.0,425.0" fill="none" stroke="#c9c0d4" stroke-width="4" stroke-opacity="0.5" stroke-linejoin="round" stroke-linecap="round"/>
<polyline points="0.0,369.0 22.4,362.0 49.3,349.0 80.7,331.0 103.0,326.5 116.6,333.0 134.5,331.0 157.0,340.0 170.4,349.0 179.4,364.6 192.8,375.8 210.8,371.3 219.7,380.3 242.0,384.8 264.6,389.0 278.0,407.0 287.0,416.0 300.0,425.0" fill="none" stroke="#9d93ab" stroke-width="1.3" stroke-opacity="0.9" stroke-linejoin="round" stroke-linecap="round"/>
<polyline points="0.0,434.0 18.0,452.0 40.4,479.0 58.3,501.4 76.0,503.6 103.0,479.0 134.5,474.5 161.4,483.4 188.3,488.0 201.8,492.4 206.3,505.9" fill="none" stroke="#c9c0d4" stroke-width="4" stroke-opacity="0.5" stroke-linejoin="round" stroke-linecap="round"/>
<polyline points="0.0,434.0 18.0,452.0 40.4,479.0 58.3,501.4 76.0,503.6 103.0,479.0 134.5,474.5 161.4,483.4 188.3,488.0 201.8,492.4 206.3,505.9" fill="none" stroke="#9d93ab" stroke-width="1.3" stroke-opacity="0.9" stroke-linejoin="round" stroke-linecap="round"/>
<polyline points="206.3,492.4 224.2,488.0 251.0,465.5 269.0,443.0 287.0,434.0 300.0,429.6" fill="none" stroke="#c9c0d4" stroke-width="4" stroke-opacity="0.5" stroke-linejoin="round" stroke-linecap="round"/>
<polyline points="206.3,492.4 224.2,488.0 251.0,465.5 269.0,443.0 287.0,434.0 300.0,429.6" fill="none" stroke="#9d93ab" stroke-width="1.3" stroke-opacity="0.9" stroke-linejoin="round" stroke-linecap="round"/>
<polyline points="206.3,505.9 210.8,532.8 206.3,546.0 224.2,555.0 251.0,559.7 269.0,550.7 300.0,541.7" fill="none" stroke="#c9c0d4" stroke-width="4" stroke-opacity="0.5" stroke-linejoin="round" stroke-linecap="round"/>
<polyline points="206.3,505.9 210.8,532.8 206.3,546.0 224.2,555.0 251.0,559.7 269.0,550.7 300.0,541.7" fill="none" stroke="#9d93ab" stroke-width="1.3" stroke-opacity="0.9" stroke-linejoin="round" stroke-linecap="round"/>
<polyline points="206.3,546.0 188.3,555.0 179.4,573.0 183.9,595.5 174.9,613.5 166.0,636.0 160.0,645.0" fill="none" stroke="#c9c0d4" stroke-width="4" stroke-opacity="0.5" stroke-linejoin="round" stroke-linecap="round"/>
<polyline points="206.3,546.0 188.3,555.0 179.4,573.0 183.9,595.5 174.9,613.5 166.0,636.0 160.0,645.0" fill="none" stroke="#9d93ab" stroke-width="1.3" stroke-opacity="0.9" stroke-linejoin="round" stroke-linecap="round"/>
<polyline points="0.0,520.0 9.6,535.8 21.6,555.0 16.8,574.0 0.0,576.6" fill="none" stroke="#c9c0d4" stroke-width="4" stroke-opacity="0.5" stroke-linejoin="round" stroke-linecap="round"/>
<polyline points="0.0,520.0 9.6,535.8 21.6,555.0 16.8,574.0 0.0,576.6" fill="none" stroke="#9d93ab" stroke-width="1.3" stroke-opacity="0.9" stroke-linejoin="round" stroke-linecap="round"/>
<circle cx="39.3" cy="219" r="3.3" fill="#fff" stroke="#444" stroke-width="1.2"/><circle cx="39.3" cy="219" r="1.3" fill="#333"/>
<circle cx="203.4" cy="69.3" r="1.8" fill="#fff" stroke="#777" stroke-width="0.9"/>
<circle cx="272.7" cy="66.2" r="1.8" fill="#fff" stroke="#777" stroke-width="0.9"/>
<circle cx="164.5" cy="91.6" r="1.8" fill="#fff" stroke="#777" stroke-width="0.9"/>
<circle cx="282.5" cy="145.3" r="1.8" fill="#fff" stroke="#777" stroke-width="0.9"/>
<circle cx="123" cy="203.4" r="1.8" fill="#fff" stroke="#777" stroke-width="0.9"/>
<circle cx="135" cy="261.5" r="1.8" fill="#fff" stroke="#777" stroke-width="0.9"/>
<circle cx="252.6" cy="275" r="1.8" fill="#fff" stroke="#777" stroke-width="0.9"/>
<circle cx="80.5" cy="275.8" r="1.8" fill="#fff" stroke="#777" stroke-width="0.9"/>
<circle cx="20" cy="228" r="1.8" fill="#fff" stroke="#777" stroke-width="0.9"/>
<circle cx="18" cy="342" r="1.8" fill="#fff" stroke="#777" stroke-width="0.9"/>
<circle cx="85.2" cy="396" r="3.3" fill="#fff" stroke="#444" stroke-width="1.2"/><circle cx="85.2" cy="396" r="1.3" fill="#333"/>
<circle cx="147" cy="399" r="1.8" fill="#fff" stroke="#777" stroke-width="0.9"/>
<circle cx="259" cy="414" r="1.8" fill="#fff" stroke="#777" stroke-width="0.9"/>
<circle cx="232" cy="456.5" r="1.8" fill="#fff" stroke="#777" stroke-width="0.9"/>
<circle cx="269" cy="456.5" r="1.8" fill="#fff" stroke="#777" stroke-width="0.9"/>
<circle cx="174" cy="527.4" r="3.3" fill="#fff" stroke="#444" stroke-width="1.2"/><circle cx="174" cy="527.4" r="1.3" fill="#333"/>
<circle cx="207.6" cy="531" r="3.3" fill="#fff" stroke="#444" stroke-width="1.2"/><circle cx="207.6" cy="531" r="1.3" fill="#333"/>
<circle cx="227.8" cy="559.7" r="1.8" fill="#fff" stroke="#777" stroke-width="0.9"/>
<circle cx="183.9" cy="592.4" r="1.8" fill="#fff" stroke="#777" stroke-width="0.9"/>
<circle cx="9" cy="573" r="1.8" fill="#fff" stroke="#777" stroke-width="0.9"/>
<circle cx="296" cy="577.6" r="3.3" fill="#fff" stroke="#444" stroke-width="1.2"/><circle cx="296" cy="577.6" r="1.3" fill="#333"/>
<text x="189" y="67" font-size="10" fill="#333333" stroke="#f4f4ef" stroke-width="2.2" stroke-opacity="0.8" paint-order="stroke" textLength="30.5" lengthAdjust="spacingAndGlyphs" font-family="Liberation Sans">Słupsk</text>
<text x="257" y="62" font-size="10.5" fill="#333333" stroke="#f4f4ef" stroke-width="2.2" stroke-opacity="0.8" paint-order="stroke" textLength="32" lengthAdjust="spacingAndGlyphs" font-family="Liberation Sans">Gdynia</text>
<text x="146.4" y="103" font-size="10.5" fill="#333333" stroke="#f4f4ef" stroke-width="2.2" stroke-opacity="0.8" paint-order="stroke" textLength="37.8" lengthAdjust="spacingAndGlyphs" font-family="Liberation Sans">Koszalin</text>
<text x="218" y="92" font-size="10" font-style="italic" fill="#756a88" stroke="#f4f4ef" stroke-width="2" stroke-opacity="0.8" paint-order="stroke" textLength="59.8" lengthAdjust="spacingAndGlyphs" font-family="Liberation Sans">województwo</text>
<text x="225" y="104" font-size="10" font-style="italic" fill="#756a88" stroke="#f4f4ef" stroke-width="2" stroke-opacity="0.8" paint-order="stroke" textLength="45.8" lengthAdjust="spacingAndGlyphs" font-family="Liberation Sans">pomorskie</text>
<text x="0" y="101" font-size="10" font-style="italic" fill="#756a88" stroke="#f4f4ef" stroke-width="2" stroke-opacity="0.8" paint-order="stroke" textLength="33" lengthAdjust="spacingAndGlyphs" font-family="Liberation Sans">enburg-</text>
<text x="0" y="112" font-size="10" font-style="italic" fill="#756a88" stroke="#f4f4ef" stroke-width="2" stroke-opacity="0.8" paint-order="stroke" textLength="33" lengthAdjust="spacingAndGlyphs" font-family="Liberation Sans">ommern</text>
<text x="107" y="136" font-size="10" font-style="italic" fill="#756a88" stroke="#f4f4ef" stroke-width="2" stroke-opacity="0.8" paint-order="stroke" textLength="58" lengthAdjust="spacingAndGlyphs" font-family="Liberation Sans">województwo</text>
<text x="90" y="147" font-size="10" font-style="italic" fill="#756a88" stroke="#f4f4ef" stroke-width="2" stroke-opacity="0.8" paint-order="stroke" textLength="92" lengthAdjust="spacingAndGlyphs" font-family="Liberation Sans">zachodniopomorskie</text>
<text x="258" y="142" font-size="10.5" fill="#333333" stroke="#f4f4ef" stroke-width="2.2" stroke-opacity="0.8" paint-order="stroke" textLength="42" lengthAdjust="spacingAndGlyphs" font-family="Liberation Sans">Grudziąc</text>
<text x="105.6" y="187.5" font-size="10.5" fill="#333333" stroke="#f4f4ef" stroke-width="2.2" stroke-opacity="0.8" paint-order="stroke" textLength="34.4" lengthAdjust="spacingAndGlyphs" font-family="Liberation Sans">Gorzów</text>
<text x="93" y="199" font-size="10.5" fill="#333333" stroke="#f4f4ef" stroke-width="2.2" stroke-opacity="0.8" paint-order="stroke" textLength="59" lengthAdjust="spacingAndGlyphs" font-family="Liberation Sans">Wielkopolski</text>
<text x="241.4" y="171.5" font-size="10" font-style="italic" fill="#756a88" stroke="#f4f4ef" stroke-width="2" stroke-opacity="0.8" paint-order="stroke" textLength="58.6" lengthAdjust="spacingAndGlyphs" font-family="Liberation Sans">województwo</text>
<text x="248" y="184.5" font-size="10" font-style="italic" fill="#756a88" stroke="#f4f4ef" stroke-width="2" stroke-opacity="0.8" paint-order="stroke" textLength="45" lengthAdjust="spacingAndGlyphs" font-family="Liberation Sans">kujawsko-</text>
<text x="248" y="196" font-size="10" font-style="italic" fill="#756a88" stroke="#f4f4ef" stroke-width="2" stroke-opacity="0.8" paint-order="stroke" textLength="45" lengthAdjust="spacingAndGlyphs" font-family="Liberation Sans">pomorskie</text>
<text x="22" y="214" font-size="12.5" fill="#333333" stroke="#f4f4ef" stroke-width="2.2" stroke-opacity="0.8" paint-order="stroke" textLength="32" lengthAdjust="spacingAndGlyphs" font-family="Liberation Sans">Berlin</text>
<text x="2.8" y="240" font-size="10.5" fill="#333333" stroke="#f4f4ef" stroke-width="2.2" stroke-opacity="0.8" paint-order="stroke" textLength="41.2" lengthAdjust="spacingAndGlyphs" font-family="Liberation Sans">Potsdam</text>
<text x="94" y="238.5" font-size="10" font-style="italic" fill="#756a88" stroke="#f4f4ef" stroke-width="2" stroke-opacity="0.8" paint-order="stroke" textLength="59.6" lengthAdjust="spacingAndGlyphs" font-family="Liberation Sans">województwo</text>
<text x="106" y="249.5" font-size="10" font-style="italic" fill="#756a88" stroke="#f4f4ef" stroke-width="2" stroke-opacity="0.8" paint-order="stroke" textLength="36" lengthAdjust="spacingAndGlyphs" font-family="Liberation Sans">lubuskie</text>
<text x="186" y="227.5" font-size="10" font-style="italic" fill="#756a88" stroke="#f4f4ef" stroke-width="2" stroke-opacity="0.8" paint-order="stroke" textLength="59" lengthAdjust="spacingAndGlyphs" font-family="Liberation Sans">województwo</text>
<text x="186" y="239" font-size="10" font-style="italic" fill="#756a88" stroke="#f4f4ef" stroke-width="2" stroke-opacity="0.8" paint-order="stroke" textLength="59" lengthAdjust="spacingAndGlyphs" font-family="Liberation Sans">wielkopolskie</text>
<text x="283" y="261" font-size="13" fill="#5f5872" stroke="#f4f4ef" stroke-width="2" stroke-opacity="0.8" paint-order="stroke" textLength="17" lengthAdjust="spacingAndGlyphs" font-family="Liberation Sans">Pol</text>
<text x="117" y="274.5" font-size="10.5" fill="#333333" stroke="#f4f4ef" stroke-width="2.2" stroke-opacity="0.8" paint-order="stroke" textLength="34" lengthAdjust="spacingAndGlyphs" font-family="Liberation Sans">Zielona</text>
<text x="123" y="286" font-size="10.5" fill="#333333" stroke="#f4f4ef" stroke-width="2.2" stroke-opacity="0.8" paint-order="stroke" textLength="22" lengthAdjust="spacingAndGlyphs" font-family="Liberation Sans">Góra</text>
<text x="239.4" y="272.5" font-size="10.5" fill="#333333" stroke="#f4f4ef" stroke-width="2.2" stroke-opacity="0.8" paint-order="stroke" textLength="25.6" lengthAdjust="spacingAndGlyphs" font-family="Liberation Sans">Kalisz</text>
<text x="282" y="284" font-size="10" font-style="italic" fill="#756a88" stroke="#f4f4ef" stroke-width="2" stroke-opacity="0.8" paint-order="stroke" textLength="18" lengthAdjust="spacingAndGlyphs" font-family="Liberation Sans">woje</text>
<text x="63" y="288.5" font-size="10.5" fill="#333333" stroke="#f4f4ef" stroke-width="2.2" stroke-opacity="0.8" paint-order="stroke" textLength="36" lengthAdjust="spacingAndGlyphs" font-family="Liberation Sans">Cottbus</text>
<text x="55.6" y="300" font-size="10.5" fill="#333333" stroke="#f4f4ef" stroke-width="2.2" stroke-opacity="0.8" paint-order="stroke" textLength="51.4" lengthAdjust="spacingAndGlyphs" font-family="Liberation Sans">- Chóśebuz</text>
<text x="0" y="302" font-size="12" fill="#333333" stroke="#f4f4ef" stroke-width="2.2" stroke-opacity="0.8" paint-order="stroke" textLength="11.7" lengthAdjust="spacingAndGlyphs" font-family="Liberation Sans">zig</text>
<text x="143.6" y="334.5" font-size="10" font-style="italic" fill="#756a88" stroke="#f4f4ef" stroke-width="2" stroke-opacity="0.8" paint-order="stroke" textLength="59.2" lengthAdjust="spacingAndGlyphs" font-family="Liberation Sans">województwo</text>
<text x="146" y="345.5" font-size="10" font-style="italic" fill="#756a88" stroke="#f4f4ef" stroke-width="2" stroke-opacity="0.8" paint-order="stroke" textLength="54.6" lengthAdjust="spacingAndGlyphs" font-family="Liberation Sans">dolnośląskie</text>
<text x="26.4" y="339.5" font-size="10" font-style="italic" fill="#756a88" stroke="#f4f4ef" stroke-width="2" stroke-opacity="0.8" paint-order="stroke" textLength="35.6" lengthAdjust="spacingAndGlyphs" font-family="Liberation Sans">Sachsen</text>
<text x="97" y="344" font-size="10.5" fill="#333333" stroke="#f4f4ef" stroke-width="2.2" stroke-opacity="0.8" paint-order="stroke" textLength="34" lengthAdjust="spacingAndGlyphs" font-family="Liberation Sans">Liberec</text>
<text x="268.6" y="341.5" font-size="10.5" fill="#333333" stroke="#f4f4ef" stroke-width="2.2" stroke-opacity="0.8" paint-order="stroke" textLength="31.4" lengthAdjust="spacingAndGlyphs" font-family="Liberation Sans">Często</text>
<text x="0" y="355.5" font-size="10.5" fill="#333333" stroke="#f4f4ef" stroke-width="2.2" stroke-opacity="0.8" paint-order="stroke" textLength="38.9" lengthAdjust="spacingAndGlyphs" font-family="Liberation Sans">hemnitz</text>
<text x="211.7" y="360.5" font-size="10" font-style="italic" fill="#756a88" stroke="#f4f4ef" stroke-width="2" stroke-opacity="0.8" paint-order="stroke" textLength="59.7" lengthAdjust="spacingAndGlyphs" font-family="Liberation Sans">województwo</text>
<text x="223.6" y="371.5" font-size="10" font-style="italic" fill="#756a88" stroke="#f4f4ef" stroke-width="2" stroke-opacity="0.8" paint-order="stroke" textLength="36" lengthAdjust="spacingAndGlyphs" font-family="Liberation Sans">opolskie</text>
<text x="26.4" y="372.5" font-size="10" font-style="italic" fill="#756a88" stroke="#f4f4ef" stroke-width="2" stroke-opacity="0.8" paint-order="stroke" textLength="56.9" lengthAdjust="spacingAndGlyphs" font-family="Liberation Sans">Severozápad</text>
<text x="119.4" y="385" font-size="10" font-style="italic" fill="#756a88" stroke="#f4f4ef" stroke-width="2" stroke-opacity="0.8" paint-order="stroke" textLength="59.6" lengthAdjust="spacingAndGlyphs" font-family="Liberation Sans">Severovýchod</text>
<text x="69.4" y="390.5" font-size="12" fill="#333333" stroke="#f4f4ef" stroke-width="2.2" stroke-opacity="0.8" paint-order="stroke" textLength="32" lengthAdjust="spacingAndGlyphs" font-family="Liberation Sans">Praha</text>
<text x="152.8" y="403.5" font-size="10.5" fill="#333333" stroke="#f4f4ef" stroke-width="2.2" stroke-opacity="0.8" paint-order="stroke" textLength="45.2" lengthAdjust="spacingAndGlyphs" font-family="Liberation Sans">Pardubice</text>
<text x="243" y="410.5" font-size="10.5" fill="#333333" stroke="#f4f4ef" stroke-width="2.2" stroke-opacity="0.8" paint-order="stroke" textLength="36" lengthAdjust="spacingAndGlyphs" font-family="Liberation Sans">Ostrava</text>
<text x="118" y="422" font-size="13" fill="#5f5872" stroke="#f4f4ef" stroke-width="2" stroke-opacity="0.8" paint-order="stroke" textLength="35.3" lengthAdjust="spacingAndGlyphs" font-family="Liberation Sans">Česko</text>
<text x="25.6" y="430.5" font-size="10.5" fill="#333333" stroke="#f4f4ef" stroke-width="2.2" stroke-opacity="0.8" paint-order="stroke" textLength="24.4" lengthAdjust="spacingAndGlyphs" font-family="Liberation Sans">Plzeň</text>
<text x="182" y="430.5" font-size="10" font-style="italic" fill="#756a88" stroke="#f4f4ef" stroke-width="2" stroke-opacity="0.8" paint-order="stroke" textLength="67" lengthAdjust="spacingAndGlyphs" font-family="Liberation Sans">Střední Morava</text>
<text x="224.4" y="453" font-size="10.5" fill="#333333" stroke="#f4f4ef" stroke-width="2.2" stroke-opacity="0.8" paint-order="stroke" textLength="16.6" lengthAdjust="spacingAndGlyphs" font-family="Liberation Sans">Zlín</text>
<text x="269.4" y="453" font-size="10.5" fill="#333333" stroke="#f4f4ef" stroke-width="2.2" stroke-opacity="0.8" paint-order="stroke" textLength="24.6" lengthAdjust="spacingAndGlyphs" font-family="Liberation Sans">Žilina</text>
<text x="41.7" y="454" font-size="10" font-style="italic" fill="#756a88" stroke="#f4f4ef" stroke-width="2" stroke-opacity="0.8" paint-order="stroke" textLength="43.6" lengthAdjust="spacingAndGlyphs" font-family="Liberation Sans">Jihozápad</text>
<text x="139.4" y="460" font-size="10" font-style="italic" fill="#756a88" stroke="#f4f4ef" stroke-width="2" stroke-opacity="0.8" paint-order="stroke" textLength="43.9" lengthAdjust="spacingAndGlyphs" font-family="Liberation Sans">Jihovýchod</text>
<text x="74" y="488" font-size="10.5" fill="#333333" stroke="#f4f4ef" stroke-width="2.2" stroke-opacity="0.8" paint-order="stroke" textLength="27.4" lengthAdjust="spacingAndGlyphs" font-family="Liberation Sans">České</text>
<text x="62.5" y="500" font-size="10.5" fill="#333333" stroke="#f4f4ef" stroke-width="2.2" stroke-opacity="0.8" paint-order="stroke" textLength="50.5" lengthAdjust="spacingAndGlyphs" font-family="Liberation Sans">Budějovice</text>
<text x="293" y="500" font-size="12" fill="#333333" stroke="#f4f4ef" stroke-width="2.2" stroke-opacity="0.8" paint-order="stroke" textLength="7" lengthAdjust="spacingAndGlyphs" font-family="Liberation Sans">S</text>
<text x="159.7" y="521.5" font-size="12.5" fill="#333333" stroke="#f4f4ef" stroke-width="2.2" stroke-opacity="0.8" paint-order="stroke" textLength="28.3" lengthAdjust="spacingAndGlyphs" font-family="Liberation Sans">Wien</text>
<text x="213.9" y="535.5" font-size="12.5" fill="#333333" stroke="#f4f4ef" stroke-width="2.2" stroke-opacity="0.8" paint-order="stroke" textLength="54" lengthAdjust="spacingAndGlyphs" font-family="Liberation Sans">Bratislava</text>
<text x="16" y="537" font-size="10" font-style="italic" fill="#756a88" stroke="#f4f4ef" stroke-width="2" stroke-opacity="0.8" paint-order="stroke" textLength="65.4" lengthAdjust="spacingAndGlyphs" font-family="Liberation Sans">Oberosterreich</text>
<text x="220.8" y="558" font-size="10.5" fill="#333333" stroke="#f4f4ef" stroke-width="2.2" stroke-opacity="0.8" paint-order="stroke" textLength="22.2" lengthAdjust="spacingAndGlyphs" font-family="Liberation Sans">Győr</text>
<text x="2.2" y="565.5" font-size="10.5" fill="#333333" stroke="#f4f4ef" stroke-width="2.2" stroke-opacity="0.8" paint-order="stroke" textLength="40.8" lengthAdjust="spacingAndGlyphs" font-family="Liberation Sans">Salzburg</text>
<text x="69.4" y="566.5" font-size="13" fill="#5f5872" stroke="#f4f4ef" stroke-width="2" stroke-opacity="0.8" paint-order="stroke" textLength="62.6" lengthAdjust="spacingAndGlyphs" font-family="Liberation Sans">Österreich</text>
<text x="268.6" y="569" font-size="12" fill="#333333" stroke="#f4f4ef" stroke-width="2.2" stroke-opacity="0.8" paint-order="stroke" textLength="31.4" lengthAdjust="spacingAndGlyphs" font-family="Liberation Sans">Budap</text>
<text x="154.7" y="589.5" font-size="10.5" fill="#333333" stroke="#f4f4ef" stroke-width="2.2" stroke-opacity="0.8" paint-order="stroke" textLength="60.7" lengthAdjust="spacingAndGlyphs" font-family="Liberation Sans">Szombathely</text>
<text x="86.3" y="597.5" font-size="10" font-style="italic" fill="#756a88" stroke="#f4f4ef" stroke-width="2" stroke-opacity="0.8" paint-order="stroke" textLength="48" lengthAdjust="spacingAndGlyphs" font-family="Liberation Sans">Steiermark</text>
<text x="257.8" y="603" font-size="13" fill="#5f5872" stroke="#f4f4ef" stroke-width="2" stroke-opacity="0.8" paint-order="stroke" textLength="42.2" lengthAdjust="spacingAndGlyphs" font-family="Liberation Sans">Magyar</text>
<text x="207.4" y="619.5" font-size="10" font-style="italic" fill="#756a88" stroke="#f4f4ef" stroke-width="2" stroke-opacity="0.8" paint-order="stroke" textLength="40.8" lengthAdjust="spacingAndGlyphs" font-family="Liberation Sans">Dunántúl</text>
<text x="56.4" y="628.5" font-size="10" font-style="italic" fill="#756a88" stroke="#f4f4ef" stroke-width="2" stroke-opacity="0.8" paint-order="stroke" textLength="24" lengthAdjust="spacingAndGlyphs" font-family="Liberation Sans">rnten</text>
<text x="122.3" y="634" font-size="10.5" fill="#333333" stroke="#f4f4ef" stroke-width="2.2" stroke-opacity="0.8" paint-order="stroke" textLength="8.4" lengthAdjust="spacingAndGlyphs" font-family="Liberation Sans">M</text>
<rect x="75.4" y="392.4" width="17.5" height="10.3" fill="#ff8c1a" fill-opacity="0.45" stroke="#f5821f" stroke-width="2.2"/>
<rect x="34.3" y="417.4" width="8.6" height="6.1" fill="#ff8c1a" fill-opacity="0.45" stroke="#f5821f" stroke-width="2.2"/>
<rect x="144.0" y="381.0" width="12.8" height="13.0" fill="#ff8c1a" fill-opacity="0.45" stroke="#f5821f" stroke-width="2.2"/>
<rect x="144.6" y="395.8" width="8.0" height="13.8" fill="#ff8c1a" fill-opacity="0.45" stroke="#f5821f" stroke-width="2.2"/>
<rect x="255.0" y="410.0" width="10.7" height="13.5" fill="#ff8c1a" fill-opacity="0.45" stroke="#f5821f" stroke-width="2.2"/>
<rect x="212.7" y="427.0" width="3.0" height="10.7" fill="#ff8c1a" fill-opacity="0.45" stroke="#f5821f" stroke-width="2.2"/>
<rect x="180.0" y="452.0" width="13.4" height="13.4" fill="#ff8c1a" fill-opacity="0.45" stroke="#f5821f" stroke-width="2.2"/>
<rect x="84.0" y="473.0" width="9.0" height="7.0" fill="#ff8c1a" fill-opacity="0.45" stroke="#f5821f" stroke-width="2.2"/>
<rect x="107.4" y="345.0" width="8.3" height="7.7" fill="#ff8c1a" fill-opacity="0.45" stroke="#f5821f" stroke-width="2.2"/>
<rect x="61.5" y="353.5" width="13.3" height="6.1" fill="#ff8c1a" fill-opacity="0.45" stroke="#f5821f" stroke-width="2.2"/>
</svg>
<div class="a" style="left:10px;top:10px;width:34px;height:65px;border:2px solid rgba(0,0,0,0.2);border-radius:4px;background-clip:padding-box"></div>
<div class="a" style="left:12px;top:12px;width:30px;height:61px;background:#fff;border-radius:2px"></div>
<div class="a" style="left:12px;top:42px;width:30px;height:1px;background:#ccc"></div>
<div class="a" style="left:22px;top:25.5px;width:12px;height:3px;background:#000"></div><div class="a" style="left:26.5px;top:21px;width:3px;height:12px;background:#000"></div>
<div class="a" style="left:22px;top:56.5px;width:12px;height:3px;background:#000"></div>
<div class="a" style="left:5px;top:606px;width:63px;height:17px;background:rgba(255,255,255,0.6);border:2px solid #777;border-top:none"></div>
<div class="t" style="left:12px;top:606px;font-size:12px;color:#333">100 km</div>
<div class="a" style="left:5px;top:623px;width:51px;height:18px;background:rgba(255,255,255,0.6);border:2px solid #777;border-bottom:none"></div>
<div class="t" style="left:12px;top:624px;font-size:12px;color:#333">50 mi</div>
<div class="a" style="left:133px;top:628px;width:167px;height:17px;background:rgba(255,255,255,0.8)"></div>
<div class="a" style="left:137px;top:634px;width:12px;height:4px;background:#4c7be1"></div><div class="a" style="left:137px;top:638px;width:12px;height:4px;background:#ffd500"></div>
<div class="t" style="left:152px;top:629px;font-size:12px;color:#333"><span style="color:#0078a8">Leaflet</span> | © OpenStreetMap</div>
</div>
<div class="a" style="left:353px;top:1px;width:897px;height:51px;background:#eeeeee"></div>
<div class="a" style="left:353px;top:1px;width:114px;height:14px;background:#fff"></div>
<div class="a" style="left:353px;top:15px;width:114px;height:1px;background:#d0d0d0"></div>
<div class="a" style="left:353px;top:16px;width:114px;height:36px;background:#fff"></div>
<div class="a" style="left:467px;top:1px;width:1px;height:51px;background:#dddddd"></div>
<svg style="left:366px;top:4px" width="8" height="9" viewBox="0 0 8 9"><ellipse cx="4" cy="1.6" rx="3.9" ry="1.5" fill="#222"/><path d="M0.1 2.6 Q4 4.6 7.9 2.6 V4.2 Q4 6.2 0.1 4.2 Z M0.1 5 Q4 7 7.9 5 V7.2 Q4 9.4 0.1 7.2 Z" fill="#222"/></svg>
<div class="t" style="left:378.5px;top:0px;font-size:10.8px">PgGeoData</div>
<svg style="left:452px;top:5px" width="7" height="7" viewBox="0 0 7 7"><path d="M0.5 0.5 L6.5 6.5 M6.5 0.5 L0.5 6.5" stroke="#777" stroke-width="1.1"/></svg>
<svg style="left:371px;top:27px" width="8" height="13" viewBox="0 0 8 13"><path d="M1.5 1 H6.5 M2.5 1 V6.5 M5.5 1 V6.5 M0.8 7 H7.2 M4 7 V12.5" fill="none" stroke="#888" stroke-width="1.2"/></svg>
<svg style="left:383.5px;top:28.5px" width="11" height="10" viewBox="0 0 11 10"><path d="M1 0 H10 Q11 0 11 1 V9 Q11 10 10 10 H1 Q0 10 0 9 V1 Q0 0 1 0 Z M1.5 3.5 V5 H5 V3.5 Z M6 3.5 V5 H9.5 V3.5 Z M1.5 6 V8.5 H5 V6 Z M6 6 V8.5 H9.5 V6 Z" fill="#2f6fe0" fill-rule="evenodd"/></svg>
<div class="t" style="left:401px;top:26px;font-size:14.3px;font-style:italic">cities</div>
<svg style="left:441px;top:30px" width="8" height="8" viewBox="0 0 8 8"><path d="M0.5 0.5 L7.5 7.5 M7.5 0.5 L0.5 7.5" stroke="#6a6a7a" stroke-width="1.1"/></svg>
<svg style="left:1219px;top:14px" width="24" height="24" viewBox="0 0 24 24"><circle cx="12" cy="12" r="11.2" fill="#3b3b3b"/><path d="M6.6 12 H17.4 M12 6.6 V17.4" stroke="#fff" stroke-width="2.3"/></svg>
<div class="a" style="left:353px;top:54px;width:300px;height:295px;background:#fff"></div>
<div class="a" style="left:353px;top:54px;width:300px;height:29px;background:#d4d4d4"></div>
<div class="a hdr" style="left:355px;top:55px;width:296px;height:26px"></div>
<div class="t hdr" style="left:360px;top:60px">COLUMNS</div>
<div class="a" style="left:353px;top:83px;width:300px;height:24px;background:#fff"></div>
<div class="a" style="left:353px;top:107px;width:300px;height:1px;background:#cccccc"></div>
<div class="t" style="left:355px;top:88px;font-size:13.333px;color:#888">Search columns</div>
<div class="gb" style="left:582px;top:83px;width:32px;height:24px"></div>
<div class="a" style="left:614px;top:83px;width:2px;height:24px;background:#cccccc"></div>
<div class="gb" style="left:616px;top:83px;width:36px;height:24px"></div>
<div class="t" style="left:587px;top:87px;font-size:12px">Hide</div>
<div class="t" style="left:619px;top:87px;font-size:12px">Show</div>
<div class="a" style="left:358px;top:151px;width:290px;height:19px;background:#bdbdbd"></div>
<svg style="left:385px;top:116px" width="13" height="13" viewBox="0 0 13 13"><rect width="13" height="13" rx="2" fill="#1a73e8"/><path d="M2.8 6.6 L5.4 9.2 L10.4 3.8" fill="none" stroke="#fff" stroke-width="2"/></svg>
<svg style="left:385px;top:135px" width="13" height="13" viewBox="0 0 13 13"><rect width="13" height="13" rx="2" fill="#1a73e8"/><path d="M2.8 6.6 L5.4 9.2 L10.4 3.8" fill="none" stroke="#fff" stroke-width="2"/></svg>
<svg style="left:385px;top:154px" width="13" height="13" viewBox="0 0 13 13"><rect width="13" height="13" rx="2" fill="#1a73e8"/><path d="M2.8 6.6 L5.4 9.2 L10.4 3.8" fill="none" stroke="#fff" stroke-width="2"/></svg>
<svg style="left:405px;top:116px" width="14" height="14" viewBox="0 0 14 14"><path d="M4.5 1.5 H12.5 V9.5 H4.5 Z M1.5 4.5 V12.5 H9.5" fill="none" stroke="#222" stroke-width="1.5"/><path d="M7.5 3.8 L8.8 3 L8.8 8 M7.3 8 H10.3" fill="none" stroke="#222" stroke-width="1"/></svg>
<div class="t" style="left:423px;top:116px"><b>id</b></div><div class="t" style="left:444px;top:116px;color:#888">integer</div>
<div class="t" style="left:405px;top:135px">name</div><div class="t" style="left:449px;top:135px;color:#888">varchar(250)</div>
<div class="t" style="left:405px;top:154px">location</div><div class="t" style="left:462px;top:154px;color:#888">varchar(500)</div>
<div class="a" style="left:353px;top:353px;width:300px;height:262px;background:#fff"></div>
<div class="a" style="left:353px;top:353px;width:300px;height:29px;background:#d4d4d4"></div>
<div class="a hdr" style="left:355px;top:354px;width:296px;height:26px"></div>
<div class="t hdr" style="left:360px;top:359px">FILTERS</div>
<div class="t" style="left:357px;top:386px">Multi column filter</div>
<div class="a" style="left:357px;top:402px;width:293px;height:22px;background:#fff;border:1px solid #cfcfcf"></div>
<div class="t" style="left:360px;top:406px;font-size:13.333px;color:#888">Filter</div>
<div class="gb" style="left:627px;top:403px;width:22px;height:21px"></div>
<svg style="left:632px;top:408px" width="11" height="11" viewBox="0 0 11 11"><path d="M0.5 0.8 H10.5 L6.6 5.2 V10.5 L4.4 9 V5.2 Z" fill="#1a1a1a"/></svg>
<div class="a" style="left:353px;top:615px;width:300px;height:30px;background:#d4d4d4"></div>
<div class="a hdr" style="left:355px;top:617px;width:296px;height:25px"></div>
<div class="t hdr" style="left:360px;top:622px">MACROS</div>
<div class="a" style="left:656px;top:54px;width:594px;height:580px;background:#eeeeee"></div>
<div class="a" style="left:656px;top:54px;width:594px;height:22px;background:#eeeeee"></div>
<div class="a" style="left:723px;top:54px;width:5px;height:45px;background:#d6d6d6"></div>
<div class="a" style="left:849px;top:54px;width:4px;height:45px;background:#d6d6d6"></div>
<div class="a" style="left:656px;top:76px;width:594px;height:1px;background:#d0d0d0"></div>
<div class="a" style="left:656px;top:98px;width:594px;height:1px;background:#d0d0d0"></div>
<div class="a" style="left:656px;top:54px;width:46px;height:22px;overflow:hidden"><div class="t" style="left:-5px;top:3px"><svg style="left:-1px;top:0.5px" width="14" height="14" viewBox="0 0 14 14"><path d="M4.5 1.5 H12.5 V9.5 H4.5 Z M1.5 4.5 V12.5 H9.5" fill="none" stroke="#222" stroke-width="1.5"/><path d="M7.5 3.8 L8.8 3 L8.8 8 M7.3 8 H10.3" fill="none" stroke="#222" stroke-width="1"/></svg><b style="margin-left:16px">id</b> <span style="color:#888">integer</span></div></div>
<div class="a" style="left:728px;top:54px;width:99px;height:22px;overflow:hidden"><div class="t" style="left:3px;top:3px">name <span style="color:#888">varchar(250)</span></div></div>
<div class="t" style="left:856px;top:57px">location <span style="color:#888">varchar(500)</span></div>
<div class="gb" style="left:702px;top:55px;width:21px;height:21px"></div>
<svg style="left:708.5px;top:63px" width="8" height="5" viewBox="0 0 8 5"><path d="M0.8 0.8 L4 4 L7.2 0.8" fill="none" stroke="#333" stroke-width="1.3"/></svg>
<div class="gb" style="left:827px;top:55px;width:22px;height:21px"></div>
<svg style="left:834.0px;top:63px" width="8" height="5" viewBox="0 0 8 5"><path d="M0.8 0.8 L4 4 L7.2 0.8" fill="none" stroke="#333" stroke-width="1.3"/></svg>
<div class="gb" style="left:1229px;top:55px;width:21px;height:21px"></div>
<svg style="left:1235.5px;top:63px" width="8" height="5" viewBox="0 0 8 5"><path d="M0.8 0.8 L4 4 L7.2 0.8" fill="none" stroke="#333" stroke-width="1.3"/></svg>
<div class="a" style="left:656px;top:77px;width:24px;height:21px;background:#fff;overflow:hidden"><div class="t" style="left:-7px;top:4px;font-size:13.333px;color:#888">Filter</div></div>
<div class="a" style="left:728px;top:77px;width:77px;height:21px;background:#fff"></div><div class="t" style="left:731px;top:81px;font-size:13.333px;color:#888">Filter</div>
<div class="a" style="left:853px;top:77px;width:353px;height:21px;background:#fff"></div><div class="t" style="left:856px;top:81px;font-size:13.333px;color:#888">Filter</div>
<div class="gb" style="left:681px;top:77px;width:21px;height:22px"></div>
<div class="a" style="left:690.5px;top:83px;width:2.4px;height:2.4px;background:#222;box-shadow:0 3.6px 0 #222,0 7.2px 0 #222"></div>
<div class="gb" style="left:806px;top:77px;width:21px;height:22px"></div>
<div class="a" style="left:815.5px;top:83px;width:2.4px;height:2.4px;background:#222;box-shadow:0 3.6px 0 #222,0 7.2px 0 #222"></div>
<div class="gb" style="left:1207px;top:77px;width:21px;height:22px"></div>
<div class="a" style="left:1216.5px;top:83px;width:2.4px;height:2.4px;background:#222;box-shadow:0 3.6px 0 #222,0 7.2px 0 #222"></div>
<div class="gb" style="left:703px;top:77px;width:21px;height:22px"></div>
<svg style="left:708.5px;top:82px" width="11" height="11" viewBox="0 0 11 11"><path d="M0.5 0.8 H10.5 L6.6 5.2 V10.5 L4.4 9 V5.2 Z" fill="#1a1a1a"/></svg>
<div class="gb" style="left:828px;top:77px;width:21px;height:22px"></div>
<svg style="left:833.5px;top:82px" width="11" height="11" viewBox="0 0 11 11"><path d="M0.5 0.8 H10.5 L6.6 5.2 V10.5 L4.4 9 V5.2 Z" fill="#1a1a1a"/></svg>
<div class="gb" style="left:1229px;top:77px;width:21px;height:22px"></div>
<svg style="left:1234.5px;top:82px" width="11" height="11" viewBox="0 0 11 11"><path d="M0.5 0.8 H10.5 L6.6 5.2 V10.5 L4.4 9 V5.2 Z" fill="#1a1a1a"/></svg>
<div class="a" style="left:656px;top:99px;width:594px;height:24px;background:#ffffff"></div>
<div class="a" style="left:853px;top:99px;width:397px;height:24px;background:#c0c0c0"></div>
<div class="a" style="left:656px;top:122px;width:594px;height:24px;background:#ffffff"></div>
<div class="a" style="left:853px;top:122px;width:397px;height:24px;background:#c0c0c0"></div>
<div class="a" style="left:656px;top:145px;width:594px;height:24px;background:#efefef"></div>
<div class="a" style="left:853px;top:145px;width:397px;height:24px;background:#c0c0c0"></div>
<div class="a" style="left:656px;top:168px;width:594px;height:24px;background:#ffffff"></div>
<div class="a" style="left:853px;top:168px;width:397px;height:24px;background:#c0c0c0"></div>
<div class="a" style="left:656px;top:191px;width:594px;height:24px;background:#ffffff"></div>
<div class="a" style="left:853px;top:191px;width:397px;height:24px;background:#c0c0c0"></div>
<div class="a" style="left:656px;top:214px;width:594px;height:24px;background:#e9f0fb"></div>
<div class="a" style="left:853px;top:214px;width:397px;height:24px;background:#c0c0c0"></div>
<div class="a" style="left:656px;top:237px;width:594px;height:24px;background:#ffffff"></div>
<div class="a" style="left:853px;top:237px;width:397px;height:24px;background:#c0c0c0"></div>
<div class="a" style="left:656px;top:260px;width:594px;height:24px;background:#ffffff"></div>
<div class="a" style="left:853px;top:260px;width:397px;height:24px;background:#c0c0c0"></div>
<div class="a" style="left:656px;top:283px;width:594px;height:24px;background:#efefef"></div>
<div class="a" style="left:853px;top:283px;width:397px;height:24px;background:#c0c0c0"></div>
<div class="a" style="left:656px;top:306px;width:594px;height:24px;background:#ffffff"></div>
<div class="a" style="left:853px;top:306px;width:397px;height:24px;background:#c0c0c0"></div>
<div class="a" style="left:656px;top:122px;width:594px;height:1px;background:#d6d6d6"></div>
<div class="a" style="left:727px;top:99px;width:1px;height:23px;background:#dedede"></div>
<div class="a" style="left:852px;top:99px;width:1px;height:23px;background:#dedede"></div>
<div class="t" style="left:731px;top:103px">Praha</div>
<div class="a" style="left:853px;top:99px;width:397px;height:23px;overflow:hidden"><div class="t" style="left:3px;top:4px">POLYGON((14.2 50,14.2 50.15,14.6 50.15,14.6 50,14.2 50))</div></div>
<div class="a" style="left:656px;top:108px;width:1.2px;height:6px;background:#a8dcc8"></div>
<div class="a" style="left:656px;top:145px;width:594px;height:1px;background:#d6d6d6"></div>
<div class="a" style="left:727px;top:122px;width:1px;height:23px;background:#dedede"></div>
<div class="a" style="left:852px;top:122px;width:1px;height:23px;background:#dedede"></div>
<div class="t" style="left:731px;top:126px">Brno</div>
<div class="a" style="left:853px;top:122px;width:397px;height:23px;overflow:hidden"><div class="t" style="left:3px;top:4px">POLYGON((16.5 49.1,16.5 49.3,16.8 49.3,16.8 49.1,16.5 49.1))</div></div>
<div class="a" style="left:656px;top:131px;width:1.2px;height:6px;background:#a8dcc8"></div>
<div class="a" style="left:656px;top:168px;width:594px;height:1px;background:#d6d6d6"></div>
<div class="a" style="left:727px;top:145px;width:1px;height:23px;background:#dedede"></div>
<div class="a" style="left:852px;top:145px;width:1px;height:23px;background:#dedede"></div>
<div class="t" style="left:731px;top:149px">Ostrava</div>
<div class="a" style="left:853px;top:145px;width:397px;height:23px;overflow:hidden"><div class="t" style="left:3px;top:4px">POLYGON((18.15 49.7,18.15 49.9,18.4 49.9,18.4 49.7,18.15 49.7))</div></div>
<div class="a" style="left:656px;top:154px;width:1.2px;height:6px;background:#a8dcc8"></div>
<div class="a" style="left:656px;top:191px;width:594px;height:1px;background:#d6d6d6"></div>
<div class="a" style="left:727px;top:168px;width:1px;height:23px;background:#dedede"></div>
<div class="a" style="left:852px;top:168px;width:1px;height:23px;background:#dedede"></div>
<div class="t" style="left:731px;top:172px">Plzeň</div>
<div class="a" style="left:853px;top:168px;width:397px;height:23px;overflow:hidden"><div class="t" style="left:3px;top:4px">POLYGON((13.3 49.7,13.3 49.8,13.5 49.8,13.5 49.7,13.3 49.7))</div></div>
<div class="a" style="left:656px;top:177px;width:1.2px;height:6px;background:#a8dcc8"></div>
<div class="a" style="left:656px;top:214px;width:594px;height:1px;background:#d6d6d6"></div>
<div class="a" style="left:727px;top:191px;width:1px;height:23px;background:#dedede"></div>
<div class="a" style="left:852px;top:191px;width:1px;height:23px;background:#dedede"></div>
<div class="t" style="left:731px;top:195px">Olomouc</div>
<div class="a" style="left:853px;top:191px;width:397px;height:23px;overflow:hidden"><div class="t" style="left:3px;top:4px">POLYGON((17.2 49.5,17.2 49.65,17.3 49.65,17.3 49.5,17.2 49.5))</div></div>
<div class="a" style="left:656px;top:200px;width:1.2px;height:6px;background:#a8dcc8"></div>
<div class="a" style="left:656px;top:237px;width:594px;height:1px;background:#d6d6d6"></div>
<div class="a" style="left:727px;top:214px;width:1px;height:23px;background:#dedede"></div>
<div class="a" style="left:852px;top:214px;width:1px;height:23px;background:#dedede"></div>
<div class="t" style="left:731px;top:218px">Liberec</div>
<div class="a" style="left:853px;top:214px;width:397px;height:23px;overflow:hidden"><div class="t" style="left:3px;top:4px">POLYGON((14.9 50.7,14.9 50.8,15.1 50.8,15.1 50.7,14.9 50.7))</div></div>
<div class="a" style="left:656px;top:223px;width:1.2px;height:6px;background:#a8dcc8"></div>
<div class="a" style="left:656px;top:260px;width:594px;height:1px;background:#d6d6d6"></div>
<div class="a" style="left:727px;top:237px;width:1px;height:23px;background:#dedede"></div>
<div class="a" style="left:852px;top:237px;width:1px;height:23px;background:#dedede"></div>
<div class="t" style="left:731px;top:241px">České Budějovice</div>
<div class="a" style="left:853px;top:237px;width:397px;height:23px;overflow:hidden"><div class="t" style="left:3px;top:4px">POLYGON((14.4 48.9,14.4 49,14.6 49,14.6 48.9,14.4 48.9))</div></div>
<div class="a" style="left:656px;top:246px;width:1.2px;height:6px;background:#a8dcc8"></div>
<div class="a" style="left:656px;top:283px;width:594px;height:1px;background:#d6d6d6"></div>
<div class="a" style="left:727px;top:260px;width:1px;height:23px;background:#dedede"></div>
<div class="a" style="left:852px;top:260px;width:1px;height:23px;background:#dedede"></div>
<div class="t" style="left:731px;top:264px">Hradec Králové</div>
<div class="a" style="left:853px;top:260px;width:397px;height:23px;overflow:hidden"><div class="t" style="left:3px;top:4px">POLYGON((15.7 50.1,15.7 50.3,16 50.3,16 50.1,15.7 50.1))</div></div>
<div class="a" style="left:656px;top:269px;width:1.2px;height:6px;background:#a8dcc8"></div>
<div class="a" style="left:656px;top:306px;width:594px;height:1px;background:#d6d6d6"></div>
<div class="a" style="left:727px;top:283px;width:1px;height:23px;background:#dedede"></div>
<div class="a" style="left:852px;top:283px;width:1px;height:23px;background:#dedede"></div>
<div class="t" style="left:731px;top:287px">Pardubice</div>
<div class="a" style="left:853px;top:283px;width:397px;height:23px;overflow:hidden"><div class="t" style="left:3px;top:4px">POLYGON((15.7 49.9,15.7 50.1,15.9 50.1,15.9 49.9,15.7 49.9))</div></div>
<div class="a" style="left:656px;top:292px;width:1.2px;height:6px;background:#a8dcc8"></div>
<div class="a" style="left:656px;top:329px;width:594px;height:1px;background:#d6d6d6"></div>
<div class="a" style="left:727px;top:306px;width:1px;height:23px;background:#dedede"></div>
<div class="a" style="left:852px;top:306px;width:1px;height:23px;background:#dedede"></div>
<div class="t" style="left:731px;top:310px">Ústí nad Labem</div>
<div class="a" style="left:853px;top:306px;width:397px;height:23px;overflow:hidden"><div class="t" style="left:3px;top:4px">POLYGON((13.9 50.6,13.9 50.7,14.2 50.7,14.2 50.6,13.9 50.6))</div></div>
<div class="t" style="left:658px;top:310px;color:#2e8b22">0</div>
<div class="a" style="left:1188px;top:52px;width:11px;height:278px;background:#eeeeee"></div>
<div class="a" style="left:984px;top:610px;width:175px;height:15px;background:#dadada"></div>
<div class="t" style="left:985px;top:609px">Rows: 10, Count: 10, Sum:0</div>
<div class="a" style="left:656px;top:634px;width:594px;height:11px;background:#eeeeee"></div>
<div class="a" style="left:656px;top:634px;width:462px;height:11px;background:#bdbdbd"></div>
<div class="a" style="left:1188px;top:629px;width:11px;height:5px;background:#c4c4c4"></div>
<div class="a" style="left:1188px;top:634px;width:11px;height:11px;background:#dcdcdc"></div>
<div class="a" style="left:353px;top:645px;width:897px;height:53px;background:#eeeeee"></div>
<div class="a" style="left:656px;top:645px;width:594px;height:1px;background:#d8d8d8"></div>
<div class="btn" style="left:358px;top:648px;width:118px"></div>
<div class="btn" style="left:487px;top:648px;width:89px"></div>
<div class="btn" style="left:586px;top:648px;width:109px"></div>
<div class="btn" style="left:705px;top:648px;width:71px"></div>
<div class="btn" style="left:786px;top:648px;width:93px"></div>
<div class="btn" style="left:889px;top:648px;width:121px"></div>
<div class="btn" style="left:1021px;top:648px;width:128px"></div>
<div class="btn" style="left:358px;top:674px;width:96px"></div>
<div class="btn" style="left:465px;top:674px;width:124px"></div>
<div class="t" style="left:389px;top:651px;color:#222">Structure</div>
<div class="t" style="left:518px;top:651px;color:#222">SQL</div>
<div class="t" style="left:613px;top:651px;color:#222">Refresh</div>
<div class="t" style="left:736px;top:651px;color:#8a8a8a">Save</div>
<div class="t" style="left:817px;top:651px;color:#222">New row</div>
<div class="t" style="left:920px;top:651px;color:#222">Delete row(s)</div>
<div class="t" style="left:1052px;top:651px;color:#222">Switch to form</div>
<div class="t" style="left:389px;top:677px">Export</div>
<div class="t" style="left:497px;top:677px">View columns</div>
<div class="a" style="left:667px;top:648px;width:1px;height:22px;background:#999"></div>
<svg style="left:366.7px;top:652.5px" width="13" height="13" viewBox="0 0 13 13"><path d="M4 4 L11.8 11.8" stroke="#2525a6" stroke-width="2.6"/><path d="M0.6 2.2 L2.2 0.6 L3.2 1.6 L2.4 2.6 L2.8 3 L3.6 2.2 L4.8 3.4 Q5 5 3.4 4.8 Z" fill="#2525a6"/><circle cx="2.8" cy="2.8" r="2.3" fill="#2525a6"/><path d="M1.3 1.3 L2.6 2.6" stroke="#dcdcdc" stroke-width="1.1"/><path d="M1.6 11.6 L7.5 5.7" stroke="#2525a6" stroke-width="2.4"/><path d="M8 3.8 L10.3 1.5 Q11.5 0.6 12.2 1.3 Q12.9 2 12 3.2 L9.7 5.5 Z" fill="#2525a6"/></svg>
<svg style="left:453px;top:655px" width="8" height="8" viewBox="0 0 8 8"><path d="M1 7 L6.5 1.5" stroke="#2525a6" stroke-width="2"/><path d="M2 0.5 H7.5 V6 Z" fill="#2525a6"/></svg>
<svg style="left:552.5px;top:655px" width="8" height="8" viewBox="0 0 8 8"><path d="M1 7 L6.5 1.5" stroke="#2525a6" stroke-width="2"/><path d="M2 0.5 H7.5 V6 Z" fill="#2525a6"/></svg>
<svg style="left:497px;top:652px" width="9" height="12" viewBox="0 0 9 12"><path d="M0 0 H5.5 L9 3.5 V12 H0 Z M5 0.5 V4 H8.5" fill="#2525a6" fill-rule="evenodd"/></svg>
<svg style="left:595px;top:653px" width="12" height="12" viewBox="0 0 12 12"><path d="M10 6 A4.2 4.2 0 1 1 8.5 2.6" fill="none" stroke="#2525a6" stroke-width="1.6"/><path d="M7 0.5 L11.2 0.8 L10.6 4.8 Z" fill="#2525a6"/></svg>
<svg style="left:676px;top:657px" width="8" height="5" viewBox="0 0 8 5"><path d="M0.8 0.8 L4 4 L7.2 0.8" fill="none" stroke="#2525a6" stroke-width="1.4"/></svg>
<svg style="left:436px;top:683px" width="8" height="5" viewBox="0 0 8 5"><path d="M0.8 0.8 L4 4 L7.2 0.8" fill="none" stroke="#222" stroke-width="1.4"/></svg>
<svg style="left:714px;top:653px" width="12" height="12" viewBox="0 0 12 12"><path d="M0 1 Q0 0 1 0 H9 L12 3 V11 Q12 12 11 12 H1 Q0 12 0 11 Z M2 1.5 V4.5 H8.5 V1.5 Z M6 6.5 A2 2 0 1 0 6.01 6.5 Z" fill="#8a8a8a" fill-rule="evenodd"/></svg>
<svg style="left:794.5px;top:653px" width="12" height="12" viewBox="0 0 12 12"><circle cx="6" cy="6" r="6" fill="#2525a6"/><path d="M3 6 H9 M6 3 V9" stroke="#fff" stroke-width="1.6"/></svg>
<svg style="left:898.5px;top:653px" width="12" height="12" viewBox="0 0 12 12"><circle cx="6" cy="6" r="6" fill="#2525a6"/><path d="M3 6 H9" stroke="#fff" stroke-width="1.8"/></svg>
<svg style="left:1031px;top:652.5px" width="11" height="13" viewBox="0 0 11 13"><rect x="0.8" y="0.8" width="9.4" height="11.4" rx="1" fill="none" stroke="#2525a6" stroke-width="1.6"/><path d="M2.5 3.5 H8.5 M2.5 6.5 H8.5 M2.5 9.3 H8.5" stroke="#2525a6" stroke-width="1.4"/></svg>
<svg style="left:367px;top:678.5px" width="13" height="12" viewBox="0 0 13 12"><path d="M1 1 H12 V11 H1 Z" fill="none" stroke="#2525a6" stroke-width="1.6"/><path d="M1 3 H12" stroke="#2525a6" stroke-width="1.5"/><path d="M4 6.5 H9" stroke="#2525a6" stroke-width="1.4"/><path d="M8 4.5 L10.5 6.5 L8 8.5" fill="none" stroke="#2525a6" stroke-width="1.4"/></svg>
<svg style="left:475.5px;top:680.5px" width="11" height="9" viewBox="0 0 11 9"><rect x="0" y="0" width="3" height="9" fill="#2525a6"/><rect x="4" y="0" width="3" height="9" fill="#2525a6"/><rect x="8" y="0" width="3" height="9" fill="#2525a6"/></svg>
<div class="a" style="left:0;top:698px;width:1250px;height:22px;background:#0550b6"></div>
<div class="t" style="left:28px;top:701px;color:#fff">PgGeoData</div>
<div class="t" style="left:180px;top:701px;color:#fff">Postgres-connection</div>
<div class="t" style="left:385px;top:701px;color:#fff">postgres</div>
<div class="t" style="left:477px;top:701px;color:#fff">Connected</div>
<div class="t" style="left:582px;top:701px;color:#fff">PostgreSQL 18.0</div>
<div class="t" style="left:732px;top:701px;color:#fff">a few seconds ago</div>
<div class="t" style="left:1182px;top:701px;color:#fff">Rows: 10</div>
<svg style="left:12px;top:702px" width="10" height="13" viewBox="0 0 10 13"><ellipse cx="5" cy="2" rx="5" ry="2" fill="#ddd"/><path d="M0 3.3 Q5 6 10 3.3 V5.8 Q5 8.5 0 5.8 Z M0 7 Q5 9.7 10 7 V10.5 Q5 13.5 0 10.5 Z" fill="#ddd"/></svg>
<div class="a" style="left:121px;top:701px;width:20px;height:16px;background:#dddddd;border-radius:2px"></div>
<svg style="left:125px;top:703px" width="12" height="12" viewBox="0 0 12 12"><path d="M6 0.5 A5.5 5.5 0 0 0 6 11.5 Q7.5 11.5 7.2 10 Q6.8 8.5 8.3 8.3 Q11.5 8.5 11.5 5.5 Q11.5 0.5 6 0.5 Z" fill="#111"/><circle cx="3.3" cy="6" r="1" fill="#ddd"/><circle cx="4.3" cy="3.3" r="1" fill="#ddd"/><circle cx="7.2" cy="2.8" r="1" fill="#ddd"/><circle cx="9.2" cy="4.8" r="1" fill="#ddd"/></svg>
<div class="a" style="left:327px;top:701px;width:20px;height:16px;background:#dddddd;border-radius:2px"></div>
<svg style="left:331px;top:703px" width="12" height="12" viewBox="0 0 12 12"><path d="M6 0.5 A5.5 5.5 0 0 0 6 11.5 Q7.5 11.5 7.2 10 Q6.8 8.5 8.3 8.3 Q11.5 8.5 11.5 5.5 Q11.5 0.5 6 0.5 Z" fill="#111"/><circle cx="3.3" cy="6" r="1" fill="#ddd"/><circle cx="4.3" cy="3.3" r="1" fill="#ddd"/><circle cx="7.2" cy="2.8" r="1" fill="#ddd"/><circle cx="9.2" cy="4.8" r="1" fill="#ddd"/></svg>
<svg style="left:163px;top:702px" width="11" height="13" viewBox="0 0 11 13"><rect x="0" y="0" width="11" height="3.4" fill="#ddd"/><rect x="0" y="4.6" width="11" height="3.4" fill="#ddd"/><rect x="0" y="9.2" width="11" height="3.4" fill="#ddd"/></svg>
<svg style="left:368px;top:703px" width="11" height="11" viewBox="0 0 11 11"><circle cx="5.5" cy="3" r="2.8" fill="#ddd"/><path d="M0 11 Q0 6.8 5.5 6.8 Q11 6.8 11 11 Z" fill="#ddd"/></svg>
<svg style="left:459.5px;top:703px" width="12" height="12" viewBox="0 0 12 12"><circle cx="6" cy="6" r="6" fill="#8ed26a"/><path d="M3 6.2 L5.2 8.3 L9 4" fill="none" stroke="#fff" stroke-width="1.6"/></svg>
<svg style="left:565px;top:703px" width="12" height="11" viewBox="0 0 12 11"><path d="M0 0 H12 V3.5 Q10.5 5.5 12 7.5 V11 H0 V7.5 Q1.5 5.5 0 3.5 Z" fill="#ddd"/><path d="M4 3 H8 M4 5.5 H8 M4 8 H8" stroke="#0550b6" stroke-width="1"/></svg>
<svg style="left:711px;top:703px" width="12" height="12" viewBox="0 0 12 12"><path d="M6.5 1 A5 5 0 1 1 1.8 8.2" fill="none" stroke="#ddd" stroke-width="1.4"/><path d="M0 5 L3 5 L1.5 2 Z" fill="#ddd"/><path d="M6.3 3.5 V6.5 L8.3 7.8" fill="none" stroke="#ddd" stroke-width="1.2"/></svg>
</body></html>
